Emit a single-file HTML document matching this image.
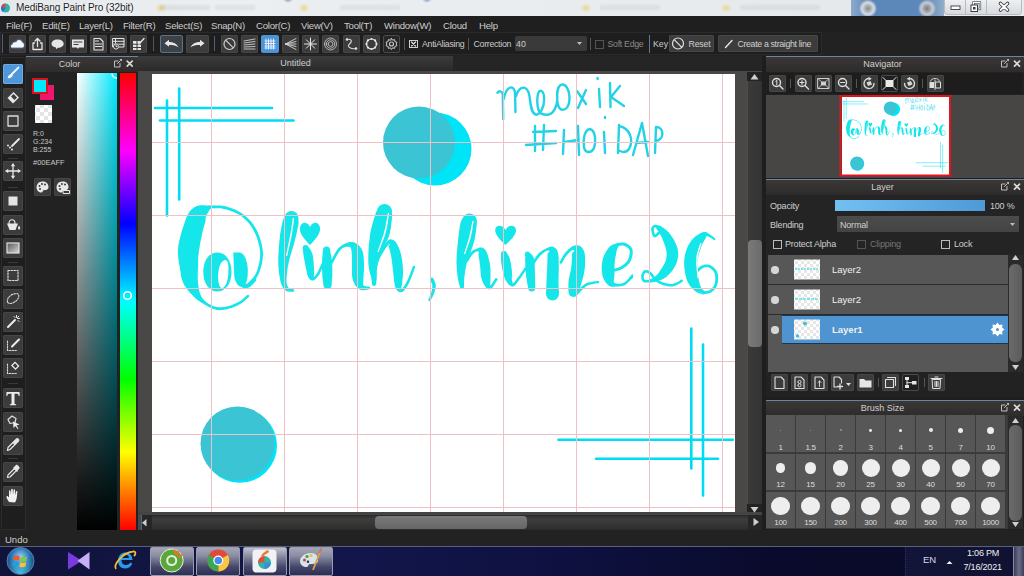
<!DOCTYPE html><html><head><meta charset="utf-8"><style>
*{margin:0;padding:0;box-sizing:border-box}
html,body{width:1024px;height:576px;overflow:hidden;background:#222;font-family:"Liberation Sans",sans-serif}
.a{position:absolute}
.btn{position:absolute;background:#3c3c3c;border-radius:2px}
.ph{position:absolute;height:16px;background:linear-gradient(#3a3735,#2e2c2b);border-top:1px solid #6a86a2;color:#d0d0d0;font-size:9px;text-align:center;line-height:15px;padding-right:25px}
.t{position:absolute;color:#d0d0d0;white-space:nowrap;line-height:1}
svg{position:absolute;left:0;top:0}
</style></head><body>
<div class="a" style="left:0px;top:0px;width:1024px;height:16px;background:linear-gradient(90deg,#e4e8eb 0%,#eceff1 20%,#e9ecef 60%,#e6e9ec 82%,#e8ebee 100%)"></div>
<div class="a" style="left:851px;top:0px;width:93px;height:16px;background:linear-gradient(90deg,#8eaacb,#5a86b8 20%,#5d88ba 80%,#93adc9)"></div>
<div class="a" style="left:155px;top:3px;width:12px;height:10px;background:radial-gradient(#e8d890,rgba(230,220,160,0) 70%)"></div>
<div class="a" style="left:298px;top:3px;width:12px;height:10px;background:radial-gradient(#e8d890,rgba(230,220,160,0) 70%)"></div>
<div class="a" style="left:283px;top:-4px;width:10px;height:7px;background:radial-gradient(#7a9ac8,rgba(120,150,200,0) 70%)"></div>
<div class="a" style="left:422px;top:-4px;width:10px;height:7px;background:radial-gradient(#7a9ac8,rgba(120,150,200,0) 70%)"></div>
<div class="a" style="left:580px;top:3px;width:12px;height:10px;background:radial-gradient(#e8d890,rgba(230,220,160,0) 70%)"></div>
<div class="a" style="left:720px;top:3px;width:12px;height:10px;background:radial-gradient(#e8d890,rgba(230,220,160,0) 70%)"></div>
<div class="a" style="left:858px;top:0px;width:20px;height:17px;background:radial-gradient(circle,#8a8a8a 0,#b8bec6 30%,#d8dde2 45%,rgba(200,210,220,0) 70%)"></div>
<div class="a" style="left:917px;top:0px;width:20px;height:17px;background:radial-gradient(circle,#7a7a7a 0,#a8aeb6 30%,#c8ccd2 45%,rgba(200,210,220,0) 70%)"></div>
<div class="a" style="left:160px;top:5px;width:50px;height:5px;background:rgba(0,0,0,0.06);filter:blur(1px)"></div>
<div class="a" style="left:215px;top:5px;width:40px;height:5px;background:rgba(0,0,0,0.05);filter:blur(1px)"></div>
<div class="a" style="left:340px;top:5px;width:60px;height:5px;background:rgba(0,0,0,0.05);filter:blur(1px)"></div>
<div class="a" style="left:600px;top:5px;width:60px;height:5px;background:rgba(0,0,0,0.05);filter:blur(1px)"></div>
<div class="a" style="left:740px;top:5px;width:80px;height:5px;background:rgba(0,0,0,0.05);filter:blur(1px)"></div>
<div class="t" style="left:16px;top:3px;font-size:10px;color:#1e1e1e;letter-spacing:-0.1px;text-shadow:0 0 3px #fff">MediBang Paint Pro (32bit)</div>
<div class="a" style="left:944px;top:0px;width:78px;height:15px;background:linear-gradient(#eef0f2,#d6dade);border:1px solid #b8bcc2;border-top:none;border-radius:0 0 4px 4px"></div>
<div class="a" style="left:965px;top:0px;width:1px;height:15px;background:#b8bcc2"></div>
<div class="a" style="left:986px;top:0px;width:1px;height:15px;background:#b8bcc2"></div>
<div class="a" style="left:0px;top:16px;width:1024px;height:16px;background:#1f1f1f"></div>
<div class="t" style="left:6px;top:21px;font-size:9.6px;color:#cdcdcd;letter-spacing:-0.25px">File(F)</div>
<div class="t" style="left:42px;top:21px;font-size:9.6px;color:#cdcdcd;letter-spacing:-0.25px">Edit(E)</div>
<div class="t" style="left:79px;top:21px;font-size:9.6px;color:#cdcdcd;letter-spacing:-0.25px">Layer(L)</div>
<div class="t" style="left:123px;top:21px;font-size:9.6px;color:#cdcdcd;letter-spacing:-0.25px">Filter(R)</div>
<div class="t" style="left:165px;top:21px;font-size:9.6px;color:#cdcdcd;letter-spacing:-0.25px">Select(S)</div>
<div class="t" style="left:211px;top:21px;font-size:9.6px;color:#cdcdcd;letter-spacing:-0.25px">Snap(N)</div>
<div class="t" style="left:256px;top:21px;font-size:9.6px;color:#cdcdcd;letter-spacing:-0.25px">Color(C)</div>
<div class="t" style="left:301px;top:21px;font-size:9.6px;color:#cdcdcd;letter-spacing:-0.25px">View(V)</div>
<div class="t" style="left:344px;top:21px;font-size:9.6px;color:#cdcdcd;letter-spacing:-0.25px">Tool(T)</div>
<div class="t" style="left:384px;top:21px;font-size:9.6px;color:#cdcdcd;letter-spacing:-0.25px">Window(W)</div>
<div class="t" style="left:443px;top:21px;font-size:9.6px;color:#cdcdcd;letter-spacing:-0.25px">Cloud</div>
<div class="t" style="left:479px;top:21px;font-size:9.6px;color:#cdcdcd;letter-spacing:-0.25px">Help</div>
<div class="a" style="left:0px;top:32px;width:1024px;height:24px;background:#222"></div>
<div class="a" style="left:0px;top:32px;width:822px;height:23px;background:#1e1e1e;border:1px solid #2a2a2a"></div>
<div class="btn" style="left:9px;top:35px;width:17px;height:18px;background:#3c3c3c;box-shadow:inset 0 0 0 1px #474747;"></div>
<div class="btn" style="left:29px;top:35px;width:17px;height:18px;background:#3c3c3c;box-shadow:inset 0 0 0 1px #474747;"></div>
<div class="btn" style="left:49px;top:35px;width:17px;height:18px;background:#3c3c3c;box-shadow:inset 0 0 0 1px #474747;"></div>
<div class="btn" style="left:70px;top:35px;width:17px;height:18px;background:#3c3c3c;box-shadow:inset 0 0 0 1px #474747;"></div>
<div class="btn" style="left:90px;top:35px;width:17px;height:18px;background:#3c3c3c;box-shadow:inset 0 0 0 1px #474747;"></div>
<div class="btn" style="left:110px;top:35px;width:17px;height:18px;background:#3c3c3c;box-shadow:inset 0 0 0 1px #474747;"></div>
<div class="btn" style="left:130px;top:35px;width:17px;height:18px;background:#3c3c3c;box-shadow:inset 0 0 0 1px #474747;"></div>
<div class="a" style="left:2px;top:34px;width:1px;height:19px;background:#4e6275"></div>
<div class="a" style="left:153px;top:36px;width:1px;height:15px;background:#555"></div>
<div class="btn" style="left:160px;top:35px;width:23px;height:18px;background:#3d4247;border:1px solid #5a7490"></div>
<div class="btn" style="left:186px;top:35px;width:23px;height:18px;background:#3c3c3c;box-shadow:inset 0 0 0 1px #474747;"></div>
<div class="a" style="left:214px;top:36px;width:1px;height:15px;background:#4e6275"></div>
<div class="btn" style="left:221px;top:35px;width:17px;height:18px;background:#3c3c3c;box-shadow:inset 0 0 0 1px #474747;"></div>
<div class="btn" style="left:241px;top:35px;width:17px;height:18px;background:#3c3c3c;box-shadow:inset 0 0 0 1px #474747;"></div>
<div class="btn" style="left:282px;top:35px;width:17px;height:18px;background:#3c3c3c;box-shadow:inset 0 0 0 1px #474747;"></div>
<div class="btn" style="left:302px;top:35px;width:17px;height:18px;background:#3c3c3c;box-shadow:inset 0 0 0 1px #474747;"></div>
<div class="btn" style="left:322px;top:35px;width:17px;height:18px;background:#3c3c3c;box-shadow:inset 0 0 0 1px #474747;"></div>
<div class="btn" style="left:343px;top:35px;width:17px;height:18px;background:#3c3c3c;box-shadow:inset 0 0 0 1px #474747;"></div>
<div class="btn" style="left:363px;top:35px;width:17px;height:18px;background:#3c3c3c;box-shadow:inset 0 0 0 1px #474747;"></div>
<div class="btn" style="left:261px;top:35px;width:18px;height:18px;background:#4d94d6;"></div>
<div class="btn" style="left:383px;top:35px;width:17px;height:18px;background:#262626;border:1px solid #4a4a4a"></div>
<div class="a" style="left:404px;top:38px;width:1px;height:12px;background:#555"></div>
<div class="a" style="left:409px;top:40px;width:9px;height:8px;border:1px solid #cfcfcf"></div>
<div class="t" style="left:422px;top:40px;font-size:8.8px;color:#cccccc;letter-spacing:-0.3px">AntiAliasing</div>
<div class="a" style="left:468px;top:38px;width:1px;height:12px;background:#555"></div>
<div class="t" style="left:473.5px;top:40px;font-size:8.8px;color:#cccccc;letter-spacing:-0.3px">Correction</div>
<div class="btn" style="left:515px;top:36px;width:72px;height:15px;background:#3a3a3a;"></div>
<div class="t" style="left:516px;top:40px;font-size:8.8px;color:#cccccc;">40</div>
<div class="a" style="left:590px;top:38px;width:1px;height:12px;background:#555"></div>
<div class="a" style="left:595px;top:40px;width:9px;height:9px;border:1px solid #555"></div>
<div class="t" style="left:607.5px;top:40px;font-size:8.8px;color:#8a8a8a;letter-spacing:-0.3px">Soft Edge</div>
<div class="a" style="left:649px;top:35px;width:1px;height:18px;background:#5a7a9a"></div>
<div class="t" style="left:653px;top:40px;font-size:8.8px;color:#cccccc;">Key</div>
<div class="btn" style="left:669px;top:35px;width:45px;height:17px;background:#3c3c3c;box-shadow:inset 0 0 0 1px #474747;"></div>
<div class="t" style="left:688.5px;top:40px;font-size:8.8px;color:#d0d0d0;letter-spacing:-0.2px">Reset</div>
<div class="btn" style="left:718px;top:35px;width:100px;height:17px;background:#3c3c3c;box-shadow:inset 0 0 0 1px #474747;"></div>
<div class="t" style="left:737.5px;top:40px;font-size:8.8px;color:#d0d0d0;letter-spacing:-0.35px">Create a straight line</div>
<div class="a" style="left:0px;top:56px;width:26px;height:474px;background:#1e1e1e"></div>
<div class="a" style="left:1px;top:57px;width:25px;height:473px;border:1px solid #2c2c2c"></div>
<div class="btn" style="left:3px;top:64px;width:20px;height:20px;background:#4f97d8;box-shadow:inset 0 0 0 1px #6aaae6"></div>
<div class="btn" style="left:3px;top:88px;width:20px;height:20px;background:#3c3c3c;box-shadow:inset 0 0 0 1px #474747;"></div>
<div class="btn" style="left:3px;top:111px;width:20px;height:20px;background:#3c3c3c;box-shadow:inset 0 0 0 1px #474747;"></div>
<div class="btn" style="left:3px;top:134px;width:20px;height:20px;background:#3c3c3c;box-shadow:inset 0 0 0 1px #474747;"></div>
<div class="btn" style="left:3px;top:161px;width:20px;height:20px;background:#3c3c3c;box-shadow:inset 0 0 0 1px #474747;"></div>
<div class="btn" style="left:3px;top:191px;width:20px;height:20px;background:#3c3c3c;box-shadow:inset 0 0 0 1px #474747;"></div>
<div class="btn" style="left:3px;top:214.5px;width:20px;height:20px;background:#3c3c3c;box-shadow:inset 0 0 0 1px #474747;"></div>
<div class="btn" style="left:3px;top:238px;width:20px;height:20px;background:#3c3c3c;box-shadow:inset 0 0 0 1px #474747;"></div>
<div class="btn" style="left:3px;top:265.5px;width:20px;height:20px;background:#3c3c3c;box-shadow:inset 0 0 0 1px #474747;"></div>
<div class="btn" style="left:3px;top:289px;width:20px;height:20px;background:#3c3c3c;box-shadow:inset 0 0 0 1px #474747;"></div>
<div class="btn" style="left:3px;top:312px;width:20px;height:20px;background:#3c3c3c;box-shadow:inset 0 0 0 1px #474747;"></div>
<div class="btn" style="left:3px;top:335px;width:20px;height:20px;background:#3c3c3c;box-shadow:inset 0 0 0 1px #474747;"></div>
<div class="btn" style="left:3px;top:358px;width:20px;height:20px;background:#3c3c3c;box-shadow:inset 0 0 0 1px #474747;"></div>
<div class="btn" style="left:3px;top:387.5px;width:20px;height:20px;background:#3c3c3c;box-shadow:inset 0 0 0 1px #474747;"></div>
<div class="btn" style="left:3px;top:411.5px;width:20px;height:20px;background:#3c3c3c;box-shadow:inset 0 0 0 1px #474747;"></div>
<div class="btn" style="left:3px;top:435px;width:20px;height:20px;background:#3c3c3c;box-shadow:inset 0 0 0 1px #474747;"></div>
<div class="btn" style="left:3px;top:462px;width:20px;height:20px;background:#3c3c3c;box-shadow:inset 0 0 0 1px #474747;"></div>
<div class="btn" style="left:3px;top:485.5px;width:20px;height:20px;background:#3c3c3c;box-shadow:inset 0 0 0 1px #474747;"></div>
<div class="a" style="left:8px;top:157.5px;width:10px;height:1px;background:#3a3a3a"></div>
<div class="a" style="left:8px;top:186.5px;width:10px;height:1px;background:#3a3a3a"></div>
<div class="a" style="left:8px;top:261.5px;width:10px;height:1px;background:#3a3a3a"></div>
<div class="a" style="left:8px;top:383px;width:10px;height:1px;background:#3a3a3a"></div>
<div class="a" style="left:8px;top:457.5px;width:10px;height:1px;background:#3a3a3a"></div>
<div class="ph" style="left:26px;top:56px;width:112px">Color</div>
<div class="a" style="left:26px;top:72px;width:112px;height:458px;background:#222"></div>
<div class="a" style="left:77px;top:73px;width:40px;height:457px;background:linear-gradient(180deg,rgba(0,0,0,0),#000),linear-gradient(90deg,#fff,#00eaff)"></div>
<div class="a" style="left:120px;top:73px;width:16px;height:457px;background:linear-gradient(180deg,#ff0000 0%,#ff00ff 17%,#0000ff 33%,#00ffff 50%,#00ff00 67%,#ffff00 83%,#ff0000 100%)"></div>
<div class="a" style="left:40px;top:85px;width:14px;height:15px;background:#f0166e"></div>
<div class="a" style="left:32px;top:78px;width:16px;height:16px;background:#00eaff;border:2px solid #e0101a"></div>
<div class="t" style="left:33px;top:130px;font-size:7px;color:#c8c8c8;">R:0</div>
<div class="t" style="left:33px;top:138px;font-size:7px;color:#c8c8c8;">G:234</div>
<div class="t" style="left:33px;top:146px;font-size:7px;color:#c8c8c8;">B:255</div>
<div class="t" style="left:33px;top:159px;font-size:7.5px;color:#c8c8c8;">#00EAFF</div>
<div class="btn" style="left:34px;top:178px;width:17px;height:18px;background:#3c3c3c;box-shadow:inset 0 0 0 1px #474747;"></div>
<div class="btn" style="left:54px;top:178px;width:17px;height:18px;background:#3c3c3c;box-shadow:inset 0 0 0 1px #474747;"></div>
<div class="a" style="left:138px;top:56px;width:627px;height:474px;background:#4a4847"></div>
<div class="a" style="left:138px;top:56px;width:627px;height:15px;background:#252525"></div>
<div class="a" style="left:138px;top:56px;width:315px;height:15px;background:linear-gradient(#3c3c3c,#2a2a2a);color:#cfcfcf;font-size:9px;text-align:center;line-height:15px">Untitled</div>
<div class="a" style="left:152px;top:74px;width:583px;height:438px;background:#fff"></div>
<div class="a" style="left:747px;top:72px;width:16px;height:441px;background:linear-gradient(90deg,#4e4d4c 0,#4e4d4c 1px,#3a3938 1px,#363636 60%,#333 93%,#484848 93%)"></div>
<div class="a" style="left:747px;top:72px;width:15px;height:9px;background:#232323"></div>
<div class="a" style="left:747px;top:504px;width:15px;height:10px;background:#232323"></div>
<div class="a" style="left:748px;top:239.5px;width:13.5px;height:107px;background:linear-gradient(90deg,#7a7a7a,#6a6a6a);border-radius:4px"></div>
<div class="a" style="left:138px;top:512px;width:624px;height:3px;background:#454443"></div>
<div class="a" style="left:141px;top:515px;width:607px;height:15px;background:linear-gradient(#2a2a2a,#3e3d3c 25%,#363636 60%,#2c2c2c)"></div>
<div class="a" style="left:141px;top:515px;width:11px;height:15px;background:#262626;border-left:1px solid #4a6a8a"></div>
<div class="a" style="left:374.5px;top:515.8px;width:152.5px;height:13.2px;background:linear-gradient(#7a7a7a,#666);border-radius:4px"></div>
<div class="a" style="left:748px;top:515px;width:14px;height:15px;background:#262626"></div>
<div class="a" style="left:762px;top:56px;width:262px;height:474px;background:#1e1e1e"></div>
<div class="ph" style="left:766px;top:56px;width:258px">Navigator</div>
<div class="a" style="left:766px;top:72px;width:258px;height:23px;background:#222"></div>
<div class="a" style="left:767px;top:73px;width:255px;height:21px;background:#1d1d1d"></div>
<div class="btn" style="left:769px;top:75px;width:17px;height:17px;background:#3c3c3c;box-shadow:inset 0 0 0 1px #474747;"></div>
<div class="btn" style="left:794.5px;top:75px;width:17px;height:17px;background:#3c3c3c;box-shadow:inset 0 0 0 1px #474747;"></div>
<div class="btn" style="left:815px;top:75px;width:17px;height:17px;background:#3c3c3c;box-shadow:inset 0 0 0 1px #474747;"></div>
<div class="btn" style="left:835px;top:75px;width:17px;height:17px;background:#3c3c3c;box-shadow:inset 0 0 0 1px #474747;"></div>
<div class="btn" style="left:860.5px;top:75px;width:17px;height:17px;background:#3c3c3c;box-shadow:inset 0 0 0 1px #474747;"></div>
<div class="btn" style="left:901px;top:75px;width:17px;height:17px;background:#3c3c3c;box-shadow:inset 0 0 0 1px #474747;"></div>
<div class="btn" style="left:926.5px;top:75px;width:17px;height:17px;background:#3c3c3c;box-shadow:inset 0 0 0 1px #474747;"></div>
<div class="btn" style="left:881px;top:75px;width:17px;height:17px;background:#1f1f1f;border:1px solid #4a4a4a"></div>
<div class="a" style="left:790px;top:79px;width:1px;height:9px;background:#555"></div>
<div class="a" style="left:856px;top:79px;width:1px;height:9px;background:#555"></div>
<div class="a" style="left:922px;top:79px;width:1px;height:9px;background:#555"></div>
<div class="a" style="left:766px;top:95px;width:258px;height:83px;background:#484644"></div>
<div class="ph" style="left:766px;top:179px;width:258px">Layer</div>
<div class="a" style="left:766px;top:195px;width:258px;height:202px;background:#242424"></div>
<div class="t" style="left:770px;top:202px;font-size:9px;color:#cfcfcf;letter-spacing:-0.2px">Opacity</div>
<div class="a" style="left:835px;top:200px;width:150px;height:11px;background:linear-gradient(90deg,#72c0f2,#4e9ad8)"></div>
<div class="t" style="left:990px;top:202px;font-size:9px;color:#cfcfcf;letter-spacing:-0.2px">100 %</div>
<div class="t" style="left:770px;top:221px;font-size:9px;color:#cfcfcf;letter-spacing:-0.2px">Blending</div>
<div class="a" style="left:837px;top:216px;width:182px;height:16px;background:linear-gradient(#4c4c4c,#444)"></div>
<div class="t" style="left:840px;top:221px;font-size:9px;color:#cfcfcf;letter-spacing:-0.2px">Normal</div>
<div class="a" style="left:773px;top:240px;width:9px;height:9px;border:1px solid #bbb"></div>
<div class="t" style="left:785px;top:240px;font-size:9px;color:#cfcfcf;letter-spacing:-0.2px">Protect Alpha</div>
<div class="a" style="left:857px;top:240px;width:9px;height:9px;border:1px solid #555"></div>
<div class="t" style="left:870px;top:240px;font-size:9px;color:#777;letter-spacing:-0.2px">Clipping</div>
<div class="a" style="left:941px;top:240px;width:9px;height:9px;border:1px solid #bbb"></div>
<div class="t" style="left:954px;top:240px;font-size:9px;color:#cfcfcf;letter-spacing:-0.2px">Lock</div>
<div class="a" style="left:768px;top:255px;width:240px;height:117px;background:#575757"></div>
<div class="a" style="left:768px;top:284px;width:240px;height:1px;background:#2b2b2b"></div>
<div class="a" style="left:768px;top:314px;width:240px;height:1px;background:#2b2b2b"></div>
<div class="a" style="left:782px;top:315px;width:226px;height:29px;background:#4d94d0;border-top:1px solid #1d3550;border-bottom:1px solid #1d3550"></div>
<div class="a" style="left:1008px;top:255px;width:15px;height:117px;background:#2a2a2a"></div>
<div class="a" style="left:1009px;top:264px;width:13px;height:98px;background:linear-gradient(90deg,#6a6a6a,#5c5c5c);border-radius:6px"></div>
<div class="a" style="left:771px;top:266.0px;width:7.5px;height:7.5px;border-radius:50%;background:#d6d6d6"></div>
<div class="a" style="left:771px;top:296.0px;width:7.5px;height:7.5px;border-radius:50%;background:#d6d6d6"></div>
<div class="a" style="left:771px;top:326.0px;width:7.5px;height:7.5px;border-radius:50%;background:#d6d6d6"></div>
<div class="t" style="left:832px;top:265px;font-size:9.5px;color:#f0f0f0;">Layer2</div>
<div class="t" style="left:832px;top:295px;font-size:9.5px;color:#f0f0f0;">Layer2</div>
<div class="t" style="left:832px;top:325px;font-size:9.5px;color:#f0f0f0;font-weight:bold">Layer1</div>
<div class="a" style="left:766px;top:372px;width:258px;height:25px;background:#222"></div>
<div class="btn" style="left:771px;top:374px;width:17px;height:17px;background:#3c3c3c;box-shadow:inset 0 0 0 1px #474747;"></div>
<div class="btn" style="left:791px;top:374px;width:17px;height:17px;background:#3c3c3c;box-shadow:inset 0 0 0 1px #474747;"></div>
<div class="btn" style="left:811px;top:374px;width:17px;height:17px;background:#3c3c3c;box-shadow:inset 0 0 0 1px #474747;"></div>
<div class="btn" style="left:857px;top:374px;width:17px;height:17px;background:#3c3c3c;box-shadow:inset 0 0 0 1px #474747;"></div>
<div class="btn" style="left:882px;top:374px;width:17px;height:17px;background:#3c3c3c;box-shadow:inset 0 0 0 1px #474747;"></div>
<div class="btn" style="left:928px;top:374px;width:17px;height:17px;background:#3c3c3c;box-shadow:inset 0 0 0 1px #474747;"></div>
<div class="btn" style="left:831px;top:374px;width:23px;height:17px;background:#3c3c3c;box-shadow:inset 0 0 0 1px #474747;"></div>
<div class="btn" style="left:902px;top:374px;width:17px;height:17px;background:#1f1f1f;border:1px solid #4a4a4a"></div>
<div class="a" style="left:878px;top:378px;width:1px;height:9px;background:#555"></div>
<div class="a" style="left:924px;top:378px;width:1px;height:9px;background:#555"></div>
<div class="ph" style="left:766px;top:400px;width:258px">Brush Size</div>
<div class="a" style="left:766px;top:415px;width:242px;height:114px;background:#3b3b3b"></div>
<div class="a" style="left:766px;top:415px;width:29px;height:37px;background:#575757"></div>
<div class="a" style="left:780.0px;top:429.8px;width:1.0px;height:1.0px;border-radius:50%;background:#9a9a9a"></div>
<div class="t" style="left:766px;width:29px;text-align:center;top:443.5px;font-size:8px;color:#dedede;letter-spacing:-0.3px">1</div>
<div class="a" style="left:796px;top:415px;width:29px;height:37px;background:#575757"></div>
<div class="a" style="left:809.8px;top:429.6px;width:1.4px;height:1.4px;border-radius:50%;background:#9a9a9a"></div>
<div class="t" style="left:796px;width:29px;text-align:center;top:443.5px;font-size:8px;color:#dedede;letter-spacing:-0.3px">1.5</div>
<div class="a" style="left:826px;top:415px;width:29px;height:37px;background:#575757"></div>
<div class="a" style="left:839.5px;top:429.3px;width:2px;height:2px;border-radius:50%;background:#9a9a9a"></div>
<div class="t" style="left:826px;width:29px;text-align:center;top:443.5px;font-size:8px;color:#dedede;letter-spacing:-0.3px">2</div>
<div class="a" style="left:856px;top:415px;width:29px;height:37px;background:#575757"></div>
<div class="a" style="left:869.1px;top:428.90000000000003px;width:2.8px;height:2.8px;border-radius:50%;background:#eeeeee"></div>
<div class="t" style="left:856px;width:29px;text-align:center;top:443.5px;font-size:8px;color:#dedede;letter-spacing:-0.3px">3</div>
<div class="a" style="left:886px;top:415px;width:29px;height:37px;background:#575757"></div>
<div class="a" style="left:898.8px;top:428.6px;width:3.4px;height:3.4px;border-radius:50%;background:#eeeeee"></div>
<div class="t" style="left:886px;width:29px;text-align:center;top:443.5px;font-size:8px;color:#dedede;letter-spacing:-0.3px">4</div>
<div class="a" style="left:916px;top:415px;width:29px;height:37px;background:#575757"></div>
<div class="a" style="left:928.5px;top:428.3px;width:4px;height:4px;border-radius:50%;background:#eeeeee"></div>
<div class="t" style="left:916px;width:29px;text-align:center;top:443.5px;font-size:8px;color:#dedede;letter-spacing:-0.3px">5</div>
<div class="a" style="left:946px;top:415px;width:29px;height:37px;background:#575757"></div>
<div class="a" style="left:957.9px;top:427.7px;width:5.2px;height:5.2px;border-radius:50%;background:#eeeeee"></div>
<div class="t" style="left:946px;width:29px;text-align:center;top:443.5px;font-size:8px;color:#dedede;letter-spacing:-0.3px">7</div>
<div class="a" style="left:976px;top:415px;width:29px;height:37px;background:#575757"></div>
<div class="a" style="left:986.9px;top:426.7px;width:7.2px;height:7.2px;border-radius:50%;background:#eeeeee"></div>
<div class="t" style="left:976px;width:29px;text-align:center;top:443.5px;font-size:8px;color:#dedede;letter-spacing:-0.3px">10</div>
<div class="a" style="left:766px;top:454px;width:29px;height:36px;background:#575757"></div>
<div class="a" style="left:775.8px;top:463.3px;width:9.4px;height:9.4px;border-radius:50%;background:#eeeeee"></div>
<div class="t" style="left:766px;width:29px;text-align:center;top:480.9px;font-size:8px;color:#dedede;letter-spacing:-0.3px">12</div>
<div class="a" style="left:796px;top:454px;width:29px;height:36px;background:#575757"></div>
<div class="a" style="left:804.8px;top:462.3px;width:11.4px;height:11.4px;border-radius:50%;background:#eeeeee"></div>
<div class="t" style="left:796px;width:29px;text-align:center;top:480.9px;font-size:8px;color:#dedede;letter-spacing:-0.3px">15</div>
<div class="a" style="left:826px;top:454px;width:29px;height:36px;background:#575757"></div>
<div class="a" style="left:832.7px;top:460.2px;width:15.6px;height:15.6px;border-radius:50%;background:#eeeeee"></div>
<div class="t" style="left:826px;width:29px;text-align:center;top:480.9px;font-size:8px;color:#dedede;letter-spacing:-0.3px">20</div>
<div class="a" style="left:856px;top:454px;width:29px;height:36px;background:#575757"></div>
<div class="a" style="left:861.5px;top:459px;width:18px;height:18px;border-radius:50%;background:#eeeeee"></div>
<div class="t" style="left:856px;width:29px;text-align:center;top:480.9px;font-size:8px;color:#dedede;letter-spacing:-0.3px">25</div>
<div class="a" style="left:886px;top:454px;width:29px;height:36px;background:#575757"></div>
<div class="a" style="left:891.5px;top:459px;width:18px;height:18px;border-radius:50%;background:#eeeeee"></div>
<div class="t" style="left:886px;width:29px;text-align:center;top:480.9px;font-size:8px;color:#dedede;letter-spacing:-0.3px">30</div>
<div class="a" style="left:916px;top:454px;width:29px;height:36px;background:#575757"></div>
<div class="a" style="left:921.5px;top:459px;width:18px;height:18px;border-radius:50%;background:#eeeeee"></div>
<div class="t" style="left:916px;width:29px;text-align:center;top:480.9px;font-size:8px;color:#dedede;letter-spacing:-0.3px">40</div>
<div class="a" style="left:946px;top:454px;width:29px;height:36px;background:#575757"></div>
<div class="a" style="left:951.5px;top:459px;width:18px;height:18px;border-radius:50%;background:#eeeeee"></div>
<div class="t" style="left:946px;width:29px;text-align:center;top:480.9px;font-size:8px;color:#dedede;letter-spacing:-0.3px">50</div>
<div class="a" style="left:976px;top:454px;width:29px;height:36px;background:#575757"></div>
<div class="a" style="left:981.5px;top:459px;width:18px;height:18px;border-radius:50%;background:#eeeeee"></div>
<div class="t" style="left:976px;width:29px;text-align:center;top:480.9px;font-size:8px;color:#dedede;letter-spacing:-0.3px">70</div>
<div class="a" style="left:766px;top:492px;width:29px;height:36px;background:#575757"></div>
<div class="a" style="left:771.3px;top:496.6px;width:18.4px;height:18.4px;border-radius:50%;background:#eeeeee"></div>
<div class="t" style="left:766px;width:29px;text-align:center;top:518.5px;font-size:8px;color:#dedede;letter-spacing:-0.3px">100</div>
<div class="a" style="left:796px;top:492px;width:29px;height:36px;background:#575757"></div>
<div class="a" style="left:801.3px;top:496.6px;width:18.4px;height:18.4px;border-radius:50%;background:#eeeeee"></div>
<div class="t" style="left:796px;width:29px;text-align:center;top:518.5px;font-size:8px;color:#dedede;letter-spacing:-0.3px">150</div>
<div class="a" style="left:826px;top:492px;width:29px;height:36px;background:#575757"></div>
<div class="a" style="left:831.3px;top:496.6px;width:18.4px;height:18.4px;border-radius:50%;background:#eeeeee"></div>
<div class="t" style="left:826px;width:29px;text-align:center;top:518.5px;font-size:8px;color:#dedede;letter-spacing:-0.3px">200</div>
<div class="a" style="left:856px;top:492px;width:29px;height:36px;background:#575757"></div>
<div class="a" style="left:861.3px;top:496.6px;width:18.4px;height:18.4px;border-radius:50%;background:#eeeeee"></div>
<div class="t" style="left:856px;width:29px;text-align:center;top:518.5px;font-size:8px;color:#dedede;letter-spacing:-0.3px">300</div>
<div class="a" style="left:886px;top:492px;width:29px;height:36px;background:#575757"></div>
<div class="a" style="left:891.3px;top:496.6px;width:18.4px;height:18.4px;border-radius:50%;background:#eeeeee"></div>
<div class="t" style="left:886px;width:29px;text-align:center;top:518.5px;font-size:8px;color:#dedede;letter-spacing:-0.3px">400</div>
<div class="a" style="left:916px;top:492px;width:29px;height:36px;background:#575757"></div>
<div class="a" style="left:921.3px;top:496.6px;width:18.4px;height:18.4px;border-radius:50%;background:#eeeeee"></div>
<div class="t" style="left:916px;width:29px;text-align:center;top:518.5px;font-size:8px;color:#dedede;letter-spacing:-0.3px">500</div>
<div class="a" style="left:946px;top:492px;width:29px;height:36px;background:#575757"></div>
<div class="a" style="left:951.3px;top:496.6px;width:18.4px;height:18.4px;border-radius:50%;background:#eeeeee"></div>
<div class="t" style="left:946px;width:29px;text-align:center;top:518.5px;font-size:8px;color:#dedede;letter-spacing:-0.3px">700</div>
<div class="a" style="left:976px;top:492px;width:29px;height:36px;background:#575757"></div>
<div class="a" style="left:981.3px;top:496.6px;width:18.4px;height:18.4px;border-radius:50%;background:#eeeeee"></div>
<div class="t" style="left:976px;width:29px;text-align:center;top:518.5px;font-size:8px;color:#dedede;letter-spacing:-0.3px">1000</div>
<div class="a" style="left:1008px;top:416px;width:15px;height:113px;background:#2a2a2a"></div>
<div class="a" style="left:1009px;top:425px;width:13px;height:96px;background:linear-gradient(90deg,#6a6a6a,#5c5c5c);border-radius:6px"></div>
<svg class="a" width="1024" height="576" viewBox="0 0 1024 576" style="left:0;top:0"><defs><clipPath id="cv"><rect x="152" y="74" width="583" height="438"/></clipPath><clipPath id="nv"><rect x="842" y="97" width="107" height="78"/></clipPath></defs><g clip-path="url(#cv)"><g><circle cx="435" cy="149" r="36.5" fill="#00e4f8"/><circle cx="419" cy="142.5" r="36" fill="#3ac4d4"/><circle cx="239.8" cy="445.6" r="37.2" fill="#00e4f8"/><circle cx="237.5" cy="443.5" r="37" fill="#3ac4d4"/><line x1="155" y1="108" x2="272" y2="108" stroke="#00dcf2" stroke-width="2.6" stroke-linecap="round"/><line x1="160" y1="120.5" x2="293.5" y2="120.5" stroke="#00dcf2" stroke-width="2.6" stroke-linecap="round"/><line x1="167" y1="100.5" x2="167" y2="215.5" stroke="#00dcf2" stroke-width="2.6" stroke-linecap="round"/><line x1="179.2" y1="88.5" x2="179.2" y2="199.5" stroke="#00dcf2" stroke-width="2.6" stroke-linecap="round"/><line x1="691.3" y1="328.5" x2="691.3" y2="468.5" stroke="#00dcf2" stroke-width="2.6" stroke-linecap="round"/><line x1="703" y1="344.5" x2="703" y2="495.5" stroke="#00dcf2" stroke-width="2.6" stroke-linecap="round"/><line x1="558.5" y1="439.7" x2="732.8" y2="439.7" stroke="#00dcf2" stroke-width="2.6" stroke-linecap="round"/><line x1="596" y1="458.8" x2="718" y2="458.8" stroke="#00dcf2" stroke-width="2.6" stroke-linecap="round"/><path fill="#14e6ea" d="M209.3,205.7 L208.4,205.7 L207.3,205.5 L205.9,205.4 L204.3,205.3 L202.6,205.2 L200.6,205.3 L198.6,205.6 L196.5,206.2 L194.3,207.2 L192.4,208.7 L190.7,210.3 L189.4,212.0 L188.3,213.7 L187.3,215.5 L186.5,217.3 L185.8,219.1 L185.2,220.9 L184.6,222.7 L184.0,224.4 L183.4,226.2 L182.7,228.2 L182.1,230.2 L181.4,232.4 L180.8,234.7 L180.2,237.0 L179.6,239.4 L179.1,241.8 L178.6,244.2 L178.3,246.6 L178.1,248.9 L177.9,251.3 L177.9,253.6 L178.1,255.9 L178.3,258.0 L178.5,260.0 L178.8,262.0 L179.1,263.8 L179.5,265.5 L179.8,267.1 L180.0,268.6 L180.2,270.0 L180.4,271.3 L180.6,272.7 L180.8,274.0 L181.0,275.4 L181.3,276.9 L181.6,278.4 L182.1,280.0 L182.6,281.5 L183.3,283.1 L184.1,284.7 L185.1,286.2 L186.1,287.7 L187.2,289.2 L188.3,290.7 L189.5,292.0 L190.7,293.4 L191.9,294.6 L193.0,295.8 L194.1,296.9 L195.1,297.9 L196.1,298.8 L197.1,299.7 L198.1,300.4 L199.1,301.1 L200.1,301.8 L201.1,302.4 L202.1,303.0 L203.1,303.6 L204.2,304.2 L205.3,304.9 L206.4,305.5 L207.6,306.2 L208.8,306.9 L210.1,307.5 L211.4,308.2 L212.7,308.7 L214.1,309.2 L215.4,309.6 L216.8,309.9 L218.2,310.0 L219.6,310.1 L221.0,310.0 L222.4,309.9 L223.8,309.7 L225.1,309.5 L226.5,309.2 L227.8,308.9 L229.1,308.6 L230.3,308.3 L231.6,307.9 L232.8,307.5 L234.1,307.0 L235.3,306.5 L236.4,306.0 L237.6,305.4 L238.7,304.8 L239.7,304.3 L240.7,303.7 L241.7,303.1 L242.6,302.5 L243.6,301.8 L244.4,301.1 L245.3,300.3 L246.0,299.6 L246.8,298.9 L247.4,298.3 L248.0,297.7 L248.4,297.2 L248.8,296.9 L247.2,295.1 L246.8,295.5 L246.3,296.0 L245.7,296.5 L245.0,297.1 L244.3,297.8 L243.6,298.4 L242.8,299.1 L242.0,299.8 L241.2,300.4 L240.3,300.9 L239.4,301.4 L238.5,302.0 L237.4,302.5 L236.4,303.1 L235.3,303.6 L234.2,304.1 L233.1,304.6 L232.0,305.0 L230.8,305.4 L229.7,305.7 L228.5,306.1 L227.2,306.4 L225.9,306.6 L224.7,306.9 L223.4,307.1 L222.1,307.2 L220.8,307.3 L219.6,307.3 L218.4,307.3 L217.2,307.1 L216.1,306.9 L214.9,306.6 L213.7,306.2 L212.5,305.7 L211.3,305.1 L210.1,304.5 L208.9,303.9 L207.8,303.2 L206.8,302.5 L205.8,301.8 L205.0,301.0 L204.2,300.3 L203.5,299.5 L202.8,298.7 L202.2,297.9 L201.7,297.1 L201.2,296.2 L200.8,295.2 L200.3,294.2 L199.9,293.1 L199.5,291.9 L199.2,290.5 L198.9,289.0 L198.6,287.5 L198.4,286.0 L198.2,284.4 L198.0,282.9 L197.9,281.4 L197.8,280.1 L197.7,278.9 L197.7,277.8 L197.7,276.9 L197.7,276.0 L197.7,275.0 L197.8,274.1 L197.8,273.0 L197.8,271.8 L197.9,270.5 L197.9,269.0 L198.0,267.4 L198.0,265.7 L198.1,264.0 L198.1,262.3 L198.2,260.6 L198.2,259.0 L198.3,257.3 L198.4,255.7 L198.6,254.1 L198.8,252.6 L198.9,251.1 L199.2,249.4 L199.5,247.6 L199.8,245.7 L200.1,243.6 L200.5,241.6 L200.9,239.5 L201.4,237.5 L201.8,235.5 L202.2,233.6 L202.6,231.8 L203.0,230.0 L203.5,228.3 L203.9,226.7 L204.3,225.3 L204.7,223.9 L205.0,222.8 L205.3,221.7 L205.5,220.8 L205.6,220.0 L205.6,219.3 L205.6,218.6 L205.6,217.7 L206.0,216.6 L206.5,215.3 L207.2,213.9 L208.0,212.5 L208.8,211.3 L209.5,210.1 L210.2,209.1 L210.7,208.3Z"/><circle cx="210" cy="207" r="1.50" fill="#14e6ea"/><circle cx="248" cy="296" r="1.20" fill="#14e6ea"/><path fill="#14e6ea" d="M209.0,208.4 L209.9,208.4 L211.1,208.4 L212.4,208.3 L213.8,208.2 L215.4,208.2 L217.0,208.2 L218.7,208.2 L220.4,208.3 L222.1,208.5 L223.7,208.9 L225.3,209.3 L227.1,209.8 L228.9,210.3 L230.8,211.0 L232.6,211.6 L234.5,212.4 L236.3,213.2 L238.0,214.1 L239.6,215.1 L241.2,216.1 L242.7,217.3 L244.1,218.5 L245.5,219.7 L246.9,221.1 L248.2,222.5 L249.4,224.0 L250.6,225.6 L251.7,227.2 L252.8,228.9 L253.8,230.7 L254.7,232.5 L255.6,234.5 L256.4,236.6 L257.2,238.8 L257.9,241.1 L258.6,243.4 L259.1,245.6 L259.6,247.9 L259.9,250.0 L260.1,252.1 L260.2,254.1 L260.1,256.2 L259.9,258.3 L259.7,260.4 L259.3,262.4 L258.8,264.4 L258.3,266.4 L257.8,268.2 L257.3,269.9 L256.7,271.5 L256.1,272.9 L255.4,274.2 L254.7,275.5 L253.9,276.6 L253.1,277.7 L252.2,278.7 L251.4,279.6 L250.5,280.5 L249.7,281.3 L249.0,282.0 L248.4,282.6 L247.8,283.0 L247.2,283.4 L246.6,283.7 L246.0,283.9 L245.5,284.1 L244.9,284.3 L244.4,284.5 L243.9,284.6 L243.5,284.8 L244.5,287.2 L244.8,287.1 L245.2,287.0 L245.7,286.8 L246.3,286.7 L247.0,286.5 L247.7,286.2 L248.5,285.8 L249.3,285.3 L250.2,284.7 L251.0,284.0 L251.7,283.3 L252.5,282.4 L253.4,281.5 L254.3,280.5 L255.3,279.4 L256.2,278.3 L257.0,277.0 L257.9,275.6 L258.6,274.1 L259.3,272.5 L259.9,270.8 L260.5,269.0 L261.0,267.1 L261.6,265.1 L262.0,263.0 L262.4,260.8 L262.7,258.6 L262.9,256.4 L263.0,254.1 L262.9,251.9 L262.7,249.7 L262.3,247.4 L261.9,245.0 L261.3,242.7 L260.6,240.3 L259.9,237.9 L259.1,235.7 L258.2,233.4 L257.2,231.3 L256.2,229.3 L255.2,227.5 L254.1,225.7 L252.9,223.9 L251.6,222.3 L250.3,220.7 L248.9,219.2 L247.4,217.7 L245.9,216.4 L244.4,215.1 L242.8,213.9 L241.1,212.7 L239.3,211.7 L237.5,210.7 L235.6,209.8 L233.6,209.0 L231.7,208.3 L229.8,207.7 L227.9,207.1 L226.1,206.6 L224.3,206.1 L222.5,205.8 L220.7,205.6 L218.9,205.4 L217.1,205.4 L215.4,205.4 L213.7,205.4 L212.2,205.5 L210.9,205.6 L209.8,205.6 L209.0,205.6Z"/><circle cx="209" cy="207" r="1.40" fill="#14e6ea"/><circle cx="244" cy="286" r="1.30" fill="#14e6ea"/><path fill="#14e6ea" fill-rule="evenodd" d="M217.4,252.5 C208,252.5 203.3,262 203.3,272 C203.3,283 209,291.6 217.4,291.6 C226,291.6 231.5,283 231.5,272 C231.5,261 226,252.5 217.4,252.5 Z M225.5,260 C222,260 219,265 218.3,273 C217.6,281 219,288 222,288 C225.5,288 228,281 228.4,273 C228.8,265 228,260 225.5,260 Z"/><path fill="#14e6ea" d="M233.3,252.5 L240,252.5 C245,254 247.8,262 247.8,271 C247.8,279 246.5,284.5 243.5,286.5 C240,288 236,285 234.3,277 Z"/><path fill="#14e6ea" d="M243.0,287.8 L243.3,287.8 L243.7,287.8 L244.3,287.9 L244.9,287.9 L245.6,287.9 L246.4,287.9 L247.2,287.9 L248.0,287.7 L248.8,287.5 L249.6,287.1 L250.4,286.6 L251.1,286.0 L251.9,285.3 L252.6,284.6 L253.3,283.8 L254.0,283.1 L254.6,282.3 L255.1,281.7 L255.5,281.2 L255.9,280.8 L254.1,279.2 L253.7,279.6 L253.3,280.1 L252.7,280.7 L252.1,281.4 L251.5,282.1 L250.8,282.8 L250.1,283.5 L249.5,284.1 L248.9,284.6 L248.4,284.9 L247.9,285.0 L247.4,285.2 L246.9,285.3 L246.3,285.3 L245.6,285.3 L245.0,285.3 L244.4,285.3 L243.9,285.2 L243.4,285.2 L243.0,285.2Z"/><circle cx="243" cy="286.5" r="1.30" fill="#14e6ea"/><circle cx="255" cy="280" r="1.20" fill="#14e6ea"/><path fill="#14e6ea" d="M284.6,216.6 L284.5,216.9 L284.4,217.1 L284.2,217.4 L284.0,217.7 L283.8,218.1 L283.6,218.5 L283.4,219.1 L283.1,219.7 L282.9,220.5 L282.7,221.4 L282.4,222.4 L282.1,223.6 L281.9,224.8 L281.6,226.2 L281.3,227.7 L281.0,229.3 L280.7,231.0 L280.4,232.8 L280.1,234.6 L279.9,236.6 L279.7,238.7 L279.4,240.9 L279.2,243.4 L279.0,245.9 L278.8,248.6 L278.6,251.3 L278.5,253.9 L278.3,256.6 L278.3,259.1 L278.3,261.5 L278.3,263.8 L278.4,266.0 L278.6,268.3 L278.8,270.4 L279.0,272.5 L279.3,274.5 L279.5,276.4 L279.9,278.2 L280.2,279.9 L280.5,281.4 L280.9,282.8 L281.3,284.0 L281.7,285.2 L282.2,286.2 L282.7,287.1 L283.2,288.0 L283.8,288.7 L284.4,289.3 L285.0,289.9 L285.7,290.5 L286.5,291.0 L287.4,291.4 L288.3,291.6 L289.2,291.8 L290.0,291.8 L290.8,291.8 L291.5,291.8 L292.0,291.7 L292.5,291.7 L292.8,291.7 L293.2,289.3 L292.8,289.2 L292.2,289.1 L291.7,289.0 L291.0,288.8 L290.4,288.7 L289.8,288.5 L289.3,288.3 L288.9,288.1 L288.6,287.8 L288.3,287.5 L288.1,287.1 L287.8,286.6 L287.5,286.1 L287.3,285.6 L287.0,285.0 L286.9,284.4 L286.7,283.6 L286.6,282.8 L286.5,281.8 L286.5,280.6 L286.5,279.3 L286.6,277.8 L286.7,276.1 L286.9,274.3 L287.1,272.5 L287.3,270.6 L287.6,268.6 L287.9,266.5 L288.3,264.5 L288.7,262.5 L289.2,260.4 L289.8,258.2 L290.4,255.8 L291.1,253.4 L291.8,250.9 L292.6,248.4 L293.3,246.0 L294.0,243.7 L294.6,241.4 L295.1,239.4 L295.6,237.5 L296.0,235.8 L296.4,234.1 L296.8,232.5 L297.1,230.9 L297.4,229.5 L297.7,228.1 L297.9,226.9 L298.2,225.7 L298.3,224.6 L298.5,223.6 L298.6,222.8 L298.6,222.1 L298.6,221.5 L298.6,221.0 L298.5,220.6 L298.5,220.2 L298.4,219.9 L298.4,219.6 L298.4,219.4Z"/><circle cx="291.5" cy="218" r="7.00" fill="#14e6ea"/><circle cx="293" cy="290.5" r="1.25" fill="#14e6ea"/><path fill="#ffffff" d="M292.9,217.9 L292.7,218.9 L292.5,220.2 L292.3,221.6 L292.1,223.3 L291.8,225.1 L291.5,227.0 L291.2,229.0 L290.9,230.9 L290.6,232.9 L290.2,234.9 L289.8,236.9 L289.4,239.1 L288.9,241.5 L288.4,244.0 L287.9,246.4 L287.4,248.8 L286.9,251.0 L286.5,252.9 L286.2,254.6 L285.9,255.9 L287.1,256.1 L287.4,254.9 L287.8,253.2 L288.2,251.3 L288.7,249.1 L289.3,246.7 L289.8,244.3 L290.4,241.8 L290.9,239.4 L291.4,237.2 L291.8,235.1 L292.1,233.2 L292.4,231.2 L292.7,229.2 L293.0,227.2 L293.3,225.3 L293.5,223.5 L293.7,221.8 L293.9,220.3 L294.0,219.1 L294.1,218.1Z"/><path fill="#14e6ea" d="M310,245 C303,238 299.5,233 300,228 C300.5,222 307,220.5 310,227 C313,220.5 319.5,222 320,228 C320.5,233 317,238 310,245 Z"/><path fill="#14e6ea" d="M302.8,249.0 L302.9,249.5 L302.9,250.1 L303.0,250.7 L303.1,251.3 L303.1,252.0 L303.2,252.8 L303.3,253.5 L303.4,254.3 L303.5,255.1 L303.6,256.0 L303.8,256.9 L304.0,258.1 L304.2,259.3 L304.5,260.7 L304.7,262.1 L305.0,263.5 L305.3,264.9 L305.5,266.2 L305.8,267.4 L306.0,268.5 L306.2,269.5 L306.4,270.4 L306.6,271.3 L306.8,272.1 L307.0,273.0 L307.1,273.8 L307.3,274.5 L307.6,275.3 L307.8,276.1 L308.1,276.7 L308.4,277.3 L308.7,277.8 L309.0,278.3 L309.4,278.8 L309.8,279.3 L310.3,279.8 L311.0,280.3 L311.8,280.6 L312.7,280.6 L313.4,280.4 L314.0,280.1 L314.5,279.8 L315.1,279.4 L315.6,278.9 L316.2,278.3 L316.8,277.7 L317.4,277.1 L318.0,276.3 L318.6,275.5 L319.1,274.7 L319.7,273.7 L320.3,272.5 L320.9,271.2 L321.5,269.8 L322.1,268.4 L322.7,267.1 L323.2,265.8 L323.7,264.6 L324.1,263.7 L324.4,263.0 L322.2,262.0 L321.9,262.7 L321.5,263.7 L321.0,264.8 L320.4,266.1 L319.8,267.4 L319.2,268.8 L318.6,270.1 L318.0,271.4 L317.4,272.4 L316.9,273.3 L316.4,274.1 L315.9,274.7 L315.4,275.4 L314.9,276.0 L314.4,276.5 L313.9,276.9 L313.5,277.2 L313.1,277.5 L312.8,277.6 L312.6,277.6 L312.7,277.4 L313.0,277.4 L313.3,277.4 L313.6,277.4 L313.7,277.3 L313.8,277.1 L313.8,276.7 L313.9,276.3 L313.9,275.8 L313.9,275.3 L313.9,274.8 L314.0,274.3 L314.0,273.7 L314.0,273.0 L314.0,272.3 L314.1,271.5 L314.1,270.6 L314.1,269.6 L314.0,268.5 L314.0,267.5 L313.9,266.3 L313.8,265.1 L313.7,263.7 L313.6,262.3 L313.4,260.8 L313.3,259.3 L313.1,257.9 L312.9,256.5 L312.7,255.2 L312.4,254.0 L312.0,252.9 L311.6,251.9 L311.2,250.9 L310.7,250.1 L310.2,249.3 L309.7,248.7 L309.3,248.1 L308.9,247.6 L308.6,247.3 L308.4,247.0Z"/><circle cx="305.6" cy="248" r="3.00" fill="#14e6ea"/><circle cx="323.3" cy="262.5" r="1.20" fill="#14e6ea"/><path fill="#14e6ea" d="M323.0,250.2 L322.9,250.9 L322.8,251.8 L322.7,252.9 L322.6,254.1 L322.5,255.4 L322.4,256.7 L322.2,258.1 L322.1,259.5 L322.1,260.9 L322.0,262.2 L322.0,263.4 L322.0,264.7 L322.0,266.0 L322.0,267.4 L322.0,268.7 L322.1,270.1 L322.1,271.4 L322.2,272.7 L322.2,273.9 L322.3,275.1 L322.4,276.3 L322.5,277.5 L322.6,278.6 L322.8,279.8 L322.9,280.9 L323.1,281.9 L323.2,282.9 L323.3,283.8 L323.4,284.5 L323.5,285.1 L331.5,284.9 L331.6,284.3 L331.6,283.6 L331.7,282.7 L331.8,281.8 L331.9,280.7 L332.0,279.6 L332.1,278.4 L332.2,277.3 L332.3,276.1 L332.3,274.9 L332.3,273.7 L332.3,272.5 L332.3,271.2 L332.3,269.9 L332.3,268.5 L332.3,267.2 L332.2,265.8 L332.2,264.5 L332.1,263.1 L332.0,261.8 L331.9,260.5 L331.7,259.2 L331.5,257.8 L331.2,256.4 L331.0,255.0 L330.7,253.7 L330.5,252.5 L330.3,251.4 L330.1,250.6 L330.0,249.8Z"/><circle cx="326.5" cy="250" r="3.50" fill="#14e6ea"/><circle cx="327.5" cy="285" r="4.00" fill="#14e6ea"/><path fill="#14e6ea" d="M332.8,263.1 L333.2,262.4 L333.7,261.4 L334.3,260.3 L335.0,259.0 L335.7,257.7 L336.4,256.3 L337.1,255.0 L337.8,253.8 L338.5,252.7 L339.1,251.8 L339.7,251.1 L340.3,250.4 L340.8,249.8 L341.3,249.2 L341.8,248.8 L342.3,248.3 L342.8,248.0 L343.4,247.7 L344.0,247.4 L344.6,247.2 L345.3,247.0 L346.0,246.8 L346.8,246.7 L347.6,246.7 L348.4,246.7 L349.1,246.8 L349.7,247.0 L350.2,247.2 L350.5,247.4 L350.7,247.7 L350.9,248.1 L351.1,248.5 L351.2,249.0 L351.3,249.5 L351.4,250.1 L351.5,250.8 L351.6,251.4 L351.6,252.1 L351.7,252.8 L351.7,253.5 L351.8,254.2 L351.8,255.1 L351.8,256.1 L351.9,257.2 L351.9,258.4 L351.9,259.7 L351.9,261.0 L351.9,262.4 L352.0,263.8 L352.0,265.2 L352.0,266.4 L352.0,267.6 L352.0,268.8 L352.0,270.2 L351.9,271.5 L351.9,272.9 L352.0,274.4 L352.1,275.8 L352.3,277.3 L352.5,278.7 L352.9,279.9 L353.3,281.0 L353.7,282.2 L354.3,283.3 L354.8,284.5 L355.5,285.5 L356.2,286.6 L357.0,287.6 L358.0,288.4 L359.0,289.3 L360.4,289.9 L361.7,290.2 L362.9,290.3 L364.1,290.2 L365.2,290.1 L366.2,289.9 L367.1,289.7 L367.9,289.5 L368.5,289.4 L368.9,289.3 L369.1,286.7 L368.5,286.6 L367.8,286.5 L367.0,286.4 L366.1,286.2 L365.2,286.1 L364.4,285.8 L363.7,285.6 L363.1,285.3 L362.9,285.0 L363.0,284.7 L363.0,284.4 L363.0,284.0 L363.1,283.5 L363.1,282.8 L363.2,282.0 L363.2,281.2 L363.3,280.3 L363.4,279.3 L363.4,278.3 L363.5,277.3 L363.5,276.4 L363.6,275.5 L363.6,274.4 L363.7,273.2 L363.8,272.0 L363.9,270.6 L364.0,269.2 L364.0,267.8 L364.0,266.3 L364.0,264.8 L364.0,263.5 L363.9,262.2 L363.9,260.8 L363.8,259.3 L363.7,257.8 L363.6,256.4 L363.4,254.9 L363.2,253.4 L362.8,251.9 L362.3,250.5 L361.7,249.2 L361.0,248.1 L360.2,247.0 L359.4,246.0 L358.5,245.1 L357.5,244.4 L356.5,243.7 L355.4,243.1 L354.4,242.6 L353.3,242.3 L352.1,242.0 L350.9,242.0 L349.8,242.1 L348.8,242.3 L347.8,242.6 L346.8,242.9 L345.9,243.2 L345.0,243.6 L344.2,244.0 L343.4,244.4 L342.7,244.8 L342.0,245.3 L341.3,245.7 L340.6,246.2 L340.0,246.7 L339.4,247.3 L338.7,247.9 L338.1,248.6 L337.5,249.3 L336.9,250.2 L336.2,251.2 L335.5,252.4 L334.7,253.7 L334.0,255.1 L333.3,256.5 L332.6,257.8 L332.0,259.1 L331.4,260.2 L330.9,261.2 L330.6,261.9Z"/><circle cx="331.7" cy="262.5" r="1.30" fill="#14e6ea"/><circle cx="369" cy="288" r="1.30" fill="#14e6ea"/><path fill="#14e6ea" d="M377.1,210.3 L377.0,210.6 L376.9,210.9 L376.7,211.1 L376.6,211.3 L376.5,211.5 L376.3,211.7 L376.1,212.1 L375.9,212.7 L375.7,213.4 L375.4,214.3 L375.0,215.5 L374.6,216.9 L374.1,218.4 L373.6,220.1 L373.1,221.9 L372.5,223.8 L372.0,225.6 L371.5,227.4 L371.1,229.1 L370.8,230.6 L370.5,232.0 L370.3,233.4 L370.1,234.9 L369.9,236.4 L369.7,237.9 L369.5,239.5 L369.3,241.2 L369.1,242.9 L368.9,244.7 L368.8,246.5 L368.6,248.3 L368.5,250.1 L368.5,251.9 L368.4,253.8 L368.3,255.7 L368.3,257.6 L368.3,259.5 L368.3,261.3 L368.4,263.1 L368.5,264.8 L368.7,266.5 L368.9,268.1 L369.2,269.7 L369.5,271.2 L369.8,272.6 L370.2,273.9 L370.5,275.1 L370.8,276.3 L371.1,277.3 L371.3,278.2 L371.4,279.0 L371.5,279.8 L371.6,280.5 L371.7,281.2 L371.8,281.8 L371.9,282.3 L371.9,282.8 L371.9,283.2 L372.0,283.6 L372.0,284.0 L376.0,284.0 L376.0,283.7 L376.1,283.4 L376.2,282.9 L376.2,282.4 L376.3,281.9 L376.4,281.2 L376.5,280.5 L376.6,279.7 L376.7,278.8 L376.7,277.8 L376.8,276.7 L376.8,275.6 L376.8,274.3 L376.8,273.1 L376.8,271.8 L376.9,270.5 L376.9,269.1 L377.1,267.8 L377.2,266.5 L377.5,265.2 L377.8,263.8 L378.2,262.3 L378.6,260.8 L379.1,259.2 L379.6,257.5 L380.1,255.9 L380.7,254.2 L381.3,252.6 L381.9,251.0 L382.4,249.5 L383.0,248.2 L383.7,246.9 L384.3,245.7 L385.1,244.4 L385.8,243.1 L386.5,241.7 L387.3,240.3 L388.0,238.8 L388.6,237.1 L389.2,235.4 L389.7,233.5 L390.1,231.7 L390.5,229.7 L390.8,227.7 L391.1,225.8 L391.3,223.8 L391.6,222.0 L391.7,220.4 L391.9,218.9 L392.0,217.7 L392.1,216.7 L392.2,215.8 L392.2,215.1 L392.2,214.4 L392.2,213.9 L392.1,213.5 L392.1,213.1 L392.0,212.9 L391.9,212.8 L391.9,212.7Z"/><circle cx="384.5" cy="211.5" r="7.50" fill="#14e6ea"/><circle cx="374" cy="284" r="2.00" fill="#14e6ea"/><path fill="#ffffff" d="M387.9,212.9 L387.7,214.0 L387.4,215.5 L387.1,217.2 L386.8,219.1 L386.5,221.1 L386.1,223.3 L385.7,225.5 L385.2,227.7 L384.7,229.8 L384.2,231.8 L383.7,233.8 L383.0,236.0 L382.2,238.3 L381.4,240.6 L380.6,242.9 L379.8,245.2 L379.1,247.2 L378.4,249.0 L377.9,250.6 L377.4,251.8 L378.6,252.2 L379.0,251.0 L379.6,249.5 L380.3,247.7 L381.1,245.6 L381.9,243.4 L382.8,241.1 L383.7,238.8 L384.5,236.5 L385.2,234.3 L385.8,232.2 L386.3,230.2 L386.8,228.0 L387.2,225.8 L387.6,223.5 L387.9,221.4 L388.2,219.3 L388.5,217.4 L388.7,215.7 L389.0,214.2 L389.1,213.1Z"/><path fill="#14e6ea" d="M374.6,277.3 L374.8,276.4 L375.1,275.2 L375.4,273.7 L375.7,272.1 L376.1,270.4 L376.5,268.7 L377.0,266.9 L377.4,265.3 L377.8,263.7 L378.2,262.4 L378.6,261.2 L379.1,260.1 L379.5,259.1 L379.9,258.1 L380.4,257.2 L380.8,256.3 L381.3,255.4 L381.8,254.5 L382.4,253.6 L382.9,252.7 L383.5,251.7 L384.1,250.7 L384.8,249.7 L385.4,248.6 L386.1,247.6 L386.8,246.7 L387.4,245.9 L388.0,245.2 L388.6,244.6 L389.1,244.3 L389.6,244.2 L389.9,244.2 L390.1,244.4 L390.0,244.7 L389.6,244.9 L389.2,245.0 L388.9,245.1 L388.7,245.3 L388.6,245.6 L388.6,245.9 L388.8,246.4 L388.9,247.1 L389.2,248.0 L389.5,248.9 L389.7,250.0 L390.0,251.2 L390.3,252.4 L390.6,253.6 L390.9,254.9 L391.1,256.1 L391.3,257.3 L391.5,258.7 L391.8,260.1 L392.0,261.6 L392.1,263.1 L392.3,264.6 L392.5,266.1 L392.7,267.6 L392.9,269.1 L393.0,270.4 L393.2,271.6 L393.3,272.9 L393.4,274.1 L393.5,275.3 L393.6,276.5 L393.7,277.7 L393.9,278.9 L394.0,280.0 L394.1,281.1 L394.3,282.2 L394.5,283.1 L394.6,283.9 L394.8,284.8 L395.0,285.6 L395.2,286.4 L395.4,287.2 L395.7,287.9 L396.0,288.7 L396.3,289.4 L396.8,290.1 L397.3,290.7 L397.8,291.2 L398.4,291.6 L399.0,292.0 L399.8,292.2 L400.6,292.3 L401.4,292.3 L402.1,292.0 L402.8,291.7 L403.4,291.2 L404.0,290.6 L404.5,290.0 L405.1,289.4 L405.6,288.6 L406.2,287.8 L406.8,286.9 L407.4,285.9 L408.0,284.8 L408.6,283.7 L409.2,282.6 L409.8,281.2 L410.4,279.7 L411.1,278.0 L411.8,276.2 L412.5,274.4 L413.2,272.7 L413.8,271.0 L414.3,269.6 L414.8,268.4 L415.1,267.4 L412.9,266.6 L412.5,267.5 L412.0,268.7 L411.5,270.2 L410.9,271.8 L410.2,273.6 L409.5,275.3 L408.8,277.1 L408.1,278.7 L407.4,280.2 L406.8,281.4 L406.3,282.5 L405.7,283.5 L405.1,284.5 L404.5,285.4 L404.0,286.2 L403.4,287.0 L402.9,287.6 L402.4,288.1 L402.0,288.5 L401.6,288.8 L401.3,288.9 L401.1,288.9 L401.1,288.8 L401.1,288.7 L401.1,288.6 L401.2,288.5 L401.2,288.4 L401.2,288.3 L401.2,288.1 L401.2,287.9 L401.3,287.7 L401.4,287.4 L401.5,287.1 L401.6,286.6 L401.7,286.0 L401.8,285.3 L402.0,284.6 L402.1,283.7 L402.2,282.8 L402.3,281.8 L402.4,280.9 L402.5,279.9 L402.6,278.8 L402.7,277.7 L402.8,276.5 L402.9,275.2 L403.0,273.9 L403.0,272.5 L403.0,271.0 L403.0,269.6 L402.9,268.2 L402.8,266.6 L402.7,265.1 L402.5,263.5 L402.3,261.8 L402.1,260.2 L401.8,258.5 L401.6,256.9 L401.2,255.4 L400.9,253.9 L400.5,252.5 L400.0,251.0 L399.6,249.6 L399.0,248.3 L398.5,246.9 L397.9,245.7 L397.3,244.5 L396.7,243.4 L396.1,242.4 L395.4,241.6 L394.6,240.9 L393.8,240.3 L392.9,239.8 L391.8,239.4 L390.6,239.3 L389.5,239.5 L388.7,240.0 L388.0,240.5 L387.4,241.1 L386.9,241.7 L386.3,242.4 L385.7,243.2 L385.0,244.0 L384.4,245.0 L383.7,246.0 L383.0,247.1 L382.3,248.2 L381.7,249.2 L381.1,250.3 L380.5,251.3 L380.0,252.3 L379.5,253.2 L379.0,254.1 L378.5,255.1 L378.0,256.0 L377.5,257.0 L377.1,258.1 L376.6,259.2 L376.2,260.3 L375.8,261.6 L375.3,263.0 L374.9,264.6 L374.4,266.3 L374.0,268.1 L373.6,269.8 L373.2,271.6 L372.8,273.2 L372.5,274.6 L372.2,275.8 L372.0,276.7Z"/><circle cx="373.3" cy="277" r="1.30" fill="#14e6ea"/><circle cx="414" cy="267" r="1.20" fill="#14e6ea"/><path fill="#14e6ea" d="M430.1,279.9 L430.3,280.3 L430.5,280.8 L430.8,281.3 L431.0,281.8 L431.3,282.4 L431.6,283.0 L431.8,283.6 L432.0,284.2 L432.2,284.7 L432.3,285.2 L432.3,285.7 L432.3,286.3 L432.3,286.9 L432.3,287.5 L432.2,288.1 L432.1,288.8 L432.0,289.4 L431.9,290.1 L431.7,290.9 L431.6,291.6 L431.4,292.3 L431.1,293.1 L430.8,294.0 L430.4,295.0 L430.0,295.9 L429.6,296.8 L429.3,297.6 L429.0,298.4 L428.7,299.0 L428.5,299.5 L430.7,300.5 L430.9,300.0 L431.2,299.4 L431.6,298.7 L432.0,297.9 L432.5,297.0 L432.9,296.1 L433.3,295.1 L433.8,294.2 L434.1,293.3 L434.4,292.4 L434.7,291.7 L434.9,290.9 L435.1,290.1 L435.3,289.4 L435.5,288.6 L435.6,287.9 L435.7,287.1 L435.8,286.3 L435.8,285.6 L435.7,284.8 L435.6,284.0 L435.4,283.2 L435.1,282.4 L434.8,281.6 L434.5,280.9 L434.2,280.3 L433.9,279.7 L433.6,279.2 L433.4,278.8 L433.3,278.5Z"/><circle cx="431.7" cy="279.2" r="1.75" fill="#14e6ea"/><circle cx="429.6" cy="300" r="1.20" fill="#14e6ea"/><path fill="#14e6ea" d="M462.2,219.1 L462.2,219.2 L462.1,219.3 L461.9,219.6 L461.7,220.0 L461.4,220.5 L461.2,221.1 L460.9,221.8 L460.7,222.6 L460.4,223.5 L460.2,224.6 L459.9,225.8 L459.7,227.1 L459.5,228.5 L459.3,229.9 L459.1,231.5 L458.9,233.0 L458.7,234.6 L458.5,236.3 L458.3,237.9 L458.1,239.5 L458.0,241.2 L457.8,243.0 L457.6,244.9 L457.4,246.8 L457.2,248.9 L457.1,251.0 L456.9,253.1 L456.7,255.2 L456.6,257.2 L456.6,259.2 L456.5,261.1 L456.5,263.0 L456.6,264.8 L456.7,266.5 L456.8,268.3 L456.9,269.9 L457.0,271.5 L457.2,273.1 L457.3,274.6 L457.5,276.0 L457.7,277.5 L457.9,278.9 L458.2,280.3 L458.5,281.6 L458.8,282.8 L459.1,283.9 L459.4,285.0 L459.7,285.9 L459.9,286.6 L460.0,287.2 L464.0,286.8 L464.0,286.1 L464.0,285.3 L464.0,284.4 L464.0,283.3 L464.0,282.2 L464.1,281.0 L464.1,279.8 L464.2,278.5 L464.3,277.2 L464.5,276.0 L464.7,274.6 L464.9,273.2 L465.1,271.8 L465.3,270.3 L465.6,268.7 L465.9,267.2 L466.2,265.6 L466.6,264.0 L467.0,262.4 L467.4,260.8 L467.9,259.2 L468.5,257.5 L469.2,255.7 L469.9,253.9 L470.6,252.0 L471.3,250.1 L472.0,248.1 L472.7,246.2 L473.3,244.3 L473.9,242.5 L474.3,240.7 L474.7,238.9 L475.0,237.1 L475.3,235.4 L475.6,233.8 L475.8,232.2 L476.0,230.8 L476.1,229.5 L476.3,228.4 L476.4,227.4 L476.5,226.6 L476.6,226.0 L476.6,225.4 L476.7,225.0 L476.7,224.7 L476.6,224.4 L476.6,224.1 L476.6,223.7 L476.7,223.3 L476.8,222.9Z"/><circle cx="469.5" cy="221" r="7.50" fill="#14e6ea"/><circle cx="462" cy="287" r="2.00" fill="#14e6ea"/><path fill="#ffffff" d="M472.4,220.9 L472.2,221.8 L472.0,223.1 L471.7,224.5 L471.4,226.1 L471.1,227.8 L470.8,229.6 L470.4,231.5 L470.0,233.3 L469.6,235.1 L469.2,236.8 L468.8,238.5 L468.2,240.4 L467.6,242.3 L467.0,244.3 L466.4,246.3 L465.8,248.2 L465.2,249.9 L464.7,251.5 L464.3,252.8 L463.9,253.8 L465.1,254.2 L465.4,253.2 L465.9,251.9 L466.4,250.3 L467.1,248.6 L467.7,246.7 L468.4,244.8 L469.1,242.8 L469.7,240.8 L470.3,239.0 L470.8,237.2 L471.2,235.5 L471.6,233.6 L471.9,231.8 L472.3,229.9 L472.6,228.1 L472.8,226.3 L473.1,224.7 L473.3,223.3 L473.5,222.1 L473.6,221.1Z"/><path fill="#14e6ea" d="M468.1,261.1 L468.4,260.6 L468.8,260.0 L469.2,259.3 L469.8,258.5 L470.3,257.6 L470.9,256.7 L471.4,255.9 L472.0,255.1 L472.5,254.5 L473.0,254.0 L473.5,253.5 L473.9,253.1 L474.4,252.7 L474.9,252.4 L475.4,252.1 L475.9,251.8 L476.4,251.6 L476.8,251.5 L477.3,251.4 L477.7,251.5 L478.2,251.6 L478.6,251.8 L479.0,252.0 L479.2,252.3 L479.2,252.6 L479.0,252.9 L478.8,253.1 L478.6,253.2 L478.5,253.4 L478.4,253.8 L478.5,254.3 L478.6,255.2 L478.8,256.2 L478.9,257.5 L479.1,258.8 L479.3,260.2 L479.5,261.6 L479.7,263.1 L479.9,264.4 L480.1,265.7 L480.2,266.9 L480.3,268.1 L480.4,269.4 L480.5,270.7 L480.6,272.0 L480.7,273.4 L480.9,274.7 L481.1,276.1 L481.3,277.4 L481.5,278.6 L481.9,279.7 L482.2,280.7 L482.6,281.7 L483.0,282.7 L483.4,283.6 L483.9,284.4 L484.4,285.2 L484.8,285.9 L485.3,286.6 L485.8,287.2 L486.3,287.7 L486.7,288.1 L487.2,288.6 L487.8,288.9 L488.6,289.2 L489.4,289.4 L490.1,289.3 L490.8,289.0 L491.4,288.6 L492.0,288.1 L492.5,287.5 L493.1,286.7 L493.7,285.8 L494.3,284.9 L494.9,283.8 L495.5,282.8 L496.1,281.9 L496.6,281.0 L497.0,280.3 L497.3,279.8 L495.2,278.6 L494.9,279.1 L494.4,279.8 L493.9,280.6 L493.3,281.5 L492.7,282.5 L492.1,283.4 L491.5,284.3 L490.9,285.0 L490.4,285.6 L490.0,285.9 L489.8,286.0 L489.6,286.0 L489.7,285.9 L489.8,285.8 L490.0,285.7 L490.2,285.7 L490.3,285.6 L490.3,285.4 L490.2,285.2 L490.2,284.8 L490.2,284.4 L490.2,283.9 L490.2,283.3 L490.3,282.7 L490.3,281.9 L490.4,281.1 L490.4,280.2 L490.4,279.3 L490.5,278.4 L490.5,277.4 L490.5,276.4 L490.5,275.4 L490.5,274.2 L490.5,272.9 L490.5,271.6 L490.5,270.2 L490.4,268.7 L490.3,267.2 L490.2,265.7 L489.9,264.3 L489.7,262.9 L489.4,261.4 L489.1,259.9 L488.7,258.4 L488.3,256.8 L487.9,255.4 L487.4,253.9 L486.8,252.6 L486.3,251.4 L485.6,250.2 L484.8,249.2 L483.8,248.4 L482.8,247.8 L481.7,247.5 L480.6,247.4 L479.7,247.5 L479.0,247.8 L478.4,248.0 L477.8,248.3 L477.3,248.5 L476.7,248.7 L476.1,248.9 L475.4,249.2 L474.8,249.5 L474.2,249.8 L473.5,250.1 L472.9,250.5 L472.2,251.0 L471.6,251.5 L471.0,252.0 L470.4,252.7 L469.8,253.5 L469.2,254.4 L468.6,255.3 L468.0,256.2 L467.5,257.1 L467.0,257.9 L466.5,258.6 L466.2,259.2 L465.9,259.7Z"/><circle cx="467" cy="260.4" r="1.30" fill="#14e6ea"/><circle cx="496.25" cy="279.2" r="1.20" fill="#14e6ea"/><path fill="#14e6ea" d="M505.5,245 C499,239 495,234 495.2,230 C495.5,225 502,224 505.5,230 C509,224 515.5,225 516,230 C516.3,234 512,239 505.5,245 Z"/><path fill="#14e6ea" d="M501.1,254.8 L501.1,255.1 L501.1,255.6 L501.1,256.1 L501.0,256.6 L501.0,257.2 L501.0,257.9 L501.0,258.5 L501.0,259.3 L501.0,260.0 L501.1,260.9 L501.2,261.8 L501.3,262.9 L501.5,264.0 L501.7,265.3 L501.9,266.6 L502.1,267.9 L502.3,269.2 L502.6,270.5 L502.8,271.7 L503.1,272.7 L503.3,273.6 L503.5,274.5 L503.8,275.3 L504.0,276.2 L504.3,277.0 L504.6,277.8 L505.0,278.7 L505.3,279.5 L505.8,280.3 L506.2,281.1 L506.7,281.8 L507.1,282.5 L507.7,283.2 L508.2,283.9 L508.8,284.6 L509.5,285.3 L510.2,285.8 L511.1,286.3 L512.1,286.6 L513.2,286.5 L514.1,286.0 L514.9,285.5 L515.5,284.8 L516.2,284.0 L516.8,283.2 L517.5,282.3 L518.1,281.4 L518.8,280.5 L519.4,279.6 L520.0,278.8 L520.7,277.9 L521.4,276.9 L522.1,275.8 L522.9,274.7 L523.6,273.6 L524.3,272.6 L525.0,271.6 L525.5,270.7 L526.0,270.0 L526.4,269.4 L524.4,268.1 L524.0,268.6 L523.5,269.4 L522.9,270.2 L522.3,271.2 L521.6,272.2 L520.8,273.3 L520.1,274.4 L519.3,275.4 L518.6,276.4 L518.0,277.2 L517.3,278.1 L516.7,279.0 L516.0,279.9 L515.4,280.8 L514.8,281.6 L514.2,282.3 L513.6,282.9 L513.1,283.3 L512.7,283.5 L512.6,283.5 L512.7,283.4 L512.8,283.3 L512.8,283.1 L512.6,282.8 L512.5,282.3 L512.3,281.7 L512.2,281.0 L512.0,280.3 L511.9,279.6 L511.8,278.9 L511.8,278.3 L511.8,277.8 L511.8,277.2 L511.9,276.6 L511.9,275.9 L512.0,275.1 L512.0,274.2 L512.0,273.3 L512.0,272.3 L511.9,271.3 L511.8,270.2 L511.7,269.0 L511.5,267.8 L511.3,266.5 L511.1,265.1 L510.9,263.8 L510.7,262.5 L510.4,261.3 L510.2,260.2 L509.9,259.1 L509.6,258.2 L509.3,257.4 L509.0,256.6 L508.6,255.9 L508.2,255.3 L507.9,254.7 L507.6,254.2 L507.3,253.8 L507.1,253.5 L506.9,253.2Z"/><circle cx="504" cy="254" r="3.00" fill="#14e6ea"/><circle cx="525.4" cy="268.75" r="1.20" fill="#14e6ea"/><path fill="#14e6ea" d="M525.2,255.0 L525.2,255.4 L525.3,255.9 L525.3,256.4 L525.3,257.0 L525.3,257.5 L525.3,258.0 L525.2,258.6 L525.2,259.2 L525.1,259.9 L525.1,260.6 L525.2,261.6 L525.2,262.8 L525.3,264.2 L525.3,265.7 L525.4,267.3 L525.5,268.9 L525.6,270.6 L525.7,272.2 L525.9,273.8 L526.0,275.3 L526.2,276.8 L526.4,278.3 L526.7,279.8 L526.9,281.4 L527.2,282.8 L527.4,284.2 L527.7,285.5 L527.9,286.6 L528.1,287.6 L528.2,288.3 L535.2,287.7 L535.2,286.9 L535.2,285.9 L535.2,284.7 L535.1,283.5 L535.1,282.1 L535.1,280.6 L535.1,279.1 L535.1,277.6 L535.0,276.1 L535.0,274.7 L534.9,273.3 L534.9,271.8 L534.9,270.2 L534.8,268.5 L534.8,266.9 L534.7,265.2 L534.6,263.6 L534.5,262.1 L534.3,260.7 L534.1,259.4 L533.7,258.1 L533.3,257.1 L532.8,256.1 L532.2,255.3 L531.7,254.6 L531.2,254.1 L530.7,253.7 L530.3,253.4 L530.0,253.2 L529.8,253.0Z"/><circle cx="527.5" cy="254" r="2.50" fill="#14e6ea"/><circle cx="531.7" cy="288" r="3.50" fill="#14e6ea"/><path fill="#14e6ea" d="M534.8,263.2 L535.2,262.7 L535.7,262.0 L536.2,261.2 L536.8,260.3 L537.5,259.3 L538.2,258.3 L538.9,257.4 L539.6,256.5 L540.3,255.7 L541.0,255.0 L541.7,254.4 L542.4,253.7 L543.2,253.1 L544.1,252.4 L544.9,251.8 L545.8,251.3 L546.6,250.9 L547.3,250.6 L548.0,250.5 L548.6,250.5 L549.0,250.7 L549.3,251.0 L549.5,251.3 L549.4,251.7 L549.1,252.0 L548.7,252.3 L548.4,252.5 L548.1,252.7 L547.8,253.0 L547.7,253.4 L547.6,253.8 L547.6,254.5 L547.5,255.4 L547.5,256.5 L547.5,257.7 L547.4,259.0 L547.4,260.4 L547.3,261.9 L547.3,263.4 L547.3,265.0 L547.2,266.5 L547.1,268.1 L547.1,269.8 L547.0,271.5 L546.9,273.3 L546.8,275.1 L546.7,276.9 L546.6,278.7 L546.6,280.3 L546.5,281.9 L546.4,283.4 L546.4,284.9 L546.3,286.3 L546.3,287.7 L546.2,289.1 L546.2,290.3 L546.1,291.5 L546.1,292.5 L546.0,293.3 L546.0,294.0 L559.0,294.0 L559.0,293.3 L558.9,292.4 L558.9,291.4 L558.8,290.3 L558.7,289.0 L558.7,287.7 L558.6,286.4 L558.6,284.9 L558.5,283.5 L558.5,282.1 L558.5,280.6 L558.5,279.1 L558.6,277.4 L558.6,275.6 L558.7,273.8 L558.7,272.0 L558.8,270.1 L558.8,268.4 L558.8,266.6 L558.7,265.0 L558.7,263.5 L558.7,262.0 L558.7,260.5 L558.7,259.0 L558.6,257.6 L558.5,256.1 L558.4,254.7 L558.2,253.3 L557.8,251.9 L557.3,250.6 L556.7,249.5 L555.9,248.6 L554.9,247.7 L553.8,247.1 L552.7,246.7 L551.5,246.6 L550.5,246.7 L549.6,246.9 L548.8,247.2 L548.0,247.5 L547.2,247.9 L546.4,248.3 L545.5,248.7 L544.6,249.2 L543.6,249.7 L542.7,250.3 L541.7,250.9 L540.8,251.6 L539.9,252.3 L539.0,253.0 L538.2,253.8 L537.5,254.7 L536.7,255.7 L535.9,256.8 L535.2,257.8 L534.6,258.8 L534.0,259.7 L533.5,260.6 L533.0,261.2 L532.7,261.8Z"/><circle cx="533.75" cy="262.5" r="1.30" fill="#14e6ea"/><circle cx="552.5" cy="294" r="6.50" fill="#14e6ea"/><path fill="#14e6ea" d="M561.9,263.2 L562.2,262.6 L562.6,261.9 L563.1,261.1 L563.6,260.2 L564.1,259.3 L564.7,258.3 L565.2,257.3 L565.9,256.4 L566.5,255.6 L567.1,254.9 L567.7,254.2 L568.4,253.5 L569.1,252.7 L569.9,252.0 L570.6,251.3 L571.4,250.7 L572.1,250.3 L572.8,250.0 L573.3,249.9 L573.7,250.0 L574.0,250.2 L574.2,250.6 L574.2,251.0 L574.0,251.4 L573.7,251.8 L573.3,252.1 L572.9,252.4 L572.6,252.6 L572.3,252.9 L572.2,253.3 L572.1,254.0 L572.0,255.0 L572.0,256.3 L571.9,257.7 L571.8,259.3 L571.8,261.0 L571.7,262.6 L571.6,264.3 L571.4,265.9 L571.3,267.3 L571.1,268.5 L570.9,269.8 L570.6,271.1 L570.3,272.4 L570.0,273.7 L569.7,275.1 L569.4,276.5 L569.1,277.9 L568.8,279.4 L568.6,280.8 L568.5,282.1 L568.4,283.4 L568.4,284.7 L568.4,285.9 L568.4,287.1 L568.4,288.2 L568.5,289.1 L568.5,290.0 L568.5,290.7 L568.6,291.3 L578.4,292.7 L578.6,292.1 L578.9,291.4 L579.1,290.6 L579.4,289.7 L579.7,288.7 L580.1,287.6 L580.4,286.5 L580.8,285.4 L581.1,284.3 L581.4,283.2 L581.7,282.2 L582.0,281.0 L582.4,279.8 L582.8,278.4 L583.2,277.0 L583.5,275.5 L583.9,273.9 L584.2,272.2 L584.5,270.5 L584.7,268.7 L584.9,267.0 L585.0,265.2 L585.1,263.3 L585.1,261.4 L585.1,259.5 L585.1,257.6 L584.9,255.7 L584.7,253.9 L584.4,252.3 L583.8,250.7 L583.1,249.2 L582.2,247.9 L581.1,246.8 L579.9,246.0 L578.5,245.4 L577.2,245.2 L575.9,245.2 L574.8,245.4 L573.8,245.7 L572.9,246.0 L572.0,246.5 L571.2,247.1 L570.4,247.7 L569.5,248.4 L568.7,249.1 L567.9,249.9 L567.1,250.7 L566.3,251.5 L565.6,252.3 L564.9,253.1 L564.3,254.0 L563.6,254.9 L563.0,255.9 L562.4,257.0 L561.8,258.0 L561.3,259.0 L560.8,259.9 L560.3,260.7 L560.0,261.3 L559.7,261.8Z"/><circle cx="560.8" cy="262.5" r="1.30" fill="#14e6ea"/><circle cx="573.5" cy="292" r="5.00" fill="#14e6ea"/><path fill="#14e6ea" d="M579.0,293.1 L579.5,292.6 L580.1,292.0 L580.8,291.3 L581.6,290.5 L582.5,289.6 L583.4,288.8 L584.2,288.0 L585.1,287.2 L585.8,286.6 L586.5,286.1 L587.1,285.7 L587.7,285.4 L588.2,285.2 L588.8,285.0 L589.3,284.8 L589.8,284.7 L590.4,284.6 L591.0,284.5 L591.6,284.3 L592.3,284.2 L592.9,284.0 L593.6,283.9 L594.3,283.7 L595.0,283.6 L595.7,283.5 L596.4,283.4 L597.0,283.3 L597.6,283.2 L598.1,283.2 L598.5,283.1 L598.1,280.9 L597.8,281.0 L597.3,281.0 L596.7,281.1 L596.1,281.2 L595.4,281.2 L594.6,281.3 L593.9,281.4 L593.1,281.6 L592.4,281.7 L591.7,281.8 L591.1,282.0 L590.5,282.1 L589.9,282.2 L589.3,282.3 L588.7,282.4 L588.0,282.6 L587.3,282.8 L586.6,283.1 L585.9,283.5 L585.1,283.9 L584.3,284.5 L583.4,285.2 L582.4,285.9 L581.5,286.8 L580.5,287.6 L579.6,288.4 L578.8,289.2 L578.1,289.9 L577.4,290.5 L577.0,290.9Z"/><circle cx="578" cy="292" r="1.50" fill="#14e6ea"/><circle cx="598.3" cy="282" r="1.10" fill="#14e6ea"/><path fill="#14e6ea" d="M617.0,243.3 L616.6,243.4 L616.0,243.6 L615.3,243.7 L614.5,244.0 L613.6,244.3 L612.6,244.7 L611.6,245.2 L610.5,245.9 L609.5,246.8 L608.6,247.8 L607.8,248.9 L607.0,250.0 L606.3,251.2 L605.6,252.4 L604.9,253.7 L604.2,255.1 L603.7,256.6 L603.1,258.0 L602.7,259.5 L602.3,261.0 L602.1,262.6 L601.9,264.1 L601.7,265.7 L601.7,267.3 L601.7,268.8 L601.8,270.3 L601.9,271.8 L602.1,273.2 L602.3,274.5 L602.5,275.7 L602.9,276.9 L603.3,278.0 L603.7,279.1 L604.2,280.1 L604.8,281.1 L605.4,282.0 L606.1,282.9 L606.7,283.7 L607.5,284.4 L608.2,285.1 L609.0,285.7 L609.9,286.2 L610.8,286.5 L611.6,286.7 L612.4,286.8 L613.2,286.8 L613.9,286.7 L614.6,286.7 L615.2,286.6 L615.9,286.5 L616.6,286.5 L617.4,286.4 L618.2,286.4 L619.0,286.4 L619.9,286.3 L620.8,286.3 L621.8,286.1 L622.7,285.9 L623.7,285.6 L624.6,285.2 L625.5,284.6 L626.5,283.9 L627.5,283.1 L628.4,282.2 L629.4,281.3 L630.2,280.5 L631.1,279.6 L631.8,278.9 L632.4,278.3 L632.8,277.9 L631.2,276.1 L630.7,276.6 L630.1,277.2 L629.3,277.9 L628.5,278.7 L627.6,279.5 L626.7,280.4 L625.8,281.2 L625.0,281.9 L624.1,282.4 L623.4,282.8 L622.7,283.1 L622.0,283.4 L621.2,283.6 L620.5,283.7 L619.7,283.8 L618.9,283.8 L618.2,283.8 L617.5,283.7 L616.8,283.6 L616.1,283.5 L615.5,283.3 L615.0,283.1 L614.5,282.9 L614.2,282.6 L613.9,282.3 L613.7,282.0 L613.7,281.7 L613.7,281.5 L613.8,281.2 L613.8,280.9 L613.8,280.5 L613.9,280.0 L613.9,279.5 L614.0,278.9 L614.1,278.3 L614.2,277.6 L614.3,276.8 L614.3,276.0 L614.4,275.2 L614.5,274.3 L614.5,273.3 L614.5,272.2 L614.5,271.1 L614.5,269.9 L614.5,268.7 L614.5,267.4 L614.5,266.2 L614.6,265.1 L614.6,264.0 L614.7,263.0 L614.8,262.0 L614.9,260.8 L615.1,259.7 L615.2,258.5 L615.4,257.3 L615.6,256.2 L615.9,255.0 L616.1,254.0 L616.3,253.0 L616.4,252.2 L616.5,251.5 L616.6,250.9 L616.8,250.1 L617.1,249.4 L617.4,248.6 L617.7,247.9 L618.1,247.2 L618.4,246.6 L618.8,246.0 L619.0,245.5Z"/><circle cx="618" cy="244.4" r="1.50" fill="#14e6ea"/><circle cx="632" cy="277" r="1.20" fill="#14e6ea"/><path fill="#14e6ea" d="M618.1,245.9 L618.5,245.9 L619.1,245.8 L619.8,245.7 L620.5,245.7 L621.2,245.6 L622.0,245.6 L622.7,245.6 L623.4,245.6 L623.9,245.7 L624.5,245.9 L625.0,246.2 L625.7,246.5 L626.4,246.9 L627.0,247.3 L627.6,247.7 L628.2,248.2 L628.7,248.7 L629.1,249.3 L629.4,249.8 L629.5,250.4 L629.7,251.1 L629.7,251.9 L629.7,252.9 L629.6,254.0 L629.4,255.1 L629.2,256.3 L628.9,257.4 L628.5,258.5 L628.1,259.4 L627.7,260.3 L627.2,261.0 L626.6,261.8 L626.0,262.5 L625.2,263.2 L624.4,263.9 L623.6,264.5 L622.7,265.1 L621.9,265.7 L621.0,266.2 L620.3,266.7 L619.5,267.1 L618.7,267.5 L617.9,267.8 L617.0,268.1 L616.2,268.3 L615.3,268.6 L614.5,268.8 L613.8,268.9 L613.2,269.1 L612.7,269.2 L613.3,271.8 L613.8,271.6 L614.4,271.5 L615.1,271.4 L615.9,271.2 L616.8,271.0 L617.8,270.8 L618.8,270.5 L619.8,270.2 L620.8,269.8 L621.7,269.3 L622.6,268.8 L623.5,268.2 L624.4,267.6 L625.4,266.9 L626.3,266.2 L627.2,265.4 L628.1,264.6 L628.9,263.7 L629.7,262.7 L630.3,261.7 L630.8,260.7 L631.3,259.5 L631.7,258.3 L632.1,257.0 L632.4,255.7 L632.6,254.4 L632.7,253.1 L632.7,251.9 L632.6,250.7 L632.5,249.6 L632.1,248.6 L631.6,247.7 L631.0,246.8 L630.3,246.1 L629.5,245.4 L628.7,244.8 L627.9,244.3 L627.1,243.8 L626.3,243.5 L625.5,243.1 L624.7,242.8 L623.7,242.6 L622.8,242.6 L621.9,242.6 L621.0,242.6 L620.2,242.7 L619.5,242.8 L618.8,242.8 L618.3,242.9 L617.9,242.9Z"/><circle cx="618" cy="244.4" r="1.50" fill="#14e6ea"/><circle cx="613" cy="270.5" r="1.30" fill="#14e6ea"/><path fill="#14e6ea" d="M657.9,232.0 L657.6,232.3 L657.2,232.7 L656.8,233.1 L656.3,233.5 L655.8,234.0 L655.4,234.4 L655.0,234.6 L654.8,234.8 L654.8,234.8 L655.2,234.9 L655.2,234.9 L655.0,234.6 L654.8,234.0 L654.6,233.3 L654.3,232.5 L654.1,231.7 L654.0,230.9 L653.9,230.1 L653.8,229.5 L653.8,229.1 L653.8,228.8 L653.9,228.5 L654.0,228.2 L654.1,228.0 L654.3,227.8 L654.5,227.6 L654.7,227.4 L654.9,227.3 L655.1,227.3 L655.1,227.3 L655.2,227.3 L655.3,227.4 L655.6,227.6 L655.9,227.9 L656.3,228.2 L656.7,228.6 L657.0,228.9 L657.4,229.2 L657.7,229.5 L658.0,229.7 L660.0,226.3 L659.8,226.2 L659.5,226.1 L659.1,225.9 L658.6,225.6 L658.0,225.4 L657.4,225.2 L656.8,225.0 L656.2,224.8 L655.6,224.7 L654.9,224.7 L654.3,224.9 L653.8,225.1 L653.3,225.4 L652.9,225.7 L652.4,226.1 L652.1,226.5 L651.7,227.1 L651.5,227.6 L651.3,228.3 L651.2,228.9 L651.2,229.7 L651.3,230.5 L651.4,231.3 L651.6,232.3 L651.8,233.2 L652.1,234.1 L652.4,235.0 L652.7,235.8 L653.1,236.5 L653.8,237.1 L654.9,237.4 L655.7,237.2 L656.4,236.8 L657.0,236.4 L657.6,235.9 L658.1,235.4 L658.6,234.9 L659.0,234.5 L659.3,234.2 L659.5,234.0Z"/><circle cx="658.7" cy="233" r="1.30" fill="#14e6ea"/><circle cx="659" cy="228" r="2.00" fill="#14e6ea"/><path fill="#14e6ea" d="M657.2,229.7 L657.5,230.3 L658.0,231.0 L658.5,231.8 L659.1,232.6 L659.7,233.5 L660.2,234.5 L660.8,235.4 L661.3,236.4 L661.7,237.4 L662.2,238.3 L662.6,239.5 L663.1,240.7 L663.7,242.1 L664.2,243.5 L664.7,244.9 L665.2,246.3 L665.6,247.7 L665.9,249.0 L666.2,250.1 L666.4,251.1 L666.5,252.1 L666.6,253.0 L666.6,253.9 L666.6,254.8 L666.6,255.6 L666.5,256.5 L666.4,257.4 L666.2,258.3 L666.1,259.2 L665.8,260.1 L665.5,261.0 L665.2,262.0 L664.8,263.0 L664.2,264.0 L663.7,265.1 L663.1,266.1 L662.4,267.2 L661.8,268.2 L661.2,269.1 L660.6,270.0 L660.1,270.8 L659.6,271.5 L659.1,272.3 L658.5,273.0 L657.9,273.7 L657.3,274.4 L656.7,275.1 L656.0,275.7 L655.4,276.3 L654.8,276.8 L654.3,277.3 L653.7,277.6 L653.2,278.0 L652.6,278.3 L652.0,278.6 L651.4,278.8 L650.9,279.0 L650.4,279.2 L649.9,279.4 L649.6,279.6 L650.4,282.4 L650.7,282.4 L651.2,282.4 L651.7,282.3 L652.3,282.3 L653.0,282.2 L653.7,282.1 L654.6,281.9 L655.4,281.7 L656.3,281.5 L657.2,281.2 L658.1,280.9 L659.0,280.6 L659.9,280.2 L660.9,279.9 L662.0,279.4 L663.0,278.9 L664.1,278.3 L665.2,277.7 L666.3,276.9 L667.4,276.0 L668.3,275.1 L669.3,274.1 L670.3,273.0 L671.2,271.9 L672.2,270.7 L673.1,269.4 L674.0,268.1 L674.8,266.7 L675.5,265.3 L676.2,263.9 L676.7,262.5 L677.1,261.1 L677.5,259.7 L677.8,258.2 L678.1,256.7 L678.2,255.2 L678.2,253.7 L678.1,252.1 L677.9,250.5 L677.6,248.9 L677.2,247.2 L676.6,245.5 L675.9,243.8 L675.1,242.2 L674.3,240.6 L673.4,239.0 L672.5,237.6 L671.6,236.2 L670.7,234.9 L669.8,233.7 L668.9,232.5 L667.8,231.4 L666.7,230.4 L665.6,229.5 L664.6,228.7 L663.6,228.1 L662.7,227.5 L661.9,227.0 L661.3,226.6 L660.8,226.3Z"/><circle cx="659" cy="228" r="2.50" fill="#14e6ea"/><circle cx="650" cy="281" r="1.50" fill="#14e6ea"/><path fill="#14e6ea" d="M650.0,279.7 L649.6,279.7 L649.0,279.8 L648.4,279.8 L647.7,279.9 L647.0,279.9 L646.4,279.9 L645.7,279.9 L645.2,279.9 L644.9,279.8 L644.7,279.7 L644.6,279.6 L644.4,279.4 L644.3,279.1 L644.1,278.7 L644.0,278.3 L643.9,277.9 L643.8,277.4 L643.8,277.0 L643.8,276.5 L643.8,276.1 L643.9,275.8 L644.0,275.3 L644.1,274.9 L644.3,274.4 L644.5,274.0 L644.7,273.5 L645.0,273.2 L645.2,272.9 L645.4,272.8 L645.5,272.7 L645.7,272.7 L645.9,272.6 L646.2,272.6 L646.5,272.7 L646.9,272.8 L647.3,272.9 L647.8,273.1 L648.2,273.4 L648.7,273.7 L649.2,274.0 L649.6,274.4 L650.1,274.9 L650.6,275.6 L651.2,276.3 L651.8,277.1 L652.4,277.9 L653.0,278.8 L653.7,279.6 L654.4,280.3 L655.2,281.0 L656.0,281.6 L656.7,282.1 L657.5,282.6 L658.4,283.1 L659.2,283.5 L660.1,283.9 L661.0,284.3 L661.8,284.7 L662.7,285.0 L663.6,285.2 L664.5,285.5 L665.5,285.7 L666.5,286.0 L667.4,286.2 L668.5,286.3 L669.5,286.4 L670.5,286.5 L671.5,286.5 L672.5,286.4 L673.5,286.3 L674.6,286.0 L675.7,285.6 L676.7,285.1 L677.7,284.6 L678.7,284.0 L679.6,283.5 L680.5,283.0 L681.2,282.5 L681.8,282.1 L682.3,281.9 L681.1,279.7 L680.6,280.0 L679.9,280.4 L679.2,280.9 L678.4,281.4 L677.5,281.9 L676.5,282.4 L675.6,282.8 L674.7,283.2 L673.8,283.5 L673.1,283.7 L672.3,283.8 L671.4,283.9 L670.6,283.9 L669.7,283.8 L668.8,283.7 L667.9,283.6 L667.0,283.4 L666.1,283.2 L665.2,283.0 L664.4,282.8 L663.5,282.5 L662.7,282.2 L661.9,281.9 L661.1,281.6 L660.4,281.2 L659.6,280.8 L658.9,280.4 L658.2,280.0 L657.5,279.5 L656.8,279.0 L656.2,278.5 L655.6,277.8 L655.0,277.1 L654.4,276.4 L653.9,275.6 L653.3,274.8 L652.7,274.0 L652.1,273.3 L651.5,272.6 L650.8,272.0 L650.2,271.5 L649.6,271.1 L648.9,270.8 L648.3,270.5 L647.7,270.3 L647.0,270.1 L646.4,270.0 L645.8,270.0 L645.1,270.1 L644.5,270.3 L643.9,270.6 L643.4,271.1 L642.9,271.6 L642.5,272.2 L642.2,272.8 L641.9,273.4 L641.7,274.0 L641.5,274.6 L641.3,275.3 L641.2,275.9 L641.2,276.5 L641.2,277.1 L641.2,277.7 L641.3,278.4 L641.5,279.0 L641.7,279.6 L641.9,280.3 L642.3,280.9 L642.7,281.4 L643.3,281.9 L644.0,282.2 L644.8,282.4 L645.6,282.5 L646.4,282.5 L647.2,282.5 L647.9,282.5 L648.6,282.4 L649.2,282.3 L649.7,282.3 L650.0,282.3Z"/><circle cx="650" cy="281" r="1.30" fill="#14e6ea"/><circle cx="681.7" cy="280.8" r="1.20" fill="#14e6ea"/><path fill="#14e6ea" d="M630.7,278.6 L630.8,278.4 L631.1,278.1 L631.3,277.8 L631.6,277.4 L631.9,277.0 L632.2,276.7 L632.5,276.3 L632.7,276.0 L633.0,275.7 L633.1,275.5 L631.9,274.5 L631.7,274.7 L631.5,274.9 L631.2,275.2 L630.9,275.6 L630.6,276.0 L630.3,276.3 L630.0,276.7 L629.7,277.0 L629.5,277.2 L629.3,277.4Z"/><circle cx="630" cy="278" r="0.90" fill="#14e6ea"/><circle cx="632.5" cy="275" r="0.80" fill="#14e6ea"/><path fill="#14e6ea" d="M715.0,238.2 L714.6,237.9 L714.1,237.5 L713.5,237.1 L712.8,236.6 L712.1,236.0 L711.4,235.5 L710.6,234.9 L709.9,234.4 L709.2,234.0 L708.5,233.6 L708.0,233.3 L707.6,233.0 L707.2,232.6 L706.6,232.3 L705.9,232.0 L705.0,231.9 L704.1,231.9 L703.2,232.1 L702.2,232.4 L701.3,232.8 L700.4,233.2 L699.4,233.8 L698.3,234.5 L697.1,235.2 L695.9,236.1 L694.7,237.1 L693.5,238.2 L692.3,239.5 L691.2,240.8 L690.2,242.2 L689.3,243.7 L688.5,245.1 L687.7,246.7 L687.0,248.3 L686.4,250.0 L685.8,251.8 L685.3,253.6 L684.9,255.5 L684.5,257.4 L684.3,259.4 L684.2,261.4 L684.1,263.5 L684.2,265.6 L684.3,267.7 L684.6,269.8 L684.9,271.9 L685.2,273.9 L685.7,275.9 L686.1,277.7 L686.7,279.4 L687.3,281.1 L688.1,282.7 L688.9,284.1 L689.8,285.5 L690.7,286.7 L691.7,287.8 L692.6,288.8 L693.5,289.7 L694.4,290.5 L695.3,291.2 L696.3,292.0 L697.4,292.6 L698.5,293.1 L699.5,293.4 L700.4,293.6 L701.2,293.7 L702.0,293.8 L702.6,293.8 L703.0,293.8 L703.3,293.8 L704.7,291.2 L704.3,290.8 L703.8,290.5 L703.3,290.1 L702.8,289.7 L702.3,289.3 L701.8,288.8 L701.4,288.3 L701.1,287.8 L700.9,287.3 L700.7,286.8 L700.4,286.0 L700.1,285.1 L699.8,284.2 L699.5,283.2 L699.2,282.1 L699.0,281.1 L698.8,280.0 L698.6,278.9 L698.5,277.7 L698.3,276.6 L698.2,275.2 L698.0,273.7 L697.9,272.1 L697.8,270.4 L697.7,268.7 L697.6,266.9 L697.6,265.2 L697.6,263.5 L697.6,262.0 L697.7,260.6 L697.9,259.3 L698.1,258.0 L698.3,256.6 L698.6,255.3 L698.9,253.9 L699.3,252.6 L699.7,251.3 L700.1,250.1 L700.5,248.9 L700.8,247.8 L701.2,246.8 L701.6,245.8 L702.0,244.7 L702.6,243.6 L703.1,242.6 L703.7,241.5 L704.2,240.6 L704.8,239.7 L705.3,238.9 L705.7,238.2 L705.9,237.8 L706.0,237.4 L706.0,237.2 L705.9,237.0 L705.8,236.8 L705.9,236.6 L706.1,236.4 L706.5,236.4 L707.0,236.4 L707.5,236.4 L708.0,236.5 L708.6,236.7 L709.3,237.0 L710.1,237.4 L710.8,237.9 L711.6,238.4 L712.3,238.8 L712.9,239.2 L713.4,239.6 L713.8,239.8Z"/><circle cx="714.4" cy="239" r="1.00" fill="#14e6ea"/><circle cx="704" cy="292.5" r="1.50" fill="#14e6ea"/><path fill="#14e6ea" d="M697.9,272.1 L698.3,271.8 L698.7,271.4 L699.3,270.9 L699.8,270.4 L700.5,269.8 L701.1,269.3 L701.8,268.8 L702.4,268.4 L703.0,268.0 L703.5,267.8 L704.1,267.6 L704.7,267.5 L705.3,267.3 L705.9,267.3 L706.5,267.2 L707.2,267.2 L707.8,267.3 L708.3,267.4 L708.9,267.5 L709.4,267.8 L709.9,268.1 L710.6,268.5 L711.2,268.9 L711.8,269.5 L712.4,270.0 L713.0,270.7 L713.5,271.3 L714.0,272.0 L714.4,272.7 L714.7,273.5 L714.9,274.3 L715.1,275.2 L715.2,276.2 L715.3,277.3 L715.3,278.5 L715.3,279.6 L715.2,280.7 L715.0,281.8 L714.9,282.8 L714.7,283.6 L714.4,284.4 L714.1,285.1 L713.7,285.9 L713.3,286.5 L712.8,287.2 L712.3,287.8 L711.7,288.4 L711.2,288.9 L710.6,289.4 L710.0,289.8 L709.5,290.2 L708.8,290.4 L708.0,290.7 L707.2,290.9 L706.3,291.1 L705.5,291.2 L704.7,291.3 L703.9,291.4 L703.2,291.5 L702.7,291.6 L703.3,294.4 L703.7,294.3 L704.3,294.2 L705.0,294.1 L705.9,294.0 L706.8,293.8 L707.8,293.6 L708.8,293.4 L709.8,293.1 L710.7,292.7 L711.6,292.2 L712.3,291.6 L713.0,291.0 L713.7,290.4 L714.4,289.7 L715.0,288.9 L715.6,288.1 L716.1,287.2 L716.6,286.3 L717.0,285.4 L717.3,284.4 L717.6,283.3 L717.8,282.2 L718.0,281.0 L718.1,279.7 L718.1,278.5 L718.1,277.2 L718.0,276.0 L717.9,274.8 L717.6,273.6 L717.3,272.5 L716.9,271.5 L716.4,270.6 L715.8,269.7 L715.1,268.9 L714.4,268.1 L713.7,267.4 L712.9,266.7 L712.2,266.2 L711.4,265.7 L710.6,265.2 L709.8,264.9 L709.0,264.7 L708.1,264.5 L707.3,264.4 L706.5,264.4 L705.6,264.5 L704.8,264.6 L704.0,264.7 L703.3,264.9 L702.5,265.2 L701.7,265.5 L700.9,266.0 L700.1,266.5 L699.4,267.1 L698.7,267.7 L698.0,268.3 L697.4,268.8 L696.9,269.3 L696.4,269.6 L696.1,269.9Z"/><circle cx="697" cy="271" r="1.40" fill="#14e6ea"/><circle cx="703" cy="293" r="1.40" fill="#14e6ea"/><path fill="#ffffff" d="M700.4,242.8 L700.2,243.7 L699.8,244.8 L699.3,246.0 L698.8,247.5 L698.3,249.0 L697.8,250.7 L697.3,252.5 L696.8,254.3 L696.5,256.1 L696.3,257.9 L696.2,259.9 L696.2,262.0 L696.2,264.3 L696.4,266.6 L696.6,269.0 L696.8,271.3 L697.0,273.4 L697.2,275.3 L697.3,276.8 L697.4,278.0 L698.6,278.0 L698.5,276.7 L698.4,275.1 L698.3,273.3 L698.1,271.1 L697.9,268.9 L697.8,266.6 L697.7,264.2 L697.6,262.0 L697.6,259.9 L697.7,258.1 L698.0,256.3 L698.3,254.6 L698.7,252.8 L699.1,251.1 L699.6,249.5 L700.1,247.9 L700.5,246.4 L701.0,245.2 L701.3,244.1 L701.6,243.2Z"/><path fill="none" stroke="#22d2e6" stroke-width="2.4" stroke-linecap="round" stroke-linejoin="round" d="M497.5,92.7 C499,90.5 502,91 502.8,94 L503.2,119 M503.7,99 C505,92 508,87.4 511.6,87.4 C514,88 515.1,91 515.1,95 L515.5,112 M516,96 C518,90 521,87.4 524,87.6 C528,88.5 529.5,93 530,100 C531,108 532,114 536.2,114.7 C541,114 544.5,106 544.1,98 C544,92 541.5,90 539.7,91 C537,93 536.5,103 538.5,110 C540,114 544,115 548.5,114.7 C554,113 557,106 557.3,99 C557,94 556.5,88 560.8,84.8 C566,83 569.5,90 569.5,99 C569.5,106 566,110 562.5,109.8 C559,109.5 557,104 557.3,99 "/><path fill="none" stroke="#22d2e6" stroke-width="2.4" stroke-linecap="round" stroke-linejoin="round" d="M577,91 L586,104 M586,90 L578,108"/><path fill="none" stroke="#22d2e6" stroke-width="2.4" stroke-linecap="round" stroke-linejoin="round" d="M599,89 L600,107 M597.5,78 L597.7,79"/><path fill="none" stroke="#22d2e6" stroke-width="2.4" stroke-linecap="round" stroke-linejoin="round" d="M610,83 L610.5,107 M620,86 L611,97 L624,106"/><path fill="none" stroke="#22d2e6" stroke-width="2.4" stroke-linecap="round" stroke-linejoin="round" d="M533,132 L556,131 M526,145 L556,143 M535,126 L535,151 M544,125 L543,150"/><path fill="none" stroke="#22d2e6" stroke-width="2.4" stroke-linecap="round" stroke-linejoin="round" d="M564,130 L563,154 M565,142 L578,140 M578,126 L579,155"/><path fill="none" stroke="#22d2e6" stroke-width="2.4" stroke-linecap="round" stroke-linejoin="round" d="M590,129 C584,130 583,140 584,147 C585,153 591,154 594,148 C596,142 596,131 590,129 Z"/><path fill="none" stroke="#22d2e6" stroke-width="2.4" stroke-linecap="round" stroke-linejoin="round" d="M604,132 L605,153 M605,117 L605,118"/><path fill="none" stroke="#22d2e6" stroke-width="2.4" stroke-linecap="round" stroke-linejoin="round" d="M619,125 L618,153 M619,126 C630,128 634,140 629,149 C626,153 622,152 620,151"/><path fill="none" stroke="#22d2e6" stroke-width="2.4" stroke-linecap="round" stroke-linejoin="round" d="M633,155 L642,123 L648,156 M636,143 L648,142"/><path fill="none" stroke="#22d2e6" stroke-width="2.4" stroke-linecap="round" stroke-linejoin="round" d="M655,153 L656,127 C664,127 665,139 656,141"/></g><g stroke="#eec2c4" stroke-width="1"><line x1="211.5" y1="74" x2="211.5" y2="512"/><line x1="284.5" y1="74" x2="284.5" y2="512"/><line x1="357.5" y1="74" x2="357.5" y2="512"/><line x1="430.5" y1="74" x2="430.5" y2="512"/><line x1="503.5" y1="74" x2="503.5" y2="512"/><line x1="576.5" y1="74" x2="576.5" y2="512"/><line x1="649.5" y1="74" x2="649.5" y2="512"/><line x1="722.5" y1="74" x2="722.5" y2="512"/><line x1="152" y1="142.5" x2="735" y2="142.5"/><line x1="152" y1="215.5" x2="735" y2="215.5"/><line x1="152" y1="288.5" x2="735" y2="288.5"/><line x1="152" y1="361.5" x2="735" y2="361.5"/><line x1="152" y1="434.5" x2="735" y2="434.5"/><line x1="152" y1="507.5" x2="735" y2="507.5"/></g></g><g clip-path="url(#nv)"><rect x="842" y="97" width="107" height="78" fill="#fff"/><g transform="translate(813.3,81.8) scale(0.184)"><circle cx="435" cy="149" r="36.5" fill="#00e4f8"/><circle cx="419" cy="142.5" r="36" fill="#3ac4d4"/><circle cx="239.8" cy="445.6" r="37.2" fill="#00e4f8"/><circle cx="237.5" cy="443.5" r="37" fill="#3ac4d4"/><line x1="155" y1="108" x2="272" y2="108" stroke="#00dcf2" stroke-width="2.6" stroke-linecap="round"/><line x1="160" y1="120.5" x2="293.5" y2="120.5" stroke="#00dcf2" stroke-width="2.6" stroke-linecap="round"/><line x1="167" y1="100.5" x2="167" y2="215.5" stroke="#00dcf2" stroke-width="2.6" stroke-linecap="round"/><line x1="179.2" y1="88.5" x2="179.2" y2="199.5" stroke="#00dcf2" stroke-width="2.6" stroke-linecap="round"/><line x1="691.3" y1="328.5" x2="691.3" y2="468.5" stroke="#00dcf2" stroke-width="2.6" stroke-linecap="round"/><line x1="703" y1="344.5" x2="703" y2="495.5" stroke="#00dcf2" stroke-width="2.6" stroke-linecap="round"/><line x1="558.5" y1="439.7" x2="732.8" y2="439.7" stroke="#00dcf2" stroke-width="2.6" stroke-linecap="round"/><line x1="596" y1="458.8" x2="718" y2="458.8" stroke="#00dcf2" stroke-width="2.6" stroke-linecap="round"/><path fill="#14e6ea" d="M209.3,205.7 L208.4,205.7 L207.3,205.5 L205.9,205.4 L204.3,205.3 L202.6,205.2 L200.6,205.3 L198.6,205.6 L196.5,206.2 L194.3,207.2 L192.4,208.7 L190.7,210.3 L189.4,212.0 L188.3,213.7 L187.3,215.5 L186.5,217.3 L185.8,219.1 L185.2,220.9 L184.6,222.7 L184.0,224.4 L183.4,226.2 L182.7,228.2 L182.1,230.2 L181.4,232.4 L180.8,234.7 L180.2,237.0 L179.6,239.4 L179.1,241.8 L178.6,244.2 L178.3,246.6 L178.1,248.9 L177.9,251.3 L177.9,253.6 L178.1,255.9 L178.3,258.0 L178.5,260.0 L178.8,262.0 L179.1,263.8 L179.5,265.5 L179.8,267.1 L180.0,268.6 L180.2,270.0 L180.4,271.3 L180.6,272.7 L180.8,274.0 L181.0,275.4 L181.3,276.9 L181.6,278.4 L182.1,280.0 L182.6,281.5 L183.3,283.1 L184.1,284.7 L185.1,286.2 L186.1,287.7 L187.2,289.2 L188.3,290.7 L189.5,292.0 L190.7,293.4 L191.9,294.6 L193.0,295.8 L194.1,296.9 L195.1,297.9 L196.1,298.8 L197.1,299.7 L198.1,300.4 L199.1,301.1 L200.1,301.8 L201.1,302.4 L202.1,303.0 L203.1,303.6 L204.2,304.2 L205.3,304.9 L206.4,305.5 L207.6,306.2 L208.8,306.9 L210.1,307.5 L211.4,308.2 L212.7,308.7 L214.1,309.2 L215.4,309.6 L216.8,309.9 L218.2,310.0 L219.6,310.1 L221.0,310.0 L222.4,309.9 L223.8,309.7 L225.1,309.5 L226.5,309.2 L227.8,308.9 L229.1,308.6 L230.3,308.3 L231.6,307.9 L232.8,307.5 L234.1,307.0 L235.3,306.5 L236.4,306.0 L237.6,305.4 L238.7,304.8 L239.7,304.3 L240.7,303.7 L241.7,303.1 L242.6,302.5 L243.6,301.8 L244.4,301.1 L245.3,300.3 L246.0,299.6 L246.8,298.9 L247.4,298.3 L248.0,297.7 L248.4,297.2 L248.8,296.9 L247.2,295.1 L246.8,295.5 L246.3,296.0 L245.7,296.5 L245.0,297.1 L244.3,297.8 L243.6,298.4 L242.8,299.1 L242.0,299.8 L241.2,300.4 L240.3,300.9 L239.4,301.4 L238.5,302.0 L237.4,302.5 L236.4,303.1 L235.3,303.6 L234.2,304.1 L233.1,304.6 L232.0,305.0 L230.8,305.4 L229.7,305.7 L228.5,306.1 L227.2,306.4 L225.9,306.6 L224.7,306.9 L223.4,307.1 L222.1,307.2 L220.8,307.3 L219.6,307.3 L218.4,307.3 L217.2,307.1 L216.1,306.9 L214.9,306.6 L213.7,306.2 L212.5,305.7 L211.3,305.1 L210.1,304.5 L208.9,303.9 L207.8,303.2 L206.8,302.5 L205.8,301.8 L205.0,301.0 L204.2,300.3 L203.5,299.5 L202.8,298.7 L202.2,297.9 L201.7,297.1 L201.2,296.2 L200.8,295.2 L200.3,294.2 L199.9,293.1 L199.5,291.9 L199.2,290.5 L198.9,289.0 L198.6,287.5 L198.4,286.0 L198.2,284.4 L198.0,282.9 L197.9,281.4 L197.8,280.1 L197.7,278.9 L197.7,277.8 L197.7,276.9 L197.7,276.0 L197.7,275.0 L197.8,274.1 L197.8,273.0 L197.8,271.8 L197.9,270.5 L197.9,269.0 L198.0,267.4 L198.0,265.7 L198.1,264.0 L198.1,262.3 L198.2,260.6 L198.2,259.0 L198.3,257.3 L198.4,255.7 L198.6,254.1 L198.8,252.6 L198.9,251.1 L199.2,249.4 L199.5,247.6 L199.8,245.7 L200.1,243.6 L200.5,241.6 L200.9,239.5 L201.4,237.5 L201.8,235.5 L202.2,233.6 L202.6,231.8 L203.0,230.0 L203.5,228.3 L203.9,226.7 L204.3,225.3 L204.7,223.9 L205.0,222.8 L205.3,221.7 L205.5,220.8 L205.6,220.0 L205.6,219.3 L205.6,218.6 L205.6,217.7 L206.0,216.6 L206.5,215.3 L207.2,213.9 L208.0,212.5 L208.8,211.3 L209.5,210.1 L210.2,209.1 L210.7,208.3Z"/><circle cx="210" cy="207" r="1.50" fill="#14e6ea"/><circle cx="248" cy="296" r="1.20" fill="#14e6ea"/><path fill="#14e6ea" d="M209.0,208.4 L209.9,208.4 L211.1,208.4 L212.4,208.3 L213.8,208.2 L215.4,208.2 L217.0,208.2 L218.7,208.2 L220.4,208.3 L222.1,208.5 L223.7,208.9 L225.3,209.3 L227.1,209.8 L228.9,210.3 L230.8,211.0 L232.6,211.6 L234.5,212.4 L236.3,213.2 L238.0,214.1 L239.6,215.1 L241.2,216.1 L242.7,217.3 L244.1,218.5 L245.5,219.7 L246.9,221.1 L248.2,222.5 L249.4,224.0 L250.6,225.6 L251.7,227.2 L252.8,228.9 L253.8,230.7 L254.7,232.5 L255.6,234.5 L256.4,236.6 L257.2,238.8 L257.9,241.1 L258.6,243.4 L259.1,245.6 L259.6,247.9 L259.9,250.0 L260.1,252.1 L260.2,254.1 L260.1,256.2 L259.9,258.3 L259.7,260.4 L259.3,262.4 L258.8,264.4 L258.3,266.4 L257.8,268.2 L257.3,269.9 L256.7,271.5 L256.1,272.9 L255.4,274.2 L254.7,275.5 L253.9,276.6 L253.1,277.7 L252.2,278.7 L251.4,279.6 L250.5,280.5 L249.7,281.3 L249.0,282.0 L248.4,282.6 L247.8,283.0 L247.2,283.4 L246.6,283.7 L246.0,283.9 L245.5,284.1 L244.9,284.3 L244.4,284.5 L243.9,284.6 L243.5,284.8 L244.5,287.2 L244.8,287.1 L245.2,287.0 L245.7,286.8 L246.3,286.7 L247.0,286.5 L247.7,286.2 L248.5,285.8 L249.3,285.3 L250.2,284.7 L251.0,284.0 L251.7,283.3 L252.5,282.4 L253.4,281.5 L254.3,280.5 L255.3,279.4 L256.2,278.3 L257.0,277.0 L257.9,275.6 L258.6,274.1 L259.3,272.5 L259.9,270.8 L260.5,269.0 L261.0,267.1 L261.6,265.1 L262.0,263.0 L262.4,260.8 L262.7,258.6 L262.9,256.4 L263.0,254.1 L262.9,251.9 L262.7,249.7 L262.3,247.4 L261.9,245.0 L261.3,242.7 L260.6,240.3 L259.9,237.9 L259.1,235.7 L258.2,233.4 L257.2,231.3 L256.2,229.3 L255.2,227.5 L254.1,225.7 L252.9,223.9 L251.6,222.3 L250.3,220.7 L248.9,219.2 L247.4,217.7 L245.9,216.4 L244.4,215.1 L242.8,213.9 L241.1,212.7 L239.3,211.7 L237.5,210.7 L235.6,209.8 L233.6,209.0 L231.7,208.3 L229.8,207.7 L227.9,207.1 L226.1,206.6 L224.3,206.1 L222.5,205.8 L220.7,205.6 L218.9,205.4 L217.1,205.4 L215.4,205.4 L213.7,205.4 L212.2,205.5 L210.9,205.6 L209.8,205.6 L209.0,205.6Z"/><circle cx="209" cy="207" r="1.40" fill="#14e6ea"/><circle cx="244" cy="286" r="1.30" fill="#14e6ea"/><path fill="#14e6ea" fill-rule="evenodd" d="M217.4,252.5 C208,252.5 203.3,262 203.3,272 C203.3,283 209,291.6 217.4,291.6 C226,291.6 231.5,283 231.5,272 C231.5,261 226,252.5 217.4,252.5 Z M225.5,260 C222,260 219,265 218.3,273 C217.6,281 219,288 222,288 C225.5,288 228,281 228.4,273 C228.8,265 228,260 225.5,260 Z"/><path fill="#14e6ea" d="M233.3,252.5 L240,252.5 C245,254 247.8,262 247.8,271 C247.8,279 246.5,284.5 243.5,286.5 C240,288 236,285 234.3,277 Z"/><path fill="#14e6ea" d="M243.0,287.8 L243.3,287.8 L243.7,287.8 L244.3,287.9 L244.9,287.9 L245.6,287.9 L246.4,287.9 L247.2,287.9 L248.0,287.7 L248.8,287.5 L249.6,287.1 L250.4,286.6 L251.1,286.0 L251.9,285.3 L252.6,284.6 L253.3,283.8 L254.0,283.1 L254.6,282.3 L255.1,281.7 L255.5,281.2 L255.9,280.8 L254.1,279.2 L253.7,279.6 L253.3,280.1 L252.7,280.7 L252.1,281.4 L251.5,282.1 L250.8,282.8 L250.1,283.5 L249.5,284.1 L248.9,284.6 L248.4,284.9 L247.9,285.0 L247.4,285.2 L246.9,285.3 L246.3,285.3 L245.6,285.3 L245.0,285.3 L244.4,285.3 L243.9,285.2 L243.4,285.2 L243.0,285.2Z"/><circle cx="243" cy="286.5" r="1.30" fill="#14e6ea"/><circle cx="255" cy="280" r="1.20" fill="#14e6ea"/><path fill="#14e6ea" d="M284.6,216.6 L284.5,216.9 L284.4,217.1 L284.2,217.4 L284.0,217.7 L283.8,218.1 L283.6,218.5 L283.4,219.1 L283.1,219.7 L282.9,220.5 L282.7,221.4 L282.4,222.4 L282.1,223.6 L281.9,224.8 L281.6,226.2 L281.3,227.7 L281.0,229.3 L280.7,231.0 L280.4,232.8 L280.1,234.6 L279.9,236.6 L279.7,238.7 L279.4,240.9 L279.2,243.4 L279.0,245.9 L278.8,248.6 L278.6,251.3 L278.5,253.9 L278.3,256.6 L278.3,259.1 L278.3,261.5 L278.3,263.8 L278.4,266.0 L278.6,268.3 L278.8,270.4 L279.0,272.5 L279.3,274.5 L279.5,276.4 L279.9,278.2 L280.2,279.9 L280.5,281.4 L280.9,282.8 L281.3,284.0 L281.7,285.2 L282.2,286.2 L282.7,287.1 L283.2,288.0 L283.8,288.7 L284.4,289.3 L285.0,289.9 L285.7,290.5 L286.5,291.0 L287.4,291.4 L288.3,291.6 L289.2,291.8 L290.0,291.8 L290.8,291.8 L291.5,291.8 L292.0,291.7 L292.5,291.7 L292.8,291.7 L293.2,289.3 L292.8,289.2 L292.2,289.1 L291.7,289.0 L291.0,288.8 L290.4,288.7 L289.8,288.5 L289.3,288.3 L288.9,288.1 L288.6,287.8 L288.3,287.5 L288.1,287.1 L287.8,286.6 L287.5,286.1 L287.3,285.6 L287.0,285.0 L286.9,284.4 L286.7,283.6 L286.6,282.8 L286.5,281.8 L286.5,280.6 L286.5,279.3 L286.6,277.8 L286.7,276.1 L286.9,274.3 L287.1,272.5 L287.3,270.6 L287.6,268.6 L287.9,266.5 L288.3,264.5 L288.7,262.5 L289.2,260.4 L289.8,258.2 L290.4,255.8 L291.1,253.4 L291.8,250.9 L292.6,248.4 L293.3,246.0 L294.0,243.7 L294.6,241.4 L295.1,239.4 L295.6,237.5 L296.0,235.8 L296.4,234.1 L296.8,232.5 L297.1,230.9 L297.4,229.5 L297.7,228.1 L297.9,226.9 L298.2,225.7 L298.3,224.6 L298.5,223.6 L298.6,222.8 L298.6,222.1 L298.6,221.5 L298.6,221.0 L298.5,220.6 L298.5,220.2 L298.4,219.9 L298.4,219.6 L298.4,219.4Z"/><circle cx="291.5" cy="218" r="7.00" fill="#14e6ea"/><circle cx="293" cy="290.5" r="1.25" fill="#14e6ea"/><path fill="#ffffff" d="M292.9,217.9 L292.7,218.9 L292.5,220.2 L292.3,221.6 L292.1,223.3 L291.8,225.1 L291.5,227.0 L291.2,229.0 L290.9,230.9 L290.6,232.9 L290.2,234.9 L289.8,236.9 L289.4,239.1 L288.9,241.5 L288.4,244.0 L287.9,246.4 L287.4,248.8 L286.9,251.0 L286.5,252.9 L286.2,254.6 L285.9,255.9 L287.1,256.1 L287.4,254.9 L287.8,253.2 L288.2,251.3 L288.7,249.1 L289.3,246.7 L289.8,244.3 L290.4,241.8 L290.9,239.4 L291.4,237.2 L291.8,235.1 L292.1,233.2 L292.4,231.2 L292.7,229.2 L293.0,227.2 L293.3,225.3 L293.5,223.5 L293.7,221.8 L293.9,220.3 L294.0,219.1 L294.1,218.1Z"/><path fill="#14e6ea" d="M310,245 C303,238 299.5,233 300,228 C300.5,222 307,220.5 310,227 C313,220.5 319.5,222 320,228 C320.5,233 317,238 310,245 Z"/><path fill="#14e6ea" d="M302.8,249.0 L302.9,249.5 L302.9,250.1 L303.0,250.7 L303.1,251.3 L303.1,252.0 L303.2,252.8 L303.3,253.5 L303.4,254.3 L303.5,255.1 L303.6,256.0 L303.8,256.9 L304.0,258.1 L304.2,259.3 L304.5,260.7 L304.7,262.1 L305.0,263.5 L305.3,264.9 L305.5,266.2 L305.8,267.4 L306.0,268.5 L306.2,269.5 L306.4,270.4 L306.6,271.3 L306.8,272.1 L307.0,273.0 L307.1,273.8 L307.3,274.5 L307.6,275.3 L307.8,276.1 L308.1,276.7 L308.4,277.3 L308.7,277.8 L309.0,278.3 L309.4,278.8 L309.8,279.3 L310.3,279.8 L311.0,280.3 L311.8,280.6 L312.7,280.6 L313.4,280.4 L314.0,280.1 L314.5,279.8 L315.1,279.4 L315.6,278.9 L316.2,278.3 L316.8,277.7 L317.4,277.1 L318.0,276.3 L318.6,275.5 L319.1,274.7 L319.7,273.7 L320.3,272.5 L320.9,271.2 L321.5,269.8 L322.1,268.4 L322.7,267.1 L323.2,265.8 L323.7,264.6 L324.1,263.7 L324.4,263.0 L322.2,262.0 L321.9,262.7 L321.5,263.7 L321.0,264.8 L320.4,266.1 L319.8,267.4 L319.2,268.8 L318.6,270.1 L318.0,271.4 L317.4,272.4 L316.9,273.3 L316.4,274.1 L315.9,274.7 L315.4,275.4 L314.9,276.0 L314.4,276.5 L313.9,276.9 L313.5,277.2 L313.1,277.5 L312.8,277.6 L312.6,277.6 L312.7,277.4 L313.0,277.4 L313.3,277.4 L313.6,277.4 L313.7,277.3 L313.8,277.1 L313.8,276.7 L313.9,276.3 L313.9,275.8 L313.9,275.3 L313.9,274.8 L314.0,274.3 L314.0,273.7 L314.0,273.0 L314.0,272.3 L314.1,271.5 L314.1,270.6 L314.1,269.6 L314.0,268.5 L314.0,267.5 L313.9,266.3 L313.8,265.1 L313.7,263.7 L313.6,262.3 L313.4,260.8 L313.3,259.3 L313.1,257.9 L312.9,256.5 L312.7,255.2 L312.4,254.0 L312.0,252.9 L311.6,251.9 L311.2,250.9 L310.7,250.1 L310.2,249.3 L309.7,248.7 L309.3,248.1 L308.9,247.6 L308.6,247.3 L308.4,247.0Z"/><circle cx="305.6" cy="248" r="3.00" fill="#14e6ea"/><circle cx="323.3" cy="262.5" r="1.20" fill="#14e6ea"/><path fill="#14e6ea" d="M323.0,250.2 L322.9,250.9 L322.8,251.8 L322.7,252.9 L322.6,254.1 L322.5,255.4 L322.4,256.7 L322.2,258.1 L322.1,259.5 L322.1,260.9 L322.0,262.2 L322.0,263.4 L322.0,264.7 L322.0,266.0 L322.0,267.4 L322.0,268.7 L322.1,270.1 L322.1,271.4 L322.2,272.7 L322.2,273.9 L322.3,275.1 L322.4,276.3 L322.5,277.5 L322.6,278.6 L322.8,279.8 L322.9,280.9 L323.1,281.9 L323.2,282.9 L323.3,283.8 L323.4,284.5 L323.5,285.1 L331.5,284.9 L331.6,284.3 L331.6,283.6 L331.7,282.7 L331.8,281.8 L331.9,280.7 L332.0,279.6 L332.1,278.4 L332.2,277.3 L332.3,276.1 L332.3,274.9 L332.3,273.7 L332.3,272.5 L332.3,271.2 L332.3,269.9 L332.3,268.5 L332.3,267.2 L332.2,265.8 L332.2,264.5 L332.1,263.1 L332.0,261.8 L331.9,260.5 L331.7,259.2 L331.5,257.8 L331.2,256.4 L331.0,255.0 L330.7,253.7 L330.5,252.5 L330.3,251.4 L330.1,250.6 L330.0,249.8Z"/><circle cx="326.5" cy="250" r="3.50" fill="#14e6ea"/><circle cx="327.5" cy="285" r="4.00" fill="#14e6ea"/><path fill="#14e6ea" d="M332.8,263.1 L333.2,262.4 L333.7,261.4 L334.3,260.3 L335.0,259.0 L335.7,257.7 L336.4,256.3 L337.1,255.0 L337.8,253.8 L338.5,252.7 L339.1,251.8 L339.7,251.1 L340.3,250.4 L340.8,249.8 L341.3,249.2 L341.8,248.8 L342.3,248.3 L342.8,248.0 L343.4,247.7 L344.0,247.4 L344.6,247.2 L345.3,247.0 L346.0,246.8 L346.8,246.7 L347.6,246.7 L348.4,246.7 L349.1,246.8 L349.7,247.0 L350.2,247.2 L350.5,247.4 L350.7,247.7 L350.9,248.1 L351.1,248.5 L351.2,249.0 L351.3,249.5 L351.4,250.1 L351.5,250.8 L351.6,251.4 L351.6,252.1 L351.7,252.8 L351.7,253.5 L351.8,254.2 L351.8,255.1 L351.8,256.1 L351.9,257.2 L351.9,258.4 L351.9,259.7 L351.9,261.0 L351.9,262.4 L352.0,263.8 L352.0,265.2 L352.0,266.4 L352.0,267.6 L352.0,268.8 L352.0,270.2 L351.9,271.5 L351.9,272.9 L352.0,274.4 L352.1,275.8 L352.3,277.3 L352.5,278.7 L352.9,279.9 L353.3,281.0 L353.7,282.2 L354.3,283.3 L354.8,284.5 L355.5,285.5 L356.2,286.6 L357.0,287.6 L358.0,288.4 L359.0,289.3 L360.4,289.9 L361.7,290.2 L362.9,290.3 L364.1,290.2 L365.2,290.1 L366.2,289.9 L367.1,289.7 L367.9,289.5 L368.5,289.4 L368.9,289.3 L369.1,286.7 L368.5,286.6 L367.8,286.5 L367.0,286.4 L366.1,286.2 L365.2,286.1 L364.4,285.8 L363.7,285.6 L363.1,285.3 L362.9,285.0 L363.0,284.7 L363.0,284.4 L363.0,284.0 L363.1,283.5 L363.1,282.8 L363.2,282.0 L363.2,281.2 L363.3,280.3 L363.4,279.3 L363.4,278.3 L363.5,277.3 L363.5,276.4 L363.6,275.5 L363.6,274.4 L363.7,273.2 L363.8,272.0 L363.9,270.6 L364.0,269.2 L364.0,267.8 L364.0,266.3 L364.0,264.8 L364.0,263.5 L363.9,262.2 L363.9,260.8 L363.8,259.3 L363.7,257.8 L363.6,256.4 L363.4,254.9 L363.2,253.4 L362.8,251.9 L362.3,250.5 L361.7,249.2 L361.0,248.1 L360.2,247.0 L359.4,246.0 L358.5,245.1 L357.5,244.4 L356.5,243.7 L355.4,243.1 L354.4,242.6 L353.3,242.3 L352.1,242.0 L350.9,242.0 L349.8,242.1 L348.8,242.3 L347.8,242.6 L346.8,242.9 L345.9,243.2 L345.0,243.6 L344.2,244.0 L343.4,244.4 L342.7,244.8 L342.0,245.3 L341.3,245.7 L340.6,246.2 L340.0,246.7 L339.4,247.3 L338.7,247.9 L338.1,248.6 L337.5,249.3 L336.9,250.2 L336.2,251.2 L335.5,252.4 L334.7,253.7 L334.0,255.1 L333.3,256.5 L332.6,257.8 L332.0,259.1 L331.4,260.2 L330.9,261.2 L330.6,261.9Z"/><circle cx="331.7" cy="262.5" r="1.30" fill="#14e6ea"/><circle cx="369" cy="288" r="1.30" fill="#14e6ea"/><path fill="#14e6ea" d="M377.1,210.3 L377.0,210.6 L376.9,210.9 L376.7,211.1 L376.6,211.3 L376.5,211.5 L376.3,211.7 L376.1,212.1 L375.9,212.7 L375.7,213.4 L375.4,214.3 L375.0,215.5 L374.6,216.9 L374.1,218.4 L373.6,220.1 L373.1,221.9 L372.5,223.8 L372.0,225.6 L371.5,227.4 L371.1,229.1 L370.8,230.6 L370.5,232.0 L370.3,233.4 L370.1,234.9 L369.9,236.4 L369.7,237.9 L369.5,239.5 L369.3,241.2 L369.1,242.9 L368.9,244.7 L368.8,246.5 L368.6,248.3 L368.5,250.1 L368.5,251.9 L368.4,253.8 L368.3,255.7 L368.3,257.6 L368.3,259.5 L368.3,261.3 L368.4,263.1 L368.5,264.8 L368.7,266.5 L368.9,268.1 L369.2,269.7 L369.5,271.2 L369.8,272.6 L370.2,273.9 L370.5,275.1 L370.8,276.3 L371.1,277.3 L371.3,278.2 L371.4,279.0 L371.5,279.8 L371.6,280.5 L371.7,281.2 L371.8,281.8 L371.9,282.3 L371.9,282.8 L371.9,283.2 L372.0,283.6 L372.0,284.0 L376.0,284.0 L376.0,283.7 L376.1,283.4 L376.2,282.9 L376.2,282.4 L376.3,281.9 L376.4,281.2 L376.5,280.5 L376.6,279.7 L376.7,278.8 L376.7,277.8 L376.8,276.7 L376.8,275.6 L376.8,274.3 L376.8,273.1 L376.8,271.8 L376.9,270.5 L376.9,269.1 L377.1,267.8 L377.2,266.5 L377.5,265.2 L377.8,263.8 L378.2,262.3 L378.6,260.8 L379.1,259.2 L379.6,257.5 L380.1,255.9 L380.7,254.2 L381.3,252.6 L381.9,251.0 L382.4,249.5 L383.0,248.2 L383.7,246.9 L384.3,245.7 L385.1,244.4 L385.8,243.1 L386.5,241.7 L387.3,240.3 L388.0,238.8 L388.6,237.1 L389.2,235.4 L389.7,233.5 L390.1,231.7 L390.5,229.7 L390.8,227.7 L391.1,225.8 L391.3,223.8 L391.6,222.0 L391.7,220.4 L391.9,218.9 L392.0,217.7 L392.1,216.7 L392.2,215.8 L392.2,215.1 L392.2,214.4 L392.2,213.9 L392.1,213.5 L392.1,213.1 L392.0,212.9 L391.9,212.8 L391.9,212.7Z"/><circle cx="384.5" cy="211.5" r="7.50" fill="#14e6ea"/><circle cx="374" cy="284" r="2.00" fill="#14e6ea"/><path fill="#ffffff" d="M387.9,212.9 L387.7,214.0 L387.4,215.5 L387.1,217.2 L386.8,219.1 L386.5,221.1 L386.1,223.3 L385.7,225.5 L385.2,227.7 L384.7,229.8 L384.2,231.8 L383.7,233.8 L383.0,236.0 L382.2,238.3 L381.4,240.6 L380.6,242.9 L379.8,245.2 L379.1,247.2 L378.4,249.0 L377.9,250.6 L377.4,251.8 L378.6,252.2 L379.0,251.0 L379.6,249.5 L380.3,247.7 L381.1,245.6 L381.9,243.4 L382.8,241.1 L383.7,238.8 L384.5,236.5 L385.2,234.3 L385.8,232.2 L386.3,230.2 L386.8,228.0 L387.2,225.8 L387.6,223.5 L387.9,221.4 L388.2,219.3 L388.5,217.4 L388.7,215.7 L389.0,214.2 L389.1,213.1Z"/><path fill="#14e6ea" d="M374.6,277.3 L374.8,276.4 L375.1,275.2 L375.4,273.7 L375.7,272.1 L376.1,270.4 L376.5,268.7 L377.0,266.9 L377.4,265.3 L377.8,263.7 L378.2,262.4 L378.6,261.2 L379.1,260.1 L379.5,259.1 L379.9,258.1 L380.4,257.2 L380.8,256.3 L381.3,255.4 L381.8,254.5 L382.4,253.6 L382.9,252.7 L383.5,251.7 L384.1,250.7 L384.8,249.7 L385.4,248.6 L386.1,247.6 L386.8,246.7 L387.4,245.9 L388.0,245.2 L388.6,244.6 L389.1,244.3 L389.6,244.2 L389.9,244.2 L390.1,244.4 L390.0,244.7 L389.6,244.9 L389.2,245.0 L388.9,245.1 L388.7,245.3 L388.6,245.6 L388.6,245.9 L388.8,246.4 L388.9,247.1 L389.2,248.0 L389.5,248.9 L389.7,250.0 L390.0,251.2 L390.3,252.4 L390.6,253.6 L390.9,254.9 L391.1,256.1 L391.3,257.3 L391.5,258.7 L391.8,260.1 L392.0,261.6 L392.1,263.1 L392.3,264.6 L392.5,266.1 L392.7,267.6 L392.9,269.1 L393.0,270.4 L393.2,271.6 L393.3,272.9 L393.4,274.1 L393.5,275.3 L393.6,276.5 L393.7,277.7 L393.9,278.9 L394.0,280.0 L394.1,281.1 L394.3,282.2 L394.5,283.1 L394.6,283.9 L394.8,284.8 L395.0,285.6 L395.2,286.4 L395.4,287.2 L395.7,287.9 L396.0,288.7 L396.3,289.4 L396.8,290.1 L397.3,290.7 L397.8,291.2 L398.4,291.6 L399.0,292.0 L399.8,292.2 L400.6,292.3 L401.4,292.3 L402.1,292.0 L402.8,291.7 L403.4,291.2 L404.0,290.6 L404.5,290.0 L405.1,289.4 L405.6,288.6 L406.2,287.8 L406.8,286.9 L407.4,285.9 L408.0,284.8 L408.6,283.7 L409.2,282.6 L409.8,281.2 L410.4,279.7 L411.1,278.0 L411.8,276.2 L412.5,274.4 L413.2,272.7 L413.8,271.0 L414.3,269.6 L414.8,268.4 L415.1,267.4 L412.9,266.6 L412.5,267.5 L412.0,268.7 L411.5,270.2 L410.9,271.8 L410.2,273.6 L409.5,275.3 L408.8,277.1 L408.1,278.7 L407.4,280.2 L406.8,281.4 L406.3,282.5 L405.7,283.5 L405.1,284.5 L404.5,285.4 L404.0,286.2 L403.4,287.0 L402.9,287.6 L402.4,288.1 L402.0,288.5 L401.6,288.8 L401.3,288.9 L401.1,288.9 L401.1,288.8 L401.1,288.7 L401.1,288.6 L401.2,288.5 L401.2,288.4 L401.2,288.3 L401.2,288.1 L401.2,287.9 L401.3,287.7 L401.4,287.4 L401.5,287.1 L401.6,286.6 L401.7,286.0 L401.8,285.3 L402.0,284.6 L402.1,283.7 L402.2,282.8 L402.3,281.8 L402.4,280.9 L402.5,279.9 L402.6,278.8 L402.7,277.7 L402.8,276.5 L402.9,275.2 L403.0,273.9 L403.0,272.5 L403.0,271.0 L403.0,269.6 L402.9,268.2 L402.8,266.6 L402.7,265.1 L402.5,263.5 L402.3,261.8 L402.1,260.2 L401.8,258.5 L401.6,256.9 L401.2,255.4 L400.9,253.9 L400.5,252.5 L400.0,251.0 L399.6,249.6 L399.0,248.3 L398.5,246.9 L397.9,245.7 L397.3,244.5 L396.7,243.4 L396.1,242.4 L395.4,241.6 L394.6,240.9 L393.8,240.3 L392.9,239.8 L391.8,239.4 L390.6,239.3 L389.5,239.5 L388.7,240.0 L388.0,240.5 L387.4,241.1 L386.9,241.7 L386.3,242.4 L385.7,243.2 L385.0,244.0 L384.4,245.0 L383.7,246.0 L383.0,247.1 L382.3,248.2 L381.7,249.2 L381.1,250.3 L380.5,251.3 L380.0,252.3 L379.5,253.2 L379.0,254.1 L378.5,255.1 L378.0,256.0 L377.5,257.0 L377.1,258.1 L376.6,259.2 L376.2,260.3 L375.8,261.6 L375.3,263.0 L374.9,264.6 L374.4,266.3 L374.0,268.1 L373.6,269.8 L373.2,271.6 L372.8,273.2 L372.5,274.6 L372.2,275.8 L372.0,276.7Z"/><circle cx="373.3" cy="277" r="1.30" fill="#14e6ea"/><circle cx="414" cy="267" r="1.20" fill="#14e6ea"/><path fill="#14e6ea" d="M430.1,279.9 L430.3,280.3 L430.5,280.8 L430.8,281.3 L431.0,281.8 L431.3,282.4 L431.6,283.0 L431.8,283.6 L432.0,284.2 L432.2,284.7 L432.3,285.2 L432.3,285.7 L432.3,286.3 L432.3,286.9 L432.3,287.5 L432.2,288.1 L432.1,288.8 L432.0,289.4 L431.9,290.1 L431.7,290.9 L431.6,291.6 L431.4,292.3 L431.1,293.1 L430.8,294.0 L430.4,295.0 L430.0,295.9 L429.6,296.8 L429.3,297.6 L429.0,298.4 L428.7,299.0 L428.5,299.5 L430.7,300.5 L430.9,300.0 L431.2,299.4 L431.6,298.7 L432.0,297.9 L432.5,297.0 L432.9,296.1 L433.3,295.1 L433.8,294.2 L434.1,293.3 L434.4,292.4 L434.7,291.7 L434.9,290.9 L435.1,290.1 L435.3,289.4 L435.5,288.6 L435.6,287.9 L435.7,287.1 L435.8,286.3 L435.8,285.6 L435.7,284.8 L435.6,284.0 L435.4,283.2 L435.1,282.4 L434.8,281.6 L434.5,280.9 L434.2,280.3 L433.9,279.7 L433.6,279.2 L433.4,278.8 L433.3,278.5Z"/><circle cx="431.7" cy="279.2" r="1.75" fill="#14e6ea"/><circle cx="429.6" cy="300" r="1.20" fill="#14e6ea"/><path fill="#14e6ea" d="M462.2,219.1 L462.2,219.2 L462.1,219.3 L461.9,219.6 L461.7,220.0 L461.4,220.5 L461.2,221.1 L460.9,221.8 L460.7,222.6 L460.4,223.5 L460.2,224.6 L459.9,225.8 L459.7,227.1 L459.5,228.5 L459.3,229.9 L459.1,231.5 L458.9,233.0 L458.7,234.6 L458.5,236.3 L458.3,237.9 L458.1,239.5 L458.0,241.2 L457.8,243.0 L457.6,244.9 L457.4,246.8 L457.2,248.9 L457.1,251.0 L456.9,253.1 L456.7,255.2 L456.6,257.2 L456.6,259.2 L456.5,261.1 L456.5,263.0 L456.6,264.8 L456.7,266.5 L456.8,268.3 L456.9,269.9 L457.0,271.5 L457.2,273.1 L457.3,274.6 L457.5,276.0 L457.7,277.5 L457.9,278.9 L458.2,280.3 L458.5,281.6 L458.8,282.8 L459.1,283.9 L459.4,285.0 L459.7,285.9 L459.9,286.6 L460.0,287.2 L464.0,286.8 L464.0,286.1 L464.0,285.3 L464.0,284.4 L464.0,283.3 L464.0,282.2 L464.1,281.0 L464.1,279.8 L464.2,278.5 L464.3,277.2 L464.5,276.0 L464.7,274.6 L464.9,273.2 L465.1,271.8 L465.3,270.3 L465.6,268.7 L465.9,267.2 L466.2,265.6 L466.6,264.0 L467.0,262.4 L467.4,260.8 L467.9,259.2 L468.5,257.5 L469.2,255.7 L469.9,253.9 L470.6,252.0 L471.3,250.1 L472.0,248.1 L472.7,246.2 L473.3,244.3 L473.9,242.5 L474.3,240.7 L474.7,238.9 L475.0,237.1 L475.3,235.4 L475.6,233.8 L475.8,232.2 L476.0,230.8 L476.1,229.5 L476.3,228.4 L476.4,227.4 L476.5,226.6 L476.6,226.0 L476.6,225.4 L476.7,225.0 L476.7,224.7 L476.6,224.4 L476.6,224.1 L476.6,223.7 L476.7,223.3 L476.8,222.9Z"/><circle cx="469.5" cy="221" r="7.50" fill="#14e6ea"/><circle cx="462" cy="287" r="2.00" fill="#14e6ea"/><path fill="#ffffff" d="M472.4,220.9 L472.2,221.8 L472.0,223.1 L471.7,224.5 L471.4,226.1 L471.1,227.8 L470.8,229.6 L470.4,231.5 L470.0,233.3 L469.6,235.1 L469.2,236.8 L468.8,238.5 L468.2,240.4 L467.6,242.3 L467.0,244.3 L466.4,246.3 L465.8,248.2 L465.2,249.9 L464.7,251.5 L464.3,252.8 L463.9,253.8 L465.1,254.2 L465.4,253.2 L465.9,251.9 L466.4,250.3 L467.1,248.6 L467.7,246.7 L468.4,244.8 L469.1,242.8 L469.7,240.8 L470.3,239.0 L470.8,237.2 L471.2,235.5 L471.6,233.6 L471.9,231.8 L472.3,229.9 L472.6,228.1 L472.8,226.3 L473.1,224.7 L473.3,223.3 L473.5,222.1 L473.6,221.1Z"/><path fill="#14e6ea" d="M468.1,261.1 L468.4,260.6 L468.8,260.0 L469.2,259.3 L469.8,258.5 L470.3,257.6 L470.9,256.7 L471.4,255.9 L472.0,255.1 L472.5,254.5 L473.0,254.0 L473.5,253.5 L473.9,253.1 L474.4,252.7 L474.9,252.4 L475.4,252.1 L475.9,251.8 L476.4,251.6 L476.8,251.5 L477.3,251.4 L477.7,251.5 L478.2,251.6 L478.6,251.8 L479.0,252.0 L479.2,252.3 L479.2,252.6 L479.0,252.9 L478.8,253.1 L478.6,253.2 L478.5,253.4 L478.4,253.8 L478.5,254.3 L478.6,255.2 L478.8,256.2 L478.9,257.5 L479.1,258.8 L479.3,260.2 L479.5,261.6 L479.7,263.1 L479.9,264.4 L480.1,265.7 L480.2,266.9 L480.3,268.1 L480.4,269.4 L480.5,270.7 L480.6,272.0 L480.7,273.4 L480.9,274.7 L481.1,276.1 L481.3,277.4 L481.5,278.6 L481.9,279.7 L482.2,280.7 L482.6,281.7 L483.0,282.7 L483.4,283.6 L483.9,284.4 L484.4,285.2 L484.8,285.9 L485.3,286.6 L485.8,287.2 L486.3,287.7 L486.7,288.1 L487.2,288.6 L487.8,288.9 L488.6,289.2 L489.4,289.4 L490.1,289.3 L490.8,289.0 L491.4,288.6 L492.0,288.1 L492.5,287.5 L493.1,286.7 L493.7,285.8 L494.3,284.9 L494.9,283.8 L495.5,282.8 L496.1,281.9 L496.6,281.0 L497.0,280.3 L497.3,279.8 L495.2,278.6 L494.9,279.1 L494.4,279.8 L493.9,280.6 L493.3,281.5 L492.7,282.5 L492.1,283.4 L491.5,284.3 L490.9,285.0 L490.4,285.6 L490.0,285.9 L489.8,286.0 L489.6,286.0 L489.7,285.9 L489.8,285.8 L490.0,285.7 L490.2,285.7 L490.3,285.6 L490.3,285.4 L490.2,285.2 L490.2,284.8 L490.2,284.4 L490.2,283.9 L490.2,283.3 L490.3,282.7 L490.3,281.9 L490.4,281.1 L490.4,280.2 L490.4,279.3 L490.5,278.4 L490.5,277.4 L490.5,276.4 L490.5,275.4 L490.5,274.2 L490.5,272.9 L490.5,271.6 L490.5,270.2 L490.4,268.7 L490.3,267.2 L490.2,265.7 L489.9,264.3 L489.7,262.9 L489.4,261.4 L489.1,259.9 L488.7,258.4 L488.3,256.8 L487.9,255.4 L487.4,253.9 L486.8,252.6 L486.3,251.4 L485.6,250.2 L484.8,249.2 L483.8,248.4 L482.8,247.8 L481.7,247.5 L480.6,247.4 L479.7,247.5 L479.0,247.8 L478.4,248.0 L477.8,248.3 L477.3,248.5 L476.7,248.7 L476.1,248.9 L475.4,249.2 L474.8,249.5 L474.2,249.8 L473.5,250.1 L472.9,250.5 L472.2,251.0 L471.6,251.5 L471.0,252.0 L470.4,252.7 L469.8,253.5 L469.2,254.4 L468.6,255.3 L468.0,256.2 L467.5,257.1 L467.0,257.9 L466.5,258.6 L466.2,259.2 L465.9,259.7Z"/><circle cx="467" cy="260.4" r="1.30" fill="#14e6ea"/><circle cx="496.25" cy="279.2" r="1.20" fill="#14e6ea"/><path fill="#14e6ea" d="M505.5,245 C499,239 495,234 495.2,230 C495.5,225 502,224 505.5,230 C509,224 515.5,225 516,230 C516.3,234 512,239 505.5,245 Z"/><path fill="#14e6ea" d="M501.1,254.8 L501.1,255.1 L501.1,255.6 L501.1,256.1 L501.0,256.6 L501.0,257.2 L501.0,257.9 L501.0,258.5 L501.0,259.3 L501.0,260.0 L501.1,260.9 L501.2,261.8 L501.3,262.9 L501.5,264.0 L501.7,265.3 L501.9,266.6 L502.1,267.9 L502.3,269.2 L502.6,270.5 L502.8,271.7 L503.1,272.7 L503.3,273.6 L503.5,274.5 L503.8,275.3 L504.0,276.2 L504.3,277.0 L504.6,277.8 L505.0,278.7 L505.3,279.5 L505.8,280.3 L506.2,281.1 L506.7,281.8 L507.1,282.5 L507.7,283.2 L508.2,283.9 L508.8,284.6 L509.5,285.3 L510.2,285.8 L511.1,286.3 L512.1,286.6 L513.2,286.5 L514.1,286.0 L514.9,285.5 L515.5,284.8 L516.2,284.0 L516.8,283.2 L517.5,282.3 L518.1,281.4 L518.8,280.5 L519.4,279.6 L520.0,278.8 L520.7,277.9 L521.4,276.9 L522.1,275.8 L522.9,274.7 L523.6,273.6 L524.3,272.6 L525.0,271.6 L525.5,270.7 L526.0,270.0 L526.4,269.4 L524.4,268.1 L524.0,268.6 L523.5,269.4 L522.9,270.2 L522.3,271.2 L521.6,272.2 L520.8,273.3 L520.1,274.4 L519.3,275.4 L518.6,276.4 L518.0,277.2 L517.3,278.1 L516.7,279.0 L516.0,279.9 L515.4,280.8 L514.8,281.6 L514.2,282.3 L513.6,282.9 L513.1,283.3 L512.7,283.5 L512.6,283.5 L512.7,283.4 L512.8,283.3 L512.8,283.1 L512.6,282.8 L512.5,282.3 L512.3,281.7 L512.2,281.0 L512.0,280.3 L511.9,279.6 L511.8,278.9 L511.8,278.3 L511.8,277.8 L511.8,277.2 L511.9,276.6 L511.9,275.9 L512.0,275.1 L512.0,274.2 L512.0,273.3 L512.0,272.3 L511.9,271.3 L511.8,270.2 L511.7,269.0 L511.5,267.8 L511.3,266.5 L511.1,265.1 L510.9,263.8 L510.7,262.5 L510.4,261.3 L510.2,260.2 L509.9,259.1 L509.6,258.2 L509.3,257.4 L509.0,256.6 L508.6,255.9 L508.2,255.3 L507.9,254.7 L507.6,254.2 L507.3,253.8 L507.1,253.5 L506.9,253.2Z"/><circle cx="504" cy="254" r="3.00" fill="#14e6ea"/><circle cx="525.4" cy="268.75" r="1.20" fill="#14e6ea"/><path fill="#14e6ea" d="M525.2,255.0 L525.2,255.4 L525.3,255.9 L525.3,256.4 L525.3,257.0 L525.3,257.5 L525.3,258.0 L525.2,258.6 L525.2,259.2 L525.1,259.9 L525.1,260.6 L525.2,261.6 L525.2,262.8 L525.3,264.2 L525.3,265.7 L525.4,267.3 L525.5,268.9 L525.6,270.6 L525.7,272.2 L525.9,273.8 L526.0,275.3 L526.2,276.8 L526.4,278.3 L526.7,279.8 L526.9,281.4 L527.2,282.8 L527.4,284.2 L527.7,285.5 L527.9,286.6 L528.1,287.6 L528.2,288.3 L535.2,287.7 L535.2,286.9 L535.2,285.9 L535.2,284.7 L535.1,283.5 L535.1,282.1 L535.1,280.6 L535.1,279.1 L535.1,277.6 L535.0,276.1 L535.0,274.7 L534.9,273.3 L534.9,271.8 L534.9,270.2 L534.8,268.5 L534.8,266.9 L534.7,265.2 L534.6,263.6 L534.5,262.1 L534.3,260.7 L534.1,259.4 L533.7,258.1 L533.3,257.1 L532.8,256.1 L532.2,255.3 L531.7,254.6 L531.2,254.1 L530.7,253.7 L530.3,253.4 L530.0,253.2 L529.8,253.0Z"/><circle cx="527.5" cy="254" r="2.50" fill="#14e6ea"/><circle cx="531.7" cy="288" r="3.50" fill="#14e6ea"/><path fill="#14e6ea" d="M534.8,263.2 L535.2,262.7 L535.7,262.0 L536.2,261.2 L536.8,260.3 L537.5,259.3 L538.2,258.3 L538.9,257.4 L539.6,256.5 L540.3,255.7 L541.0,255.0 L541.7,254.4 L542.4,253.7 L543.2,253.1 L544.1,252.4 L544.9,251.8 L545.8,251.3 L546.6,250.9 L547.3,250.6 L548.0,250.5 L548.6,250.5 L549.0,250.7 L549.3,251.0 L549.5,251.3 L549.4,251.7 L549.1,252.0 L548.7,252.3 L548.4,252.5 L548.1,252.7 L547.8,253.0 L547.7,253.4 L547.6,253.8 L547.6,254.5 L547.5,255.4 L547.5,256.5 L547.5,257.7 L547.4,259.0 L547.4,260.4 L547.3,261.9 L547.3,263.4 L547.3,265.0 L547.2,266.5 L547.1,268.1 L547.1,269.8 L547.0,271.5 L546.9,273.3 L546.8,275.1 L546.7,276.9 L546.6,278.7 L546.6,280.3 L546.5,281.9 L546.4,283.4 L546.4,284.9 L546.3,286.3 L546.3,287.7 L546.2,289.1 L546.2,290.3 L546.1,291.5 L546.1,292.5 L546.0,293.3 L546.0,294.0 L559.0,294.0 L559.0,293.3 L558.9,292.4 L558.9,291.4 L558.8,290.3 L558.7,289.0 L558.7,287.7 L558.6,286.4 L558.6,284.9 L558.5,283.5 L558.5,282.1 L558.5,280.6 L558.5,279.1 L558.6,277.4 L558.6,275.6 L558.7,273.8 L558.7,272.0 L558.8,270.1 L558.8,268.4 L558.8,266.6 L558.7,265.0 L558.7,263.5 L558.7,262.0 L558.7,260.5 L558.7,259.0 L558.6,257.6 L558.5,256.1 L558.4,254.7 L558.2,253.3 L557.8,251.9 L557.3,250.6 L556.7,249.5 L555.9,248.6 L554.9,247.7 L553.8,247.1 L552.7,246.7 L551.5,246.6 L550.5,246.7 L549.6,246.9 L548.8,247.2 L548.0,247.5 L547.2,247.9 L546.4,248.3 L545.5,248.7 L544.6,249.2 L543.6,249.7 L542.7,250.3 L541.7,250.9 L540.8,251.6 L539.9,252.3 L539.0,253.0 L538.2,253.8 L537.5,254.7 L536.7,255.7 L535.9,256.8 L535.2,257.8 L534.6,258.8 L534.0,259.7 L533.5,260.6 L533.0,261.2 L532.7,261.8Z"/><circle cx="533.75" cy="262.5" r="1.30" fill="#14e6ea"/><circle cx="552.5" cy="294" r="6.50" fill="#14e6ea"/><path fill="#14e6ea" d="M561.9,263.2 L562.2,262.6 L562.6,261.9 L563.1,261.1 L563.6,260.2 L564.1,259.3 L564.7,258.3 L565.2,257.3 L565.9,256.4 L566.5,255.6 L567.1,254.9 L567.7,254.2 L568.4,253.5 L569.1,252.7 L569.9,252.0 L570.6,251.3 L571.4,250.7 L572.1,250.3 L572.8,250.0 L573.3,249.9 L573.7,250.0 L574.0,250.2 L574.2,250.6 L574.2,251.0 L574.0,251.4 L573.7,251.8 L573.3,252.1 L572.9,252.4 L572.6,252.6 L572.3,252.9 L572.2,253.3 L572.1,254.0 L572.0,255.0 L572.0,256.3 L571.9,257.7 L571.8,259.3 L571.8,261.0 L571.7,262.6 L571.6,264.3 L571.4,265.9 L571.3,267.3 L571.1,268.5 L570.9,269.8 L570.6,271.1 L570.3,272.4 L570.0,273.7 L569.7,275.1 L569.4,276.5 L569.1,277.9 L568.8,279.4 L568.6,280.8 L568.5,282.1 L568.4,283.4 L568.4,284.7 L568.4,285.9 L568.4,287.1 L568.4,288.2 L568.5,289.1 L568.5,290.0 L568.5,290.7 L568.6,291.3 L578.4,292.7 L578.6,292.1 L578.9,291.4 L579.1,290.6 L579.4,289.7 L579.7,288.7 L580.1,287.6 L580.4,286.5 L580.8,285.4 L581.1,284.3 L581.4,283.2 L581.7,282.2 L582.0,281.0 L582.4,279.8 L582.8,278.4 L583.2,277.0 L583.5,275.5 L583.9,273.9 L584.2,272.2 L584.5,270.5 L584.7,268.7 L584.9,267.0 L585.0,265.2 L585.1,263.3 L585.1,261.4 L585.1,259.5 L585.1,257.6 L584.9,255.7 L584.7,253.9 L584.4,252.3 L583.8,250.7 L583.1,249.2 L582.2,247.9 L581.1,246.8 L579.9,246.0 L578.5,245.4 L577.2,245.2 L575.9,245.2 L574.8,245.4 L573.8,245.7 L572.9,246.0 L572.0,246.5 L571.2,247.1 L570.4,247.7 L569.5,248.4 L568.7,249.1 L567.9,249.9 L567.1,250.7 L566.3,251.5 L565.6,252.3 L564.9,253.1 L564.3,254.0 L563.6,254.9 L563.0,255.9 L562.4,257.0 L561.8,258.0 L561.3,259.0 L560.8,259.9 L560.3,260.7 L560.0,261.3 L559.7,261.8Z"/><circle cx="560.8" cy="262.5" r="1.30" fill="#14e6ea"/><circle cx="573.5" cy="292" r="5.00" fill="#14e6ea"/><path fill="#14e6ea" d="M579.0,293.1 L579.5,292.6 L580.1,292.0 L580.8,291.3 L581.6,290.5 L582.5,289.6 L583.4,288.8 L584.2,288.0 L585.1,287.2 L585.8,286.6 L586.5,286.1 L587.1,285.7 L587.7,285.4 L588.2,285.2 L588.8,285.0 L589.3,284.8 L589.8,284.7 L590.4,284.6 L591.0,284.5 L591.6,284.3 L592.3,284.2 L592.9,284.0 L593.6,283.9 L594.3,283.7 L595.0,283.6 L595.7,283.5 L596.4,283.4 L597.0,283.3 L597.6,283.2 L598.1,283.2 L598.5,283.1 L598.1,280.9 L597.8,281.0 L597.3,281.0 L596.7,281.1 L596.1,281.2 L595.4,281.2 L594.6,281.3 L593.9,281.4 L593.1,281.6 L592.4,281.7 L591.7,281.8 L591.1,282.0 L590.5,282.1 L589.9,282.2 L589.3,282.3 L588.7,282.4 L588.0,282.6 L587.3,282.8 L586.6,283.1 L585.9,283.5 L585.1,283.9 L584.3,284.5 L583.4,285.2 L582.4,285.9 L581.5,286.8 L580.5,287.6 L579.6,288.4 L578.8,289.2 L578.1,289.9 L577.4,290.5 L577.0,290.9Z"/><circle cx="578" cy="292" r="1.50" fill="#14e6ea"/><circle cx="598.3" cy="282" r="1.10" fill="#14e6ea"/><path fill="#14e6ea" d="M617.0,243.3 L616.6,243.4 L616.0,243.6 L615.3,243.7 L614.5,244.0 L613.6,244.3 L612.6,244.7 L611.6,245.2 L610.5,245.9 L609.5,246.8 L608.6,247.8 L607.8,248.9 L607.0,250.0 L606.3,251.2 L605.6,252.4 L604.9,253.7 L604.2,255.1 L603.7,256.6 L603.1,258.0 L602.7,259.5 L602.3,261.0 L602.1,262.6 L601.9,264.1 L601.7,265.7 L601.7,267.3 L601.7,268.8 L601.8,270.3 L601.9,271.8 L602.1,273.2 L602.3,274.5 L602.5,275.7 L602.9,276.9 L603.3,278.0 L603.7,279.1 L604.2,280.1 L604.8,281.1 L605.4,282.0 L606.1,282.9 L606.7,283.7 L607.5,284.4 L608.2,285.1 L609.0,285.7 L609.9,286.2 L610.8,286.5 L611.6,286.7 L612.4,286.8 L613.2,286.8 L613.9,286.7 L614.6,286.7 L615.2,286.6 L615.9,286.5 L616.6,286.5 L617.4,286.4 L618.2,286.4 L619.0,286.4 L619.9,286.3 L620.8,286.3 L621.8,286.1 L622.7,285.9 L623.7,285.6 L624.6,285.2 L625.5,284.6 L626.5,283.9 L627.5,283.1 L628.4,282.2 L629.4,281.3 L630.2,280.5 L631.1,279.6 L631.8,278.9 L632.4,278.3 L632.8,277.9 L631.2,276.1 L630.7,276.6 L630.1,277.2 L629.3,277.9 L628.5,278.7 L627.6,279.5 L626.7,280.4 L625.8,281.2 L625.0,281.9 L624.1,282.4 L623.4,282.8 L622.7,283.1 L622.0,283.4 L621.2,283.6 L620.5,283.7 L619.7,283.8 L618.9,283.8 L618.2,283.8 L617.5,283.7 L616.8,283.6 L616.1,283.5 L615.5,283.3 L615.0,283.1 L614.5,282.9 L614.2,282.6 L613.9,282.3 L613.7,282.0 L613.7,281.7 L613.7,281.5 L613.8,281.2 L613.8,280.9 L613.8,280.5 L613.9,280.0 L613.9,279.5 L614.0,278.9 L614.1,278.3 L614.2,277.6 L614.3,276.8 L614.3,276.0 L614.4,275.2 L614.5,274.3 L614.5,273.3 L614.5,272.2 L614.5,271.1 L614.5,269.9 L614.5,268.7 L614.5,267.4 L614.5,266.2 L614.6,265.1 L614.6,264.0 L614.7,263.0 L614.8,262.0 L614.9,260.8 L615.1,259.7 L615.2,258.5 L615.4,257.3 L615.6,256.2 L615.9,255.0 L616.1,254.0 L616.3,253.0 L616.4,252.2 L616.5,251.5 L616.6,250.9 L616.8,250.1 L617.1,249.4 L617.4,248.6 L617.7,247.9 L618.1,247.2 L618.4,246.6 L618.8,246.0 L619.0,245.5Z"/><circle cx="618" cy="244.4" r="1.50" fill="#14e6ea"/><circle cx="632" cy="277" r="1.20" fill="#14e6ea"/><path fill="#14e6ea" d="M618.1,245.9 L618.5,245.9 L619.1,245.8 L619.8,245.7 L620.5,245.7 L621.2,245.6 L622.0,245.6 L622.7,245.6 L623.4,245.6 L623.9,245.7 L624.5,245.9 L625.0,246.2 L625.7,246.5 L626.4,246.9 L627.0,247.3 L627.6,247.7 L628.2,248.2 L628.7,248.7 L629.1,249.3 L629.4,249.8 L629.5,250.4 L629.7,251.1 L629.7,251.9 L629.7,252.9 L629.6,254.0 L629.4,255.1 L629.2,256.3 L628.9,257.4 L628.5,258.5 L628.1,259.4 L627.7,260.3 L627.2,261.0 L626.6,261.8 L626.0,262.5 L625.2,263.2 L624.4,263.9 L623.6,264.5 L622.7,265.1 L621.9,265.7 L621.0,266.2 L620.3,266.7 L619.5,267.1 L618.7,267.5 L617.9,267.8 L617.0,268.1 L616.2,268.3 L615.3,268.6 L614.5,268.8 L613.8,268.9 L613.2,269.1 L612.7,269.2 L613.3,271.8 L613.8,271.6 L614.4,271.5 L615.1,271.4 L615.9,271.2 L616.8,271.0 L617.8,270.8 L618.8,270.5 L619.8,270.2 L620.8,269.8 L621.7,269.3 L622.6,268.8 L623.5,268.2 L624.4,267.6 L625.4,266.9 L626.3,266.2 L627.2,265.4 L628.1,264.6 L628.9,263.7 L629.7,262.7 L630.3,261.7 L630.8,260.7 L631.3,259.5 L631.7,258.3 L632.1,257.0 L632.4,255.7 L632.6,254.4 L632.7,253.1 L632.7,251.9 L632.6,250.7 L632.5,249.6 L632.1,248.6 L631.6,247.7 L631.0,246.8 L630.3,246.1 L629.5,245.4 L628.7,244.8 L627.9,244.3 L627.1,243.8 L626.3,243.5 L625.5,243.1 L624.7,242.8 L623.7,242.6 L622.8,242.6 L621.9,242.6 L621.0,242.6 L620.2,242.7 L619.5,242.8 L618.8,242.8 L618.3,242.9 L617.9,242.9Z"/><circle cx="618" cy="244.4" r="1.50" fill="#14e6ea"/><circle cx="613" cy="270.5" r="1.30" fill="#14e6ea"/><path fill="#14e6ea" d="M657.9,232.0 L657.6,232.3 L657.2,232.7 L656.8,233.1 L656.3,233.5 L655.8,234.0 L655.4,234.4 L655.0,234.6 L654.8,234.8 L654.8,234.8 L655.2,234.9 L655.2,234.9 L655.0,234.6 L654.8,234.0 L654.6,233.3 L654.3,232.5 L654.1,231.7 L654.0,230.9 L653.9,230.1 L653.8,229.5 L653.8,229.1 L653.8,228.8 L653.9,228.5 L654.0,228.2 L654.1,228.0 L654.3,227.8 L654.5,227.6 L654.7,227.4 L654.9,227.3 L655.1,227.3 L655.1,227.3 L655.2,227.3 L655.3,227.4 L655.6,227.6 L655.9,227.9 L656.3,228.2 L656.7,228.6 L657.0,228.9 L657.4,229.2 L657.7,229.5 L658.0,229.7 L660.0,226.3 L659.8,226.2 L659.5,226.1 L659.1,225.9 L658.6,225.6 L658.0,225.4 L657.4,225.2 L656.8,225.0 L656.2,224.8 L655.6,224.7 L654.9,224.7 L654.3,224.9 L653.8,225.1 L653.3,225.4 L652.9,225.7 L652.4,226.1 L652.1,226.5 L651.7,227.1 L651.5,227.6 L651.3,228.3 L651.2,228.9 L651.2,229.7 L651.3,230.5 L651.4,231.3 L651.6,232.3 L651.8,233.2 L652.1,234.1 L652.4,235.0 L652.7,235.8 L653.1,236.5 L653.8,237.1 L654.9,237.4 L655.7,237.2 L656.4,236.8 L657.0,236.4 L657.6,235.9 L658.1,235.4 L658.6,234.9 L659.0,234.5 L659.3,234.2 L659.5,234.0Z"/><circle cx="658.7" cy="233" r="1.30" fill="#14e6ea"/><circle cx="659" cy="228" r="2.00" fill="#14e6ea"/><path fill="#14e6ea" d="M657.2,229.7 L657.5,230.3 L658.0,231.0 L658.5,231.8 L659.1,232.6 L659.7,233.5 L660.2,234.5 L660.8,235.4 L661.3,236.4 L661.7,237.4 L662.2,238.3 L662.6,239.5 L663.1,240.7 L663.7,242.1 L664.2,243.5 L664.7,244.9 L665.2,246.3 L665.6,247.7 L665.9,249.0 L666.2,250.1 L666.4,251.1 L666.5,252.1 L666.6,253.0 L666.6,253.9 L666.6,254.8 L666.6,255.6 L666.5,256.5 L666.4,257.4 L666.2,258.3 L666.1,259.2 L665.8,260.1 L665.5,261.0 L665.2,262.0 L664.8,263.0 L664.2,264.0 L663.7,265.1 L663.1,266.1 L662.4,267.2 L661.8,268.2 L661.2,269.1 L660.6,270.0 L660.1,270.8 L659.6,271.5 L659.1,272.3 L658.5,273.0 L657.9,273.7 L657.3,274.4 L656.7,275.1 L656.0,275.7 L655.4,276.3 L654.8,276.8 L654.3,277.3 L653.7,277.6 L653.2,278.0 L652.6,278.3 L652.0,278.6 L651.4,278.8 L650.9,279.0 L650.4,279.2 L649.9,279.4 L649.6,279.6 L650.4,282.4 L650.7,282.4 L651.2,282.4 L651.7,282.3 L652.3,282.3 L653.0,282.2 L653.7,282.1 L654.6,281.9 L655.4,281.7 L656.3,281.5 L657.2,281.2 L658.1,280.9 L659.0,280.6 L659.9,280.2 L660.9,279.9 L662.0,279.4 L663.0,278.9 L664.1,278.3 L665.2,277.7 L666.3,276.9 L667.4,276.0 L668.3,275.1 L669.3,274.1 L670.3,273.0 L671.2,271.9 L672.2,270.7 L673.1,269.4 L674.0,268.1 L674.8,266.7 L675.5,265.3 L676.2,263.9 L676.7,262.5 L677.1,261.1 L677.5,259.7 L677.8,258.2 L678.1,256.7 L678.2,255.2 L678.2,253.7 L678.1,252.1 L677.9,250.5 L677.6,248.9 L677.2,247.2 L676.6,245.5 L675.9,243.8 L675.1,242.2 L674.3,240.6 L673.4,239.0 L672.5,237.6 L671.6,236.2 L670.7,234.9 L669.8,233.7 L668.9,232.5 L667.8,231.4 L666.7,230.4 L665.6,229.5 L664.6,228.7 L663.6,228.1 L662.7,227.5 L661.9,227.0 L661.3,226.6 L660.8,226.3Z"/><circle cx="659" cy="228" r="2.50" fill="#14e6ea"/><circle cx="650" cy="281" r="1.50" fill="#14e6ea"/><path fill="#14e6ea" d="M650.0,279.7 L649.6,279.7 L649.0,279.8 L648.4,279.8 L647.7,279.9 L647.0,279.9 L646.4,279.9 L645.7,279.9 L645.2,279.9 L644.9,279.8 L644.7,279.7 L644.6,279.6 L644.4,279.4 L644.3,279.1 L644.1,278.7 L644.0,278.3 L643.9,277.9 L643.8,277.4 L643.8,277.0 L643.8,276.5 L643.8,276.1 L643.9,275.8 L644.0,275.3 L644.1,274.9 L644.3,274.4 L644.5,274.0 L644.7,273.5 L645.0,273.2 L645.2,272.9 L645.4,272.8 L645.5,272.7 L645.7,272.7 L645.9,272.6 L646.2,272.6 L646.5,272.7 L646.9,272.8 L647.3,272.9 L647.8,273.1 L648.2,273.4 L648.7,273.7 L649.2,274.0 L649.6,274.4 L650.1,274.9 L650.6,275.6 L651.2,276.3 L651.8,277.1 L652.4,277.9 L653.0,278.8 L653.7,279.6 L654.4,280.3 L655.2,281.0 L656.0,281.6 L656.7,282.1 L657.5,282.6 L658.4,283.1 L659.2,283.5 L660.1,283.9 L661.0,284.3 L661.8,284.7 L662.7,285.0 L663.6,285.2 L664.5,285.5 L665.5,285.7 L666.5,286.0 L667.4,286.2 L668.5,286.3 L669.5,286.4 L670.5,286.5 L671.5,286.5 L672.5,286.4 L673.5,286.3 L674.6,286.0 L675.7,285.6 L676.7,285.1 L677.7,284.6 L678.7,284.0 L679.6,283.5 L680.5,283.0 L681.2,282.5 L681.8,282.1 L682.3,281.9 L681.1,279.7 L680.6,280.0 L679.9,280.4 L679.2,280.9 L678.4,281.4 L677.5,281.9 L676.5,282.4 L675.6,282.8 L674.7,283.2 L673.8,283.5 L673.1,283.7 L672.3,283.8 L671.4,283.9 L670.6,283.9 L669.7,283.8 L668.8,283.7 L667.9,283.6 L667.0,283.4 L666.1,283.2 L665.2,283.0 L664.4,282.8 L663.5,282.5 L662.7,282.2 L661.9,281.9 L661.1,281.6 L660.4,281.2 L659.6,280.8 L658.9,280.4 L658.2,280.0 L657.5,279.5 L656.8,279.0 L656.2,278.5 L655.6,277.8 L655.0,277.1 L654.4,276.4 L653.9,275.6 L653.3,274.8 L652.7,274.0 L652.1,273.3 L651.5,272.6 L650.8,272.0 L650.2,271.5 L649.6,271.1 L648.9,270.8 L648.3,270.5 L647.7,270.3 L647.0,270.1 L646.4,270.0 L645.8,270.0 L645.1,270.1 L644.5,270.3 L643.9,270.6 L643.4,271.1 L642.9,271.6 L642.5,272.2 L642.2,272.8 L641.9,273.4 L641.7,274.0 L641.5,274.6 L641.3,275.3 L641.2,275.9 L641.2,276.5 L641.2,277.1 L641.2,277.7 L641.3,278.4 L641.5,279.0 L641.7,279.6 L641.9,280.3 L642.3,280.9 L642.7,281.4 L643.3,281.9 L644.0,282.2 L644.8,282.4 L645.6,282.5 L646.4,282.5 L647.2,282.5 L647.9,282.5 L648.6,282.4 L649.2,282.3 L649.7,282.3 L650.0,282.3Z"/><circle cx="650" cy="281" r="1.30" fill="#14e6ea"/><circle cx="681.7" cy="280.8" r="1.20" fill="#14e6ea"/><path fill="#14e6ea" d="M630.7,278.6 L630.8,278.4 L631.1,278.1 L631.3,277.8 L631.6,277.4 L631.9,277.0 L632.2,276.7 L632.5,276.3 L632.7,276.0 L633.0,275.7 L633.1,275.5 L631.9,274.5 L631.7,274.7 L631.5,274.9 L631.2,275.2 L630.9,275.6 L630.6,276.0 L630.3,276.3 L630.0,276.7 L629.7,277.0 L629.5,277.2 L629.3,277.4Z"/><circle cx="630" cy="278" r="0.90" fill="#14e6ea"/><circle cx="632.5" cy="275" r="0.80" fill="#14e6ea"/><path fill="#14e6ea" d="M715.0,238.2 L714.6,237.9 L714.1,237.5 L713.5,237.1 L712.8,236.6 L712.1,236.0 L711.4,235.5 L710.6,234.9 L709.9,234.4 L709.2,234.0 L708.5,233.6 L708.0,233.3 L707.6,233.0 L707.2,232.6 L706.6,232.3 L705.9,232.0 L705.0,231.9 L704.1,231.9 L703.2,232.1 L702.2,232.4 L701.3,232.8 L700.4,233.2 L699.4,233.8 L698.3,234.5 L697.1,235.2 L695.9,236.1 L694.7,237.1 L693.5,238.2 L692.3,239.5 L691.2,240.8 L690.2,242.2 L689.3,243.7 L688.5,245.1 L687.7,246.7 L687.0,248.3 L686.4,250.0 L685.8,251.8 L685.3,253.6 L684.9,255.5 L684.5,257.4 L684.3,259.4 L684.2,261.4 L684.1,263.5 L684.2,265.6 L684.3,267.7 L684.6,269.8 L684.9,271.9 L685.2,273.9 L685.7,275.9 L686.1,277.7 L686.7,279.4 L687.3,281.1 L688.1,282.7 L688.9,284.1 L689.8,285.5 L690.7,286.7 L691.7,287.8 L692.6,288.8 L693.5,289.7 L694.4,290.5 L695.3,291.2 L696.3,292.0 L697.4,292.6 L698.5,293.1 L699.5,293.4 L700.4,293.6 L701.2,293.7 L702.0,293.8 L702.6,293.8 L703.0,293.8 L703.3,293.8 L704.7,291.2 L704.3,290.8 L703.8,290.5 L703.3,290.1 L702.8,289.7 L702.3,289.3 L701.8,288.8 L701.4,288.3 L701.1,287.8 L700.9,287.3 L700.7,286.8 L700.4,286.0 L700.1,285.1 L699.8,284.2 L699.5,283.2 L699.2,282.1 L699.0,281.1 L698.8,280.0 L698.6,278.9 L698.5,277.7 L698.3,276.6 L698.2,275.2 L698.0,273.7 L697.9,272.1 L697.8,270.4 L697.7,268.7 L697.6,266.9 L697.6,265.2 L697.6,263.5 L697.6,262.0 L697.7,260.6 L697.9,259.3 L698.1,258.0 L698.3,256.6 L698.6,255.3 L698.9,253.9 L699.3,252.6 L699.7,251.3 L700.1,250.1 L700.5,248.9 L700.8,247.8 L701.2,246.8 L701.6,245.8 L702.0,244.7 L702.6,243.6 L703.1,242.6 L703.7,241.5 L704.2,240.6 L704.8,239.7 L705.3,238.9 L705.7,238.2 L705.9,237.8 L706.0,237.4 L706.0,237.2 L705.9,237.0 L705.8,236.8 L705.9,236.6 L706.1,236.4 L706.5,236.4 L707.0,236.4 L707.5,236.4 L708.0,236.5 L708.6,236.7 L709.3,237.0 L710.1,237.4 L710.8,237.9 L711.6,238.4 L712.3,238.8 L712.9,239.2 L713.4,239.6 L713.8,239.8Z"/><circle cx="714.4" cy="239" r="1.00" fill="#14e6ea"/><circle cx="704" cy="292.5" r="1.50" fill="#14e6ea"/><path fill="#14e6ea" d="M697.9,272.1 L698.3,271.8 L698.7,271.4 L699.3,270.9 L699.8,270.4 L700.5,269.8 L701.1,269.3 L701.8,268.8 L702.4,268.4 L703.0,268.0 L703.5,267.8 L704.1,267.6 L704.7,267.5 L705.3,267.3 L705.9,267.3 L706.5,267.2 L707.2,267.2 L707.8,267.3 L708.3,267.4 L708.9,267.5 L709.4,267.8 L709.9,268.1 L710.6,268.5 L711.2,268.9 L711.8,269.5 L712.4,270.0 L713.0,270.7 L713.5,271.3 L714.0,272.0 L714.4,272.7 L714.7,273.5 L714.9,274.3 L715.1,275.2 L715.2,276.2 L715.3,277.3 L715.3,278.5 L715.3,279.6 L715.2,280.7 L715.0,281.8 L714.9,282.8 L714.7,283.6 L714.4,284.4 L714.1,285.1 L713.7,285.9 L713.3,286.5 L712.8,287.2 L712.3,287.8 L711.7,288.4 L711.2,288.9 L710.6,289.4 L710.0,289.8 L709.5,290.2 L708.8,290.4 L708.0,290.7 L707.2,290.9 L706.3,291.1 L705.5,291.2 L704.7,291.3 L703.9,291.4 L703.2,291.5 L702.7,291.6 L703.3,294.4 L703.7,294.3 L704.3,294.2 L705.0,294.1 L705.9,294.0 L706.8,293.8 L707.8,293.6 L708.8,293.4 L709.8,293.1 L710.7,292.7 L711.6,292.2 L712.3,291.6 L713.0,291.0 L713.7,290.4 L714.4,289.7 L715.0,288.9 L715.6,288.1 L716.1,287.2 L716.6,286.3 L717.0,285.4 L717.3,284.4 L717.6,283.3 L717.8,282.2 L718.0,281.0 L718.1,279.7 L718.1,278.5 L718.1,277.2 L718.0,276.0 L717.9,274.8 L717.6,273.6 L717.3,272.5 L716.9,271.5 L716.4,270.6 L715.8,269.7 L715.1,268.9 L714.4,268.1 L713.7,267.4 L712.9,266.7 L712.2,266.2 L711.4,265.7 L710.6,265.2 L709.8,264.9 L709.0,264.7 L708.1,264.5 L707.3,264.4 L706.5,264.4 L705.6,264.5 L704.8,264.6 L704.0,264.7 L703.3,264.9 L702.5,265.2 L701.7,265.5 L700.9,266.0 L700.1,266.5 L699.4,267.1 L698.7,267.7 L698.0,268.3 L697.4,268.8 L696.9,269.3 L696.4,269.6 L696.1,269.9Z"/><circle cx="697" cy="271" r="1.40" fill="#14e6ea"/><circle cx="703" cy="293" r="1.40" fill="#14e6ea"/><path fill="#ffffff" d="M700.4,242.8 L700.2,243.7 L699.8,244.8 L699.3,246.0 L698.8,247.5 L698.3,249.0 L697.8,250.7 L697.3,252.5 L696.8,254.3 L696.5,256.1 L696.3,257.9 L696.2,259.9 L696.2,262.0 L696.2,264.3 L696.4,266.6 L696.6,269.0 L696.8,271.3 L697.0,273.4 L697.2,275.3 L697.3,276.8 L697.4,278.0 L698.6,278.0 L698.5,276.7 L698.4,275.1 L698.3,273.3 L698.1,271.1 L697.9,268.9 L697.8,266.6 L697.7,264.2 L697.6,262.0 L697.6,259.9 L697.7,258.1 L698.0,256.3 L698.3,254.6 L698.7,252.8 L699.1,251.1 L699.6,249.5 L700.1,247.9 L700.5,246.4 L701.0,245.2 L701.3,244.1 L701.6,243.2Z"/><path fill="none" stroke="#22d2e6" stroke-width="2.4" stroke-linecap="round" stroke-linejoin="round" d="M497.5,92.7 C499,90.5 502,91 502.8,94 L503.2,119 M503.7,99 C505,92 508,87.4 511.6,87.4 C514,88 515.1,91 515.1,95 L515.5,112 M516,96 C518,90 521,87.4 524,87.6 C528,88.5 529.5,93 530,100 C531,108 532,114 536.2,114.7 C541,114 544.5,106 544.1,98 C544,92 541.5,90 539.7,91 C537,93 536.5,103 538.5,110 C540,114 544,115 548.5,114.7 C554,113 557,106 557.3,99 C557,94 556.5,88 560.8,84.8 C566,83 569.5,90 569.5,99 C569.5,106 566,110 562.5,109.8 C559,109.5 557,104 557.3,99 "/><path fill="none" stroke="#22d2e6" stroke-width="2.4" stroke-linecap="round" stroke-linejoin="round" d="M577,91 L586,104 M586,90 L578,108"/><path fill="none" stroke="#22d2e6" stroke-width="2.4" stroke-linecap="round" stroke-linejoin="round" d="M599,89 L600,107 M597.5,78 L597.7,79"/><path fill="none" stroke="#22d2e6" stroke-width="2.4" stroke-linecap="round" stroke-linejoin="round" d="M610,83 L610.5,107 M620,86 L611,97 L624,106"/><path fill="none" stroke="#22d2e6" stroke-width="2.4" stroke-linecap="round" stroke-linejoin="round" d="M533,132 L556,131 M526,145 L556,143 M535,126 L535,151 M544,125 L543,150"/><path fill="none" stroke="#22d2e6" stroke-width="2.4" stroke-linecap="round" stroke-linejoin="round" d="M564,130 L563,154 M565,142 L578,140 M578,126 L579,155"/><path fill="none" stroke="#22d2e6" stroke-width="2.4" stroke-linecap="round" stroke-linejoin="round" d="M590,129 C584,130 583,140 584,147 C585,153 591,154 594,148 C596,142 596,131 590,129 Z"/><path fill="none" stroke="#22d2e6" stroke-width="2.4" stroke-linecap="round" stroke-linejoin="round" d="M604,132 L605,153 M605,117 L605,118"/><path fill="none" stroke="#22d2e6" stroke-width="2.4" stroke-linecap="round" stroke-linejoin="round" d="M619,125 L618,153 M619,126 C630,128 634,140 629,149 C626,153 622,152 620,151"/><path fill="none" stroke="#22d2e6" stroke-width="2.4" stroke-linecap="round" stroke-linejoin="round" d="M633,155 L642,123 L648,156 M636,143 L648,142"/><path fill="none" stroke="#22d2e6" stroke-width="2.4" stroke-linecap="round" stroke-linejoin="round" d="M655,153 L656,127 C664,127 665,139 656,141"/></g></g><rect x="840.5" y="96" width="109.5" height="79.5" fill="none" stroke="#e0141a" stroke-width="2"/></svg>
<div class="a" style="left:0px;top:530px;width:1024px;height:17px;background:#222"></div>
<div class="t" style="left:5px;top:535px;font-size:9.5px;color:#cfcfcf;">Undo</div>
<div class="a" style="left:0px;top:546px;width:1024px;height:30px;background:linear-gradient(90deg,#10143a 0%,#12164a 35%,#0e1140 55%,#0a0b2c 75%,#0b0c2a 100%)"></div>
<div class="a" style="left:0px;top:546px;width:1024px;height:1px;background:#5a5e80"></div>
<div class="a" style="left:150px;top:547px;width:44px;height:29px;background:linear-gradient(#a4a6b6,#8a8ca2 30%,#45476a 70%,#2c2e54);border:1px solid #9a9cae;border-radius:2px"></div>
<div class="a" style="left:196px;top:547px;width:44px;height:29px;background:linear-gradient(#a4a6b6,#8a8ca2 30%,#45476a 70%,#2c2e54);border:1px solid #9a9cae;border-radius:2px"></div>
<div class="a" style="left:243px;top:547px;width:44px;height:29px;background:linear-gradient(#c0c2cc,#8a8ca2 30%,#45476a 70%,#2c2e54);border:1px solid #9a9cae;border-radius:2px"></div>
<div class="a" style="left:289px;top:547px;width:44px;height:29px;background:linear-gradient(#a4a6b6,#8a8ca2 30%,#45476a 70%,#2c2e54);border:1px solid #9a9cae;border-radius:2px"></div>
<div class="a" style="left:905px;top:547px;width:108px;height:29px;background:linear-gradient(90deg,rgba(90,100,170,0.10),rgba(90,100,170,0.07));border-left:1px dotted rgba(150,160,220,0.25)"></div>
<div class="a" style="left:1013px;top:547px;width:11px;height:29px;background:linear-gradient(90deg,#3a3c58,#6a6c88,#3a3c58);border-left:1px solid #8a8ca0"></div>
<div class="t" style="left:923px;top:555px;font-size:9.5px;color:#d8d8e0;">EN</div>
<div class="t" style="left:967px;top:549px;font-size:9px;color:#f0f0f0;letter-spacing:-0.2px">1:06 PM</div>
<div class="t" style="left:963.5px;top:563px;font-size:9px;color:#f0f0f0;letter-spacing:-0.2px">7/16/2021</div>
<svg class="a" width="1024" height="576" viewBox="0 0 1024 576" style="left:0;top:0"><defs><filter id="glow" x="-50%" y="-50%" width="200%" height="200%"><feGaussianBlur stdDeviation="0.8" result="b"/><feFlood flood-color="#7fb0ff"/><feComposite in2="b" operator="in"/><feMerge><feMergeNode/><feMergeNode in="SourceGraphic"/></feMerge></filter></defs><g transform="translate(9,35) scale(1)"><path d="M3,12.5 C1.5,12.5 1.8,9.5 3.6,9.4 C3.8,7.4 5.8,6.6 7.3,7.5 C8,4.2 12.5,4.2 13,7.6 C15.2,7.4 15.8,12.5 13.5,12.5 Z" fill="#f2f6ff" filter="url(#glow)"/></g><g transform="translate(29,35) scale(1)"><path d="M5.5,8 L4,8 L4,14.5 L13,14.5 L13,8 L11.5,8 M8.5,11.5 L8.5,3.8 M6,6 L8.5,3.5 L11,6" fill="none" stroke="#e6e6e6" stroke-width="1.3" stroke-linecap="round" stroke-linejoin="round" /></g><g transform="translate(49,35) scale(1)"><path d="M8.5,4.5 C12.5,4.5 14.7,6.5 14.7,8.8 C14.7,11 12.5,12.8 9,12.8 L7,14.3 L7,12.6 C4.3,12.2 2.5,10.8 2.5,8.8 C2.5,6.5 4.7,4.5 8.5,4.5 Z" fill="#e6e6e6" /></g><g transform="translate(69.5,35) scale(1)"><path d="M2.5,4.5 L14.5,4.5 L14.5,12.5 L9.5,12.5 L8.5,14 L7.5,12.5 L2.5,12.5 Z" fill="#e6e6e6" /><path d="M4,6.5 L13,6.5 L13,7.5 L4,7.5 Z M4,9 L9,9 L9,10 L4,10 Z" fill="#3c3c3c" /></g><g transform="translate(90,35) scale(1)"><path d="M4,3.5 L10,3.5 L13,6.5 L13,15 L4,15 Z M5.5,9 L11.5,9 M5.5,11.5 L11.5,11.5 M5.5,6 L8.5,6" fill="none" stroke="#e6e6e6" stroke-width="1.1" stroke-linecap="round" stroke-linejoin="round" /></g><g transform="translate(110,35) scale(1)"><path d="M3,3.5 L14,3.5 L14,12 L3,12 Z M3,6.3 L14,6.3 M3,9.2 L14,9.2 M5.5,3.5 L5.5,12" fill="none" stroke="#e6e6e6" stroke-width="1" stroke-linecap="round" stroke-linejoin="round" /><path d="M6,11.5 m-3,0 a3,3 0 1,0 6,0 a3,3 0 1,0 -6,0" fill="#3c3c3c" /><path d="M6,11.5 m-2.6,0 a2.6,2.6 0 1,0 5.2,0 a2.6,2.6 0 1,0 -5.2,0 M6,10 L6,11.6 L7.2,11.6" fill="none" stroke="#e6e6e6" stroke-width="0.9" stroke-linecap="round" stroke-linejoin="round" /></g><g transform="translate(130,35) scale(1)"><path d="M3,6 L6.5,6 L6.5,8.7 L3,8.7 Z M7.5,6 L10.5,6 L10.5,8.7 L7.5,8.7 Z M3,9.7 L6.5,9.7 L6.5,12 L3,12 Z M7.5,9.7 L11,9.7 L11,12 L7.5,12 Z M3,13 L6.5,13 L6.5,15 L3,15 Z M7.5,13 L11,13 L11,15 L7.5,15 Z" fill="#e6e6e6" /><path d="M9,9 L14,3.5" fill="none" stroke="#e6e6e6" stroke-width="1.4" stroke-linecap="round" stroke-linejoin="round" /></g><g transform="translate(160,35) scale(1)"><path d="M4.5,8.2 L9,4.8 L9,6.9 C13,6.9 17,8.5 18.5,12.5 C16.5,10.5 13,10 9,10 L9,11.8 Z" fill="#e6e6e6" /></g><g transform="translate(186,35) scale(1)"><path d="M18.5,8.2 L14,4.8 L14,6.9 C10,6.9 6,8.5 4.5,12.5 C6.5,10.5 10,10 14,10 L14,11.8 Z" fill="#e6e6e6" /></g><g transform="translate(221,35) scale(1)"><path d="M8.5,9 m-5.5,0 a5.5,5.5 0 1,0 11,0 a5.5,5.5 0 1,0 -11,0 M4.7,5.2 L12.3,12.8" fill="none" stroke="#d0d0d0" stroke-width="1.2" stroke-linecap="round" stroke-linejoin="round" /></g><g transform="translate(241,35) scale(1)"><path d="M3,6 L14,4 M3,8 L14,6.5 M3,10 L14,9 M3,12 L14,11.5 M3,14 L14,14" fill="none" stroke="#cfcfcf" stroke-width="0.9" stroke-linecap="round" stroke-linejoin="round" /></g><g transform="translate(261,35) scale(1)"><path d="M5,4 L5,14 M7.5,4 L7.5,14 M10,4 L10,14 M12.5,4 L12.5,14 M4,6 L14,6 M4,8.5 L14,8.5 M4,11 L14,11 M4,13 L14,13" fill="none" stroke="#f2f8ff" stroke-width="0.9" stroke-linecap="round" stroke-linejoin="round" /></g><g transform="translate(282,35) scale(1)"><path d="M3.5,9 L14,3.5 M3.5,9 L14,6.5 M3.5,9 L14,9 M3.5,9 L14,11.5 M3.5,9 L14,14.5" fill="none" stroke="#d8d8d8" stroke-width="0.9" stroke-linecap="round" stroke-linejoin="round" /></g><g transform="translate(302,35) scale(1)"><path d="M8.5,3 L8.5,15 M2.5,9 L14.5,9 M4.3,4.8 L12.7,13.2 M12.7,4.8 L4.3,13.2" fill="none" stroke="#e6e6e6" stroke-width="1" stroke-linecap="round" stroke-linejoin="round" /></g><g transform="translate(322,35) scale(1)"><path d="M8.5,9 m-6,0 a6,6 0 1,0 12,0 a6,6 0 1,0 -12,0 M8.5,9 m-4.2,0 a4.2,4.2 0 1,0 8.4,0 a4.2,4.2 0 1,0 -8.4,0 M8.5,9 m-2.4,0 a2.4,2.4 0 1,0 4.8,0 a2.4,2.4 0 1,0 -4.8,0" fill="none" stroke="#cfcfcf" stroke-width="0.8" stroke-linecap="round" stroke-linejoin="round" /></g><g transform="translate(343,35) scale(1)"><path d="M4,4.5 C8,3.5 10,6 6.5,9 C3,12 9,14.5 13,13.5" fill="none" stroke="#d8d8d8" stroke-width="1.1" stroke-linecap="round" stroke-linejoin="round" /><path d="M4,4.5 m-1.3,0 a1.3,1.3 0 1,0 2.6,0 a1.3,1.3 0 1,0 -2.6,0 M13,13.5 m-1.3,0 a1.3,1.3 0 1,0 2.6,0 a1.3,1.3 0 1,0 -2.6,0" fill="#e6e6e6" /></g><g transform="translate(363,35) scale(1)"><path d="M8.5,9 m-5,0 a5,5 0 1,0 10,0 a5,5 0 1,0 -10,0" fill="none" stroke="#e0e0e0" stroke-width="1.2" stroke-linecap="round" stroke-linejoin="round" /><path d="M13.50,9.00 m-1.1,0 a1.1,1.1 0 1,0 2.2,0 a1.1,1.1 0 1,0 -2.2,0 M12.04,12.54 m-1.1,0 a1.1,1.1 0 1,0 2.2,0 a1.1,1.1 0 1,0 -2.2,0 M8.50,14.00 m-1.1,0 a1.1,1.1 0 1,0 2.2,0 a1.1,1.1 0 1,0 -2.2,0 M4.96,12.54 m-1.1,0 a1.1,1.1 0 1,0 2.2,0 a1.1,1.1 0 1,0 -2.2,0 M3.50,9.00 m-1.1,0 a1.1,1.1 0 1,0 2.2,0 a1.1,1.1 0 1,0 -2.2,0 M4.96,5.46 m-1.1,0 a1.1,1.1 0 1,0 2.2,0 a1.1,1.1 0 1,0 -2.2,0 M8.50,4.00 m-1.1,0 a1.1,1.1 0 1,0 2.2,0 a1.1,1.1 0 1,0 -2.2,0 M12.04,5.46 m-1.1,0 a1.1,1.1 0 1,0 2.2,0 a1.1,1.1 0 1,0 -2.2,0 " fill="#e6e6e6" /></g><g transform="translate(383,35) scale(1)"><path d="M8.5,9 m-2,0 a2,2 0 1,0 4,0 a2,2 0 1,0 -4,0" fill="none" stroke="#cfcfcf" stroke-width="1.1" stroke-linecap="round" stroke-linejoin="round" /><path d="M8.5,3.5 L9.6,5.2 L11.6,4.6 L11.9,6.6 L13.9,7.2 L13.2,9 L13.9,10.8 L11.9,11.4 L11.6,13.4 L9.6,12.8 L8.5,14.5 L7.4,12.8 L5.4,13.4 L5.1,11.4 L3.1,10.8 L3.8,9 L3.1,7.2 L5.1,6.6 L5.4,4.6 L7.4,5.2 Z" fill="none" stroke="#cfcfcf" stroke-width="1" stroke-linecap="round" stroke-linejoin="round" /></g><path d="M411.5,42 L415.5,46 M415.5,42 L411.5,46" fill="none" stroke="#d8d8d8" stroke-width="1.3" stroke-linecap="round" stroke-linejoin="round" /><path d="M577,42 L582,42 L579.5,45 Z" fill="#bdbdbd" /><path d="M678,43.5 m-5.5,0 a5.5,5.5 0 1,0 11,0 a5.5,5.5 0 1,0 -11,0 M674.2,39.7 L681.8,47.3" fill="none" stroke="#e0e0e0" stroke-width="1.2" stroke-linecap="round" stroke-linejoin="round" /><path d="M725.5,47.5 L732,40.5" fill="none" stroke="#e6e6e6" stroke-width="1.4" stroke-linecap="round" stroke-linejoin="round" /><g transform="translate(3,64) scale(1)"><path d="M15.5,3.5 L8.5,10.5" fill="none" stroke="#f4f8ff" stroke-width="1.8" stroke-linecap="round" stroke-linejoin="round" /><path d="M8.7,10.2 C7,10 4.5,11.5 4.8,14.2 C7.2,14.8 9.5,13 9.8,11.3 Z" fill="#f4f8ff" /></g><g transform="translate(3,88) scale(1)"><path d="M10.5,4 L16,9.5 L10,15.5 L4.5,10 Z" fill="#e8e8e8" /><path d="M10.5,6 L14,9.5 L11.5,12 L8,8.5 Z" fill="#3c3c3c" /></g><g transform="translate(3,111) scale(1)"><path d="M5,5 L15,5 L15,15 L5,15 Z" fill="none" stroke="#dcdcdc" stroke-width="1.3" stroke-linecap="round" stroke-linejoin="round" /></g><g transform="translate(3,134) scale(1)"><path d="M16,5 L9,12" fill="none" stroke="#e8e8e8" stroke-width="1.8" stroke-linecap="round" stroke-linejoin="round" /><path d="M5,11.5 m-1,0 a1,1 0 1,0 2,0 a1,1 0 1,0 -2,0 M7,13.5 m-1,0 a1,1 0 1,0 2,0 a1,1 0 1,0 -2,0 M9,15.5 m-1,0 a1,1 0 1,0 2,0 a1,1 0 1,0 -2,0" fill="#e8e8e8" /></g><g transform="translate(3,161) scale(1)"><path d="M10,3 L10,17 M3,10 L17,10" fill="none" stroke="#e8e8e8" stroke-width="1.3" stroke-linecap="round" stroke-linejoin="round" /><path d="M10,2.5 L12.3,5.2 L7.7,5.2 Z M10,17.5 L12.3,14.8 L7.7,14.8 Z M2.5,10 L5.2,7.7 L5.2,12.3 Z M17.5,10 L14.8,7.7 L14.8,12.3 Z" fill="#e8e8e8" /></g><g transform="translate(3,191) scale(1)"><path d="M5.5,5.5 L14.5,5.5 L14.5,14.5 L5.5,14.5 Z" fill="#e4e4e4" /></g><g transform="translate(3,214.5) scale(1)"><path d="M4,9 L15,9 L12.5,15.5 L6.5,15.5 Z" fill="#e8e8e8" /><path d="M6,9 C6,4 12,4 12,9" fill="none" stroke="#e8e8e8" stroke-width="1.2" stroke-linecap="round" stroke-linejoin="round" /><path d="M16,11 C17.5,13 17.5,15 16,15 C14.5,15 14.8,13 16,11 Z" fill="#e8e8e8" /></g><defs><linearGradient id="gr1" x1="0" y1="0" x2="1" y2="1"><stop offset="0" stop-color="#555"/><stop offset="1" stop-color="#d8d8d8"/></linearGradient></defs><g transform="translate(3,238) scale(1)"><rect x="4" y="5" width="12" height="10" fill="url(#gr1)" stroke="#e0e0e0" stroke-width="1.2"/></g><g transform="translate(3,265.5) scale(1)"><path d="M5,5 L15,5 L15,15 L5,15 Z" fill="none" stroke="#d8d8d8" stroke-width="1.2" stroke-linecap="round" stroke-linejoin="round" stroke-dasharray="1.6 1.4"/></g><g transform="translate(3,289) scale(1)"><path d="M4.5,13 C3.5,9 8,5 13,4.5 C17,4.5 16.5,9 13,12 C10,14.5 5.5,15.5 4.5,13 Z" fill="none" stroke="#d8d8d8" stroke-width="1.1" stroke-linecap="round" stroke-linejoin="round" stroke-dasharray="1.5 1.3"/></g><g transform="translate(3,312) scale(1)"><path d="M5,15 L12,8" fill="none" stroke="#ececec" stroke-width="2" stroke-linecap="round" stroke-linejoin="round" /><path d="M13.5,3.5 L13.5,5.5 M16.5,6.5 L14.5,6.5 M15.8,4.2 L14.6,5.4 M11,4.5 L12,5.5 M16,9.5 L15,8.5" fill="none" stroke="#ececec" stroke-width="1" stroke-linecap="round" stroke-linejoin="round" /></g><g transform="translate(3,335) scale(1)"><path d="M4.5,6 L4.5,15.5 L14,15.5" fill="none" stroke="#d8d8d8" stroke-width="1.1" stroke-linecap="round" stroke-linejoin="round" stroke-dasharray="1.5 1.3"/><path d="M16,4.5 L9,11.5" fill="none" stroke="#ececec" stroke-width="2" stroke-linecap="round" stroke-linejoin="round" /></g><g transform="translate(3,358) scale(1)"><path d="M4.5,6 L4.5,15.5 L14,15.5" fill="none" stroke="#d8d8d8" stroke-width="1.1" stroke-linecap="round" stroke-linejoin="round" stroke-dasharray="1.5 1.3"/><path d="M12,3.5 L16.5,8 L12.5,12 L8,7.5 Z" fill="#ececec" /><path d="M12,5.3 L14.7,8 L12.5,10.2 L9.8,7.5 Z" fill="#3c3c3c" /></g><g transform="translate(3,387.5) scale(1)"><path d="M3.5,4.5 L16.5,4.5 L16.7,8.5 L15.8,8.5 C15.5,6.8 14.8,6.2 13.5,6.2 L11.5,6.2 L11.5,15.8 C11.5,16.6 12.2,16.8 13.2,16.9 L13.2,17.8 L6.8,17.8 L6.8,16.9 C7.8,16.8 8.5,16.6 8.5,15.8 L8.5,6.2 L6.5,6.2 C5.2,6.2 4.5,6.8 4.2,8.5 L3.3,8.5 Z" fill="#ececec" /></g><g transform="translate(3,411.5) scale(1)"><path d="M5,8 L9,4.5 L13,7 L12,11 L7,12 Z" fill="none" stroke="#e0e0e0" stroke-width="1.2" stroke-linecap="round" stroke-linejoin="round" /><path d="M10,10 L16.5,13 L13.5,14 L15.5,17 L14.5,17.5 L12.5,14.5 L10.5,16.5 Z" fill="#ececec" /></g><g transform="translate(3,435) scale(1)"><path d="M4.5,15.5 L5,12.5 L13.5,4 C14.5,3 16.5,5 15.5,6 L7,14.5 Z" fill="none" stroke="#e8e8e8" stroke-width="1.2" stroke-linecap="round" stroke-linejoin="round" /><path d="M9.5,8 L13.5,4 C14.5,3 16.5,5 15.5,6 L11.5,10 Z" fill="#e8e8e8" /></g><g transform="translate(3,462) scale(1)"><path d="M4.5,15.5 L5,13 L11.5,6.5 L13.5,8.5 L7,15 Z" fill="none" stroke="#e8e8e8" stroke-width="1.2" stroke-linecap="round" stroke-linejoin="round" /><path d="M11,5 L13,3 C14,2 17.5,5.5 16.5,6.5 L14.5,8.5 L15,9 L14,10 L10,6 L11,5 Z" fill="#e8e8e8" /></g><g transform="translate(3,485.5) scale(1)"><path d="M6,16.5 C4.5,14 3,12 3.5,11 C4,10 5,10.5 6,12 L6,5.5 C6,4.5 7.5,4.5 7.5,5.5 L7.8,9.5 L8.2,4 C8.2,3 9.8,3 9.8,4 L10,9.5 L10.6,4.5 C10.7,3.5 12.2,3.6 12.1,4.6 L12,9.8 L13,6 C13.2,5 14.6,5.3 14.4,6.3 L13.8,12 C13.5,14.5 12.5,16 12,17 Z" fill="#f0f0f0" /></g><path d="M118,61 L114.5,61 L114.5,67 L120,67 L120,63.5 M117.5,63.5 L120.5,60.5" fill="none" stroke="#c0c0c0" stroke-width="1" stroke-linecap="round" stroke-linejoin="round" /><path d="M119.5,59 L122,59 L122,61.5 Z" fill="#c0c0c0" /><path d="M127.19999999999999,61.2 L132.2,66.2 M132.2,61.2 L127.19999999999999,66.2" fill="none" stroke="#d8d8d8" stroke-width="1.7" stroke-linecap="round" stroke-linejoin="round" /><path d="M1005,61 L1001.5,61 L1001.5,67 L1007,67 L1007,63.5 M1004.5,63.5 L1007.5,60.5" fill="none" stroke="#c0c0c0" stroke-width="1" stroke-linecap="round" stroke-linejoin="round" /><path d="M1006.5,59 L1009,59 L1009,61.5 Z" fill="#c0c0c0" /><path d="M1014.5,61.2 L1019.5,66.2 M1019.5,61.2 L1014.5,66.2" fill="none" stroke="#d8d8d8" stroke-width="1.7" stroke-linecap="round" stroke-linejoin="round" /><path d="M1005,184 L1001.5,184 L1001.5,190 L1007,190 L1007,186.5 M1004.5,186.5 L1007.5,183.5" fill="none" stroke="#c0c0c0" stroke-width="1" stroke-linecap="round" stroke-linejoin="round" /><path d="M1006.5,182 L1009,182 L1009,184.5 Z" fill="#c0c0c0" /><path d="M1014.5,184.2 L1019.5,189.2 M1019.5,184.2 L1014.5,189.2" fill="none" stroke="#d8d8d8" stroke-width="1.7" stroke-linecap="round" stroke-linejoin="round" /><path d="M1005,405 L1001.5,405 L1001.5,411 L1007,411 L1007,407.5 M1004.5,407.5 L1007.5,404.5" fill="none" stroke="#c0c0c0" stroke-width="1" stroke-linecap="round" stroke-linejoin="round" /><path d="M1006.5,403 L1009,403 L1009,405.5 Z" fill="#c0c0c0" /><path d="M1014.5,405.2 L1019.5,410.2 M1019.5,405.2 L1014.5,410.2" fill="none" stroke="#d8d8d8" stroke-width="1.7" stroke-linecap="round" stroke-linejoin="round" /><circle cx="127.5" cy="295.5" r="3.8" fill="none" stroke="#fff" stroke-width="1.6"/><path d="M112,73.5 A4.5,4.5 0 0,0 117,78" fill="none" stroke="#fff" stroke-width="1.3"/><g transform="translate(34,178) scale(1)"><path d="M8.5,3.5 C4.5,3.5 2.5,6.5 2.5,9.2 C2.5,12.5 5,14.5 7.5,14.5 C9,14.5 8.5,12.8 9.5,12.3 C10.5,11.8 14.5,12.8 14.5,9 C14.5,5.5 12,3.5 8.5,3.5 Z" fill="#e8e8e8" /><path d="M5.5,8 m-1,0 a1,1 0 1,0 2,0 a1,1 0 1,0 -2,0 M8,6 m-1,0 a1,1 0 1,0 2,0 a1,1 0 1,0 -2,0 M11,6.5 m-1,0 a1,1 0 1,0 2,0 a1,1 0 1,0 -2,0 M6,11 m-1,0 a1,1 0 1,0 2,0 a1,1 0 1,0 -2,0" fill="#3c3c3c" /></g><g transform="translate(54,178) scale(1)"><path d="M8.5,3.5 C4.5,3.5 2.5,6.5 2.5,9.2 C2.5,12.5 5,14.5 7.5,14.5 C9,14.5 8.5,12.8 9.5,12.3 C10.5,11.8 14.5,12.8 14.5,9 C14.5,5.5 12,3.5 8.5,3.5 Z" fill="#e8e8e8" /><path d="M5.5,8 m-1,0 a1,1 0 1,0 2,0 a1,1 0 1,0 -2,0 M8,6 m-1,0 a1,1 0 1,0 2,0 a1,1 0 1,0 -2,0 M11,6.5 m-1,0 a1,1 0 1,0 2,0 a1,1 0 1,0 -2,0 M6,11 m-1,0 a1,1 0 1,0 2,0 a1,1 0 1,0 -2,0" fill="#3c3c3c" /></g><path d="M63,190 L70,190 L70,194 L63,194 Z" fill="#3c3c3c" /><path d="M63.5,190.5 L69.5,190.5 L69.5,193.5 L63.5,193.5 Z" fill="none" stroke="#e8e8e8" stroke-width="1" stroke-linecap="round" stroke-linejoin="round" /><defs><pattern id="chk" width="8" height="8" patternUnits="userSpaceOnUse"><rect width="8" height="8" fill="#fff"/><rect width="4" height="4" fill="#e4e4e4"/><rect x="4" y="4" width="4" height="4" fill="#e4e4e4"/></pattern><pattern id="chk2" width="6" height="6" patternUnits="userSpaceOnUse"><rect width="6" height="6" fill="#fff"/><rect width="3" height="3" fill="#e6e6e6"/><rect x="3" y="3" width="3" height="3" fill="#e6e6e6"/></pattern></defs><rect x="35" y="105" width="17" height="18" fill="url(#chk)"/><rect x="794" y="259.5" width="26" height="20" fill="url(#chk2)"/><rect x="794" y="289.5" width="26" height="20" fill="url(#chk2)"/><rect x="794" y="319.5" width="26" height="20" fill="url(#chk2)"/><path d="M795,269 L819,269" stroke="#5fe0e6" stroke-width="1.4" stroke-dasharray="2 1"/><path d="M795,299 L819,299" stroke="#5fe0e6" stroke-width="1.6" stroke-dasharray="3 1"/><circle cx="805" cy="323.5" r="2" fill="#3ac4d4"/><circle cx="797.5" cy="336" r="1.7" fill="#3ac4d4"/><polygon points="1004.50,329.50 1002.12,331.41 1002.45,334.45 999.41,334.12 997.50,336.50 995.59,334.12 992.55,334.45 992.88,331.41 990.50,329.50 992.88,327.59 992.55,324.55 995.59,324.88 997.50,322.50 999.41,324.88 1002.45,324.55 1002.12,327.59" fill="#fff"/><circle cx="997.5" cy="329.5" r="4.8" fill="#fff"/><circle cx="997.5" cy="329.5" r="1.5" fill="#4d94d0"/><path d="M1015.5,255 L1019,260 L1012,260 Z" fill="#cfcfcf" /><path d="M1015.5,418 L1019,423 L1012,423 Z" fill="#cfcfcf" /><path d="M1015.5,370 L1019,365 L1012,365 Z" fill="#cfcfcf" /><path d="M1015.5,527 L1019,522 L1012,522 Z" fill="#cfcfcf" /><path d="M1010,223 L1015,223 L1012.5,226 Z" fill="#bdbdbd" /><g transform="translate(769,75) scale(1)"><path d="M7.5,7.5 m-4,0 a4,4 0 1,0 8,0 a4,4 0 1,0 -8,0 M10.5,10.5 L14,14" fill="none" stroke="#e0e0e0" stroke-width="1.4" stroke-linecap="round" stroke-linejoin="round" /><path d="M6.8,6 L7.8,5.2 L7.8,9.8" fill="none" stroke="#e0e0e0" stroke-width="1" stroke-linecap="round" stroke-linejoin="round" /></g><g transform="translate(794.5,75) scale(1)"><path d="M7.5,7.5 m-4,0 a4,4 0 1,0 8,0 a4,4 0 1,0 -8,0 M10.5,10.5 L14,14" fill="none" stroke="#e0e0e0" stroke-width="1.4" stroke-linecap="round" stroke-linejoin="round" /><path d="M5.5,7.5 L9.5,7.5 M7.5,5.5 L7.5,9.5" fill="none" stroke="#e0e0e0" stroke-width="1.1" stroke-linecap="round" stroke-linejoin="round" /></g><g transform="translate(815,75) scale(1)"><path d="M3,3.5 L14,3.5 L14,13.5 L3,13.5 Z" fill="none" stroke="#cfcfcf" stroke-width="1" stroke-linecap="round" stroke-linejoin="round" /><path d="M6,6.5 L11,6.5 L11,10.5 L6,10.5 Z" fill="#cfcfcf" /><path d="M3.5,4 L6,6.5 M13.5,4 L11,6.5 M3.5,13 L6,10.5 M13.5,13 L11,10.5" fill="none" stroke="#cfcfcf" stroke-width="0.9" stroke-linecap="round" stroke-linejoin="round" /></g><g transform="translate(835,75) scale(1)"><path d="M7.5,7.5 m-4,0 a4,4 0 1,0 8,0 a4,4 0 1,0 -8,0 M10.5,10.5 L14,14" fill="none" stroke="#e0e0e0" stroke-width="1.4" stroke-linecap="round" stroke-linejoin="round" /><path d="M5.5,7.5 L9.5,7.5" fill="none" stroke="#e0e0e0" stroke-width="1.1" stroke-linecap="round" stroke-linejoin="round" /></g><g transform="translate(860.5,75) scale(1)"><path d="M13.5,8.5 A5,5 0 1,1 9,3.6" fill="none" stroke="#d8d8d8" stroke-width="1.4" stroke-linecap="round" stroke-linejoin="round" /><path d="M8,1.8 L11.2,3.8 L8.2,5.8 Z" fill="#d8d8d8" /><path d="M6,7.5 L10,6 L11.5,9.5 L7.5,11 Z" fill="#d8d8d8" /></g><g transform="translate(881,75) scale(1)"><path d="M4.5,5 L12.5,5 L12.5,12 L4.5,12 Z" fill="#e8e8e8" /><path d="M2,2.5 L4.5,5 M15,2.5 L12.5,5 M2,14.5 L4.5,12 M15,14.5 L12.5,12" fill="none" stroke="#e8e8e8" stroke-width="1" stroke-linecap="round" stroke-linejoin="round" /></g><g transform="translate(901,75) scale(1)"><path d="M3.5,8.5 A5,5 0 1,0 8,3.6" fill="none" stroke="#d8d8d8" stroke-width="1.4" stroke-linecap="round" stroke-linejoin="round" /><path d="M9,1.8 L5.8,3.8 L8.8,5.8 Z" fill="#d8d8d8" /><path d="M6,7.5 L10,6 L11.5,9.5 L7.5,11 Z" fill="#d8d8d8" /></g><g transform="translate(926.5,75) scale(1)"><path d="M3,7 L7.5,7 L7.5,13 L3,13 Z" fill="#e0e0e0" /><path d="M9.5,7 L14,7 L14,13 L9.5,13 Z" fill="none" stroke="#e0e0e0" stroke-width="1" stroke-linecap="round" stroke-linejoin="round" /><path d="M8.5,5 L8.5,14.5 M4,6 C5,2.5 12,2.5 13,6" fill="none" stroke="#e0e0e0" stroke-width="0.9" stroke-linecap="round" stroke-linejoin="round" /></g><g transform="translate(771,374) scale(1)"><path d="M4,3 L10,3 L13,6 L13,14.5 L4,14.5 Z" fill="none" stroke="#e0e0e0" stroke-width="1.1" stroke-linecap="round" stroke-linejoin="round" /></g><g transform="translate(791,374) scale(1)"><path d="M4,3 L10,3 L13,6 L13,14.5 L4,14.5 Z" fill="none" stroke="#e0e0e0" stroke-width="1.1" stroke-linecap="round" stroke-linejoin="round" /><path d="M8.5,8 m-1.6,0 a1.6,1.6 0 1,0 3.2,0 a1.6,1.6 0 1,0 -3.2,0 M8.5,11.3 m-1.6,0 a1.6,1.6 0 1,0 3.2,0 a1.6,1.6 0 1,0 -3.2,0" fill="none" stroke="#e0e0e0" stroke-width="0.9" stroke-linecap="round" stroke-linejoin="round" /></g><g transform="translate(811,374) scale(1)"><path d="M4,3 L10,3 L13,6 L13,14.5 L4,14.5 Z" fill="none" stroke="#e0e0e0" stroke-width="1.1" stroke-linecap="round" stroke-linejoin="round" /><path d="M8.5,12.5 L8.5,7 M7,8.5 L8.5,7 L10,8.5" fill="none" stroke="#e0e0e0" stroke-width="0.9" stroke-linecap="round" stroke-linejoin="round" /></g><g transform="translate(831,374) scale(1)"><path d="M3,3 L8,3 L10.5,5.5 L10.5,9 M3,3 L3,13 L6,13" fill="none" stroke="#e0e0e0" stroke-width="1.1" stroke-linecap="round" stroke-linejoin="round" /><path d="M9,10 L9,15 M6.5,12.5 L11.5,12.5" fill="none" stroke="#e0e0e0" stroke-width="1.3" stroke-linecap="round" stroke-linejoin="round" /><path d="M15,9 L20,9 L17.5,12 Z" fill="#e0e0e0" /></g><g transform="translate(857,374) scale(1)"><path d="M2.5,5 L7,5 L8.5,6.5 L14.5,6.5 L14.5,13.5 L2.5,13.5 Z" fill="#e6e6e6" /></g><g transform="translate(882,374) scale(1)"><path d="M5.5,3.5 L13.5,3.5 L13.5,11.5 M3.5,5.5 L11.5,5.5 L11.5,13.5 L3.5,13.5 Z" fill="none" stroke="#e0e0e0" stroke-width="1.1" stroke-linecap="round" stroke-linejoin="round" /></g><g transform="translate(902,374) scale(1)"><path d="M3,3 L7,3 L7,6 L3,6 Z M3,11 L7,11 L7,14 L3,14 Z M10,7 L14.5,7 L14.5,10.5 L10,10.5 Z" fill="#e6e6e6" /><path d="M5,6 L5,11 M5,8.7 L10,8.7" fill="none" stroke="#e6e6e6" stroke-width="1" stroke-linecap="round" stroke-linejoin="round" /></g><g transform="translate(928,374) scale(1)"><path d="M4.5,5.5 L12.5,5.5 L12,14.5 L5,14.5 Z M3,4.5 L14,4.5 M7,3 L10,3 M7,7.5 L7,12.5 M8.5,7.5 L8.5,12.5 M10,7.5 L10,12.5" fill="none" stroke="#e0e0e0" stroke-width="1" stroke-linecap="round" stroke-linejoin="round" /></g><circle cx="5.5" cy="8" r="4.5" fill="#2bb5a0"/><path d="M5.5,3.5 A4.5,4.5 0 0,0 1.3,6.5 L5.5,8 Z" fill="#e8403a"/><path d="M5.5,8 L1.3,6.5 A4.5,4.5 0 0,0 3,11.8 Z" fill="#3a6ad8"/><rect x="951" y="6" width="9" height="3.5" fill="#fff" stroke="#3a3a3a" stroke-width="0.9"/><rect x="973.5" y="2.5" width="6.5" height="6.5" fill="none" stroke="#3a3a3a" stroke-width="2.2"/><rect x="973.5" y="2.5" width="6.5" height="6.5" fill="none" stroke="#fff" stroke-width="1"/><rect x="971" y="5" width="6.5" height="6.5" fill="#fff" stroke="#3a3a3a" stroke-width="1"/><rect x="973" y="7" width="2.5" height="2.5" fill="#3a3a3a"/><path d="M1000.5,3.5 L1007.5,10 M1007.5,3.5 L1000.5,10" stroke="#3a3a3a" stroke-width="3.6" stroke-linecap="round"/><path d="M1000.5,3.5 L1007.5,10 M1007.5,3.5 L1000.5,10" stroke="#fff" stroke-width="1.8" stroke-linecap="round"/><defs><radialGradient id="orb" cx="0.5" cy="0.35" r="0.65"><stop offset="0" stop-color="#9ad0f0"/><stop offset="0.5" stop-color="#2a7ab8"/><stop offset="1" stop-color="#0a2a60"/></radialGradient><radialGradient id="orbg" cx="0.5" cy="1" r="0.7"><stop offset="0" stop-color="#60e0ff" stop-opacity="0.8"/><stop offset="1" stop-color="#60e0ff" stop-opacity="0"/></radialGradient></defs><circle cx="20.5" cy="561" r="13.5" fill="url(#orb)" stroke="#6a90b8" stroke-width="0.8"/><circle cx="20.5" cy="561" r="13" fill="url(#orbg)"/><path d="M14,556 C16,555 17.5,555.5 19.8,556.5 L19,561 C17,560 15.5,559.8 13.2,560.5 Z" fill="#f05a28"/><path d="M21,556.8 C23,557.5 25,557.5 27,556.5 L26.3,561 C24.5,562 22.5,562 20.3,561.3 Z" fill="#8ac83a"/><path d="M13,561.5 C15.3,560.8 17,561 19,562 L18.2,566.3 C16,565.5 14.5,565.3 12.3,566 Z" fill="#2a9ae0"/><path d="M20.2,562.5 C22.3,563.2 24.2,563.2 26.2,562.2 L25.5,566.6 C23.5,567.6 21.5,567.5 19.5,566.8 Z" fill="#fcc030"/><path d="M68,552 L68,569.5 L82,560.8 Z" fill="#7a3ae0"/><path d="M89.5,552 L89.5,569.5 L77.5,560.8 Z" fill="#c8b0f8"/><path d="M118,561 C118,555 122,552.5 125.5,552.5 C130,552.5 132.5,556 132.5,560 L121.5,560 C121.5,563 123.5,565 126,565 C128,565 129.5,564 130.3,562.5 L132.3,563.5 C131,567 128.5,568.5 125,568.5 C121,568.5 118,565.5 118,561 Z M121.7,558 L129,558 C128.8,556 127.5,554.8 125.5,554.8 C123.5,554.8 122,556 121.7,558 Z" fill="#2a9ae8"/><path d="M116,569 C113,565 122,553 133,551.5 C136,551 136,554 134,556" fill="none" stroke="#f0c030" stroke-width="1.8"/><circle cx="171.7" cy="560.5" r="11.5" fill="#5aa83a" stroke="#e8f0e0" stroke-width="1"/><circle cx="171.7" cy="560.5" r="4.5" fill="none" stroke="#e8f0e0" stroke-width="2"/><path d="M174,549.5 L176,554 M178.5,551 L177,555.5 M182,554.5 L178.5,557.5" stroke="#f07030" stroke-width="2"/><circle cx="218.3" cy="560.5" r="11" fill="#e04a3a"/><path d="M218.3,560.5 L227.8,555 A11,11 0 0,1 218.3,571.5 Z" fill="#f8c840"/><path d="M218.3,560.5 L218.3,571.5 A11,11 0 0,1 208.8,555 Z" fill="#3aa850"/><circle cx="218.3" cy="560.5" r="5" fill="#fff"/><circle cx="218.3" cy="560.5" r="3.8" fill="#4a8ae8"/><rect x="252.5" y="549.5" width="24" height="23" rx="4" fill="#f2f2f4"/><circle cx="264.5" cy="562.5" r="6.5" fill="#2ab8a0"/><path d="M264.5,556 A6.5,6.5 0 0,0 258,562.5 L264.5,562.5 Z" fill="#e84a3a"/><path d="M264.5,562.5 L271,562.5 A6.5,6.5 0 0,1 264.5,569 Z" fill="#3a8ae0"/><path d="M262,556.5 C264,553 267,552 268.5,551" stroke="#f07a30" stroke-width="2.5" fill="none"/><path d="M311,553 C304,553 300,557.5 300,561 C300,565 303.5,567 306.5,567 C308.5,567 308,564.5 309.5,564 C311,563.5 317.5,565 318,561 C318.5,556.5 316,553 311,553 Z" fill="#d8e4ec"/><circle cx="304.5" cy="560" r="1.6" fill="#e04040"/><circle cx="307" cy="556.5" r="1.6" fill="#40a040"/><circle cx="311" cy="555.5" r="1.6" fill="#f0c030"/><circle cx="308" cy="561.8" r="1.2" fill="#203040"/><path d="M313,570 L320,552" stroke="#e0a040" stroke-width="1.8"/><path d="M319,553 L321.5,548.5" stroke="#c08060" stroke-width="2.5"/><path d="M946.5,564 L949.5,561 L952.5,564 Z" fill="#f0f0f0"/><path d="M754.5,74 L758.5,79.5 L750.5,79.5 Z" fill="#cfcfcf"/><path d="M754.5,512.5 L758.5,507 L750.5,507 Z" fill="#cfcfcf"/><path d="M142,522.7 L146.5,519 L146.5,526.5 Z" fill="#cfcfcf"/><path d="M759,522 L753.5,518 L753.5,526 Z" fill="#cfcfcf"/></svg>
</body></html>
